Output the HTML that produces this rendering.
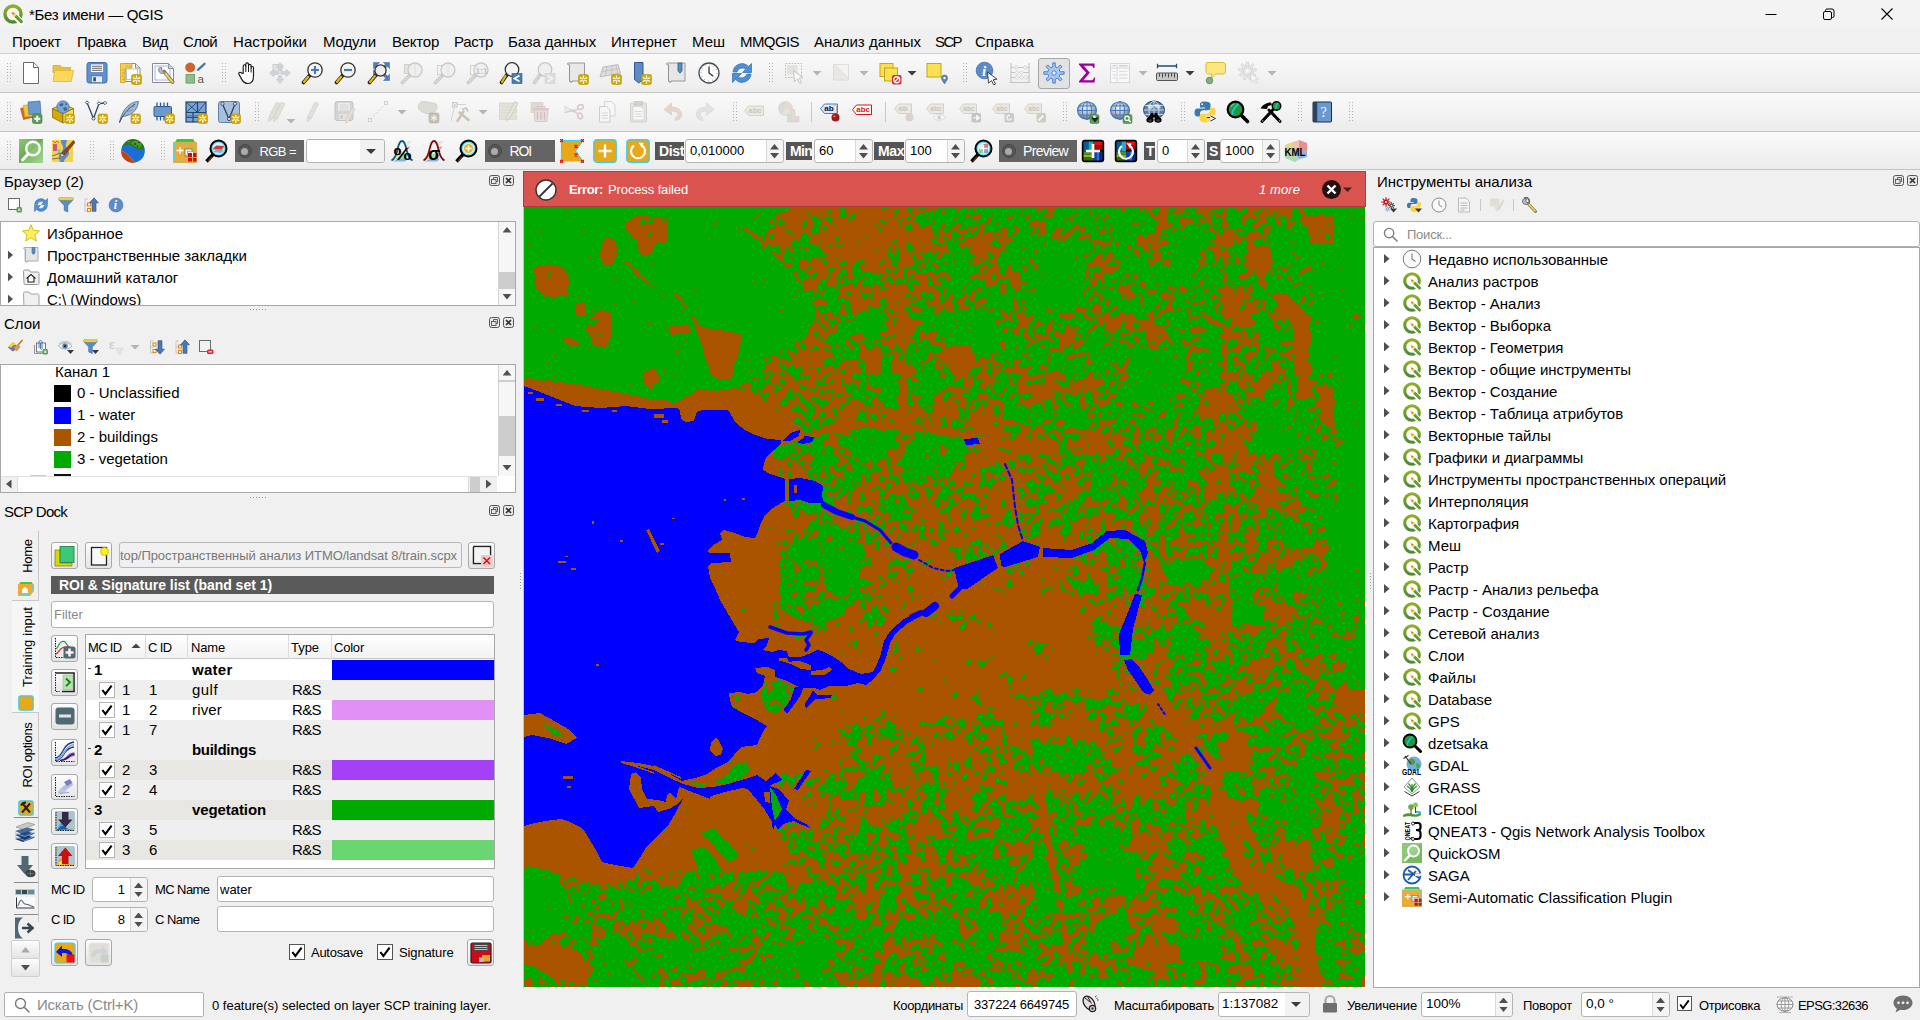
<!DOCTYPE html><html lang="ru"><head><meta charset="utf-8"><title>QGIS</title><style>
*{box-sizing:border-box}
html,body{margin:0;padding:0;overflow:hidden}
body{width:1920px;height:1020px;overflow:hidden;background:#f0f0f0;font-family:"Liberation Sans",sans-serif;font-size:15px;color:#000;position:relative}
.a{position:absolute}
.t{position:absolute;white-space:nowrap;line-height:1}
.s13{font-size:13px}
.tb{position:absolute;left:0;width:1920px;height:39px;background:linear-gradient(#fafafa,#ececec);border-bottom:1px solid #c4c4c4}
.grip{position:absolute;width:5px;height:22px;background-image:radial-gradient(circle,#b0b0b0 0.7px,transparent 1px);background-size:3px 3px}
.vsep{position:absolute;width:1px;background:#c8c8c8}
.ic{position:absolute;width:24px;height:24px}
.ic svg,.ic16 svg{display:block}
.ic16{position:absolute;width:16px;height:16px}
.dd{position:absolute;width:9px;height:4.5px;background:#3c3c3c;clip-path:polygon(0 0,100% 0,50% 100%)}
.dd.dis{background:#b4b4b4}
.box{position:absolute;background:#fff;border:1px solid #a8a8a8}
.fld{position:absolute;background:#fff;border:1px solid #b4b4b4;border-radius:2px}
.gray{position:absolute;background:#585858;color:#fff}
.btn{position:absolute;background:linear-gradient(#fdfdfd,#e4e4e4);border:1px solid #a9a9a9;border-radius:3px}
.sb{position:absolute;background:#f0f0f0}
.spin{position:absolute;background:#fff;border:1px solid #b4b4b4;border-radius:3px}
.spin .ar{position:absolute;right:0;top:0;bottom:0;width:17px;background:#f4f4f4;border-left:1px solid #d8d8d8;border-radius:0 3px 3px 0}
.up{position:absolute;width:9px;height:5.5px;background:#4f4f4f;clip-path:polygon(50% 0,100% 100%,0 100%)}
.dn{position:absolute;width:9px;height:5.5px;background:#4f4f4f;clip-path:polygon(0 0,100% 0,50% 100%)}
.cb{position:absolute;width:15px;height:15px;background:#fff;border:1px solid #555}
.rt{position:absolute;width:5.5px;height:9.4px;background:#505050;clip-path:polygon(0 0,100% 50%,0 100%)}
</style></head><body>
<div class="a" style="left:0;top:0;width:1920px;height:29px;background:#f3f3f3"></div>
<div class="a" style="left:2.0px;top:3.0px;width:22px;height:22px"><svg width="22" height="22" viewBox="0 0 20 20"><defs><linearGradient id="qg0" x1="0" y1="0" x2="0" y2="1"><stop offset="0" stop-color="#93b023"/><stop offset="1" stop-color="#4e8a38"/></linearGradient></defs><circle cx="10" cy="10" r="7.300" fill="none" stroke="url(#qg0)" stroke-width="3.100"/><path d="M12 12L19.500 19.500" stroke="#fff" stroke-width="5.600"/><path d="M8.600 8L12 9.400 10 11.400z" fill="#ee7913"/><path d="M12 9.400L13.300 10.700 11.300 12.700 10 11.400z" fill="#f0e64a"/><path d="M13.300 10.700L18.600 16a1.400 1.400 0 0 1-2 2L11.300 12.700z" fill="#589632"/><path d="M12.600 11.400L17.800 16.600" stroke="#7fb048" stroke-width="0.700"/></svg></div>
<div class="t " style="left:29px;top:6.5px;font-size:15px;letter-spacing:-0.310px;">*Без имени — QGIS</div>
<svg class="a" style="left:1740px;top:0" width="180" height="29" viewBox="0 0 180 29"><path d="M25.5 14.5h11" stroke="#000" stroke-width="1"/><rect x="83.5" y="11.5" width="8" height="8" rx="1.5" fill="none" stroke="#000"/><path d="M85.5 11.5v-1a1.5 1.5 0 0 1 1.5 -1.5h5a2 2 0 0 1 2 2v5a1.5 1.5 0 0 1 -1.5 1.5h-1" fill="none" stroke="#000"/><path d="M141.5 8.5l11 11M152.5 8.5l-11 11" stroke="#000" stroke-width="1.1"/></svg>
<div class="a" style="left:0;top:29px;width:1920px;height:25px;background:#f0f0f0;border-bottom:1px solid #d0d0d0"></div>
<div class="t " style="left:12px;top:33.5px;font-size:15px;letter-spacing:-0.07px">Проект</div>
<div class="t " style="left:77px;top:33.5px;font-size:15px;letter-spacing:-0.28px">Правка</div>
<div class="t " style="left:142px;top:33.5px;font-size:15px;letter-spacing:-0.38px">Вид</div>
<div class="t " style="left:183px;top:33.5px;font-size:15px;letter-spacing:-0.62px">Слой</div>
<div class="t " style="left:233px;top:33.5px;font-size:15px;letter-spacing:0.05px">Настройки</div>
<div class="t " style="left:323px;top:33.5px;font-size:15px;letter-spacing:-0.12px">Модули</div>
<div class="t " style="left:392px;top:33.5px;font-size:15px;letter-spacing:-0.24px">Вектор</div>
<div class="t " style="left:454px;top:33.5px;font-size:15px;letter-spacing:-0.31px">Растр</div>
<div class="t " style="left:508px;top:33.5px;font-size:15px;letter-spacing:-0.12px">База данных</div>
<div class="t " style="left:611px;top:33.5px;font-size:15px;letter-spacing:0.07px">Интернет</div>
<div class="t " style="left:692px;top:33.5px;font-size:15px;letter-spacing:-0.02px">Меш</div>
<div class="t " style="left:740px;top:33.5px;font-size:15px;letter-spacing:-0.59px">MMQGIS</div>
<div class="t " style="left:814px;top:33.5px;font-size:15px;letter-spacing:0.02px">Анализ данных</div>
<div class="t " style="left:935px;top:33.5px;font-size:15px;letter-spacing:-1.61px">SCP</div>
<div class="t " style="left:975px;top:33.5px;font-size:15px;letter-spacing:0.02px">Справка</div>
<div class="tb" style="top:54px;height:39px"></div>
<div class="tb" style="top:93px;height:39px"></div>
<div class="tb" style="top:132px;height:38px"></div>
<div class="grip" style="left:6px;top:62px"></div>
<div class="a" style="left:19.0px;top:61.0px;width:24px;height:24px"><svg width="24" height="24" viewBox="0 0 24 24"><path d="M4.5 1.5h10.2l4.8 4.8v16.2h-15z" fill="#fff" stroke="#6a6a6a"/><path d="M14.5 1.8v4.7h4.8" fill="#f2f2f2" stroke="#6a6a6a"/></svg></div>
<div class="a" style="left:51.0px;top:61.0px;width:24px;height:24px"><svg width="24" height="24" viewBox="0 0 24 24"><path d="M2 4.5h7.2l1.8 2h8.5v5H2z" fill="#e9c13c" stroke="#d2aa2e" stroke-width="0.8"/><path d="M3.6 9.5h19l-2.4 11H2.2z" fill="#fbd75b" stroke="#dcb63a" stroke-width="0.8"/></svg></div>
<div class="a" style="left:85.0px;top:61.0px;width:24px;height:24px"><svg width="24" height="24" viewBox="0 0 24 24"><rect x="2" y="1.5" width="20" height="20.5" rx="2.2" fill="#5f92cc" stroke="#3f6ea8"/><rect x="5.5" y="3" width="13" height="8.5" fill="#fdfdfd" stroke="#3f6ea8" stroke-width="0.6"/><path d="M7 5.3h10M7 7.3h10M7 9.3h10" stroke="#555" stroke-width="0.9"/><rect x="6.5" y="15" width="11" height="6.5" fill="#e8eef6" stroke="#3f6ea8" stroke-width="0.6"/><rect x="8.3" y="16.3" width="2.6" height="4" fill="#2d4a70"/></svg></div>
<div class="a" style="left:118.0px;top:61.0px;width:24px;height:24px"><svg width="24" height="24" viewBox="0 0 24 24"><path d="M7 2.5h10.5l4.5 4.5v13.5H7z" fill="#fff" stroke="#8a8a8a"/><path d="M17.5 2.8v4.2h4.2" fill="#eee" stroke="#8a8a8a"/><rect x="8.5" y="8" width="11" height="10.5" fill="none" stroke="#9fb4e8" stroke-width="0.8"/><path d="M2.5 2.5h11.5v4.5h-7v14.5h-4.5z" fill="#f5cf4c" stroke="#c9a21c" stroke-width="0.8"/><path d="M4 9h2M4 12h3M4 15h2M4 18h3M9 4v1.5M12 4v2" stroke="#c9a21c" stroke-width="0.8"/><rect x="13.5" y="13.5" width="10" height="10" rx="1.8" fill="#d4aa00" stroke="#b8920a" stroke-width="0.6"/><g stroke="#fff" stroke-width="1.3" stroke-linecap="round"><path d="M18.5 14.9V22.1M15.37 16.70L21.63 20.30M15.37 20.30L21.63 16.70"/></g><circle cx="18.5" cy="18.5" r="1.10" fill="#d4aa00"/></svg></div>
<div class="a" style="left:151.0px;top:61.0px;width:24px;height:24px"><svg width="24" height="24" viewBox="0 0 24 24"><path d="M1.5 2.5h16l5 5v14h-21z" fill="#fff" stroke="#8a8a8a"/><path d="M17.5 2.8v4.7h4.7" fill="#eee" stroke="#8a8a8a"/><rect x="4" y="5" width="15" height="14" fill="none" stroke="#9fb4e8" stroke-width="1"/><path d="M13 10.5l8.5 10.5" stroke="#8a7a4a" stroke-width="3.6" stroke-linecap="round"/><path d="M14.5 12.5l6.8 8.3" stroke="#f0d060" stroke-width="2" stroke-linecap="round"/><path d="M8.5 6.5a3.6 3.6 0 1 0 6 3.8l-2.2.4-1.8-1.6.5-2.4z" fill="#b8bcc2" stroke="#70757c" stroke-width="0.8"/></svg></div>
<div class="a" style="left:183.0px;top:61.0px;width:24px;height:24px"><svg width="24" height="24" viewBox="0 0 24 24"><circle cx="7.2" cy="6.5" r="4.6" fill="#d2622a" stroke="#b24a18" stroke-width="0.6"/><path d="M15 8.8l6.5-6" stroke="#4a76ae" stroke-width="2.4" stroke-linecap="round"/><rect x="3" y="13.5" width="8.6" height="8.6" fill="#8fbc8f" stroke="#5d9a5d" stroke-width="0.8"/><text x="14.5" y="21.8" style="font-family:'Liberation Sans',sans-serif" font-size="11.5" fill="#555">a</text></svg></div>
<div class="grip" style="left:221px;top:62px"></div>
<div class="a" style="left:235.0px;top:61.0px;width:24px;height:24px"><svg width="24" height="24" viewBox="0 0 24 24"><path d="M8.2 12.5V5.2c0-2 2.6-2 2.6 0V3.4c0-2 2.7-2 2.7 0v1.4c0-1.9 2.6-1.9 2.6 0v2c0-1.7 2.4-1.7 2.4 0v8.2c0 4-1.6 7.5-5.5 7.5-3.6 0-4.8-1.6-6.4-4.4L4 13.400c-1-1.800 1-2.800 2.200-1.500z" fill="#fff" stroke="#1a1a1a" stroke-width="1.15" stroke-linejoin="round"/><path d="M10.800 5v6M13.500 4.500v6.500M16.100 6.500v5" stroke="#1a1a1a" stroke-width="1"/></svg></div>
<div class="a" style="left:268.0px;top:61.0px;width:24px;height:24px"><svg width="24" height="24" viewBox="0 0 24 24"><rect x="5" y="3.500" width="9" height="9" fill="#e4e2dc" stroke="#cfcdc8"/><g fill="#cfd3d8" stroke="#bfc3c8" stroke-width="0.5"><path d="M12 1.500l3.800 4.500h-2.300v3.500h-3v-3.500H8.200z"/><path d="M12 22.500l3.800-4.500h-2.300v-3.500h-3v3.500H8.200z"/><path d="M1.500 12l4.500-3.800v2.300h3.500v3H6v2.300z"/><path d="M22.500 12l-4.500-3.800v2.300h-3.500v3H18v2.300z"/></g></svg></div>
<div class="a" style="left:301.0px;top:61.0px;width:24px;height:24px"><svg width="24" height="24" viewBox="0 0 24 24"><path d="M8.8 14.2L2.5 21.5" stroke="#222" stroke-width="3.6" stroke-linecap="round"/><path d="M7.2 15.8L3 21" stroke="#e6b800" stroke-width="2.2" stroke-linecap="round"/><circle cx="14" cy="9" r="7.2" fill="#f4f4f4" stroke="#333" stroke-width="1.3"/><path d="M10 9h8M14 5v8" stroke="#4a7ab5" stroke-width="2.2"/></svg></div>
<div class="a" style="left:334.0px;top:61.0px;width:24px;height:24px"><svg width="24" height="24" viewBox="0 0 24 24"><path d="M8.8 14.2L2.5 21.5" stroke="#222" stroke-width="3.6" stroke-linecap="round"/><path d="M7.2 15.8L3 21" stroke="#e6b800" stroke-width="2.2" stroke-linecap="round"/><circle cx="14" cy="9" r="7.2" fill="#f4f4f4" stroke="#333" stroke-width="1.3"/><path d="M10 9h8" stroke="#4a7ab5" stroke-width="2.2"/></svg></div>
<div class="a" style="left:367.0px;top:61.0px;width:24px;height:24px"><svg width="24" height="24" viewBox="0 0 24 24"><g fill="#4e80b8" stroke="#3a659a" stroke-width="0.5"><path d="M6.500 1.500h6l-2.200 2.200 2.500 2.500-2 2-2.500-2.500-1.800 2z"/><path d="M22.500 1.500v6l-2.200-2.200-2.500 2.500-2-2 2.500-2.500-2-1.800z"/><path d="M22.500 19.500h-6l2.200-2.200-2.500-2.500 2-2 2.500 2.500 1.800-2z"/><path d="M6.500 14v-5l2 2z"/></g><path d="M9.5 13.5L2.5 21.5" stroke="#222" stroke-width="3.6" stroke-linecap="round"/><path d="M7.9 15.1L3 21" stroke="#e6b800" stroke-width="2.2" stroke-linecap="round"/><circle cx="13.5" cy="9.5" r="5.6" fill="#ececec" stroke="#333" stroke-width="1.3"/></svg></div>
<div class="a" style="left:400.0px;top:61.0px;width:24px;height:24px"><svg width="24" height="24" viewBox="0 0 24 24"><rect x="4.500" y="3.500" width="8" height="9" fill="#e6e4de" stroke="#d2d0ca"/><path d="M10.0 14.0L2.5 21.5" stroke="#c8c8c8" stroke-width="3.6" stroke-linecap="round"/><path d="M8.4 15.6L3 21" stroke="#d8d6d0" stroke-width="2.2" stroke-linecap="round"/><circle cx="15" cy="9" r="7" fill="#efefef" stroke="#c8c8c8" stroke-width="1.3"/><path d="M15 2.500v13" stroke="#dcdcdc" stroke-width="0.8"/></svg></div>
<div class="a" style="left:433.0px;top:61.0px;width:24px;height:24px"><svg width="24" height="24" viewBox="0 0 24 24"><rect x="4.500" y="4.500" width="8" height="9" fill="#f4f4f4" stroke="#d2d0ca"/><path d="M10.0 14.0L2.5 21.5" stroke="#c8c8c8" stroke-width="3.6" stroke-linecap="round"/><path d="M8.4 15.6L3 21" stroke="#d8d6d0" stroke-width="2.2" stroke-linecap="round"/><circle cx="15" cy="9" r="7" fill="#efefef" stroke="#c8c8c8" stroke-width="1.3"/><path d="M15 2.500v13" stroke="#dcdcdc" stroke-width="0.8"/></svg></div>
<div class="a" style="left:466.0px;top:61.0px;width:24px;height:24px"><svg width="24" height="24" viewBox="0 0 24 24"><rect x="4.500" y="4.500" width="8" height="9" fill="#f4f4f4" stroke="#d2d0ca"/><path d="M10.0 14.0L2.5 21.5" stroke="#c8c8c8" stroke-width="3.6" stroke-linecap="round"/><path d="M8.4 15.6L3 21" stroke="#d8d6d0" stroke-width="2.2" stroke-linecap="round"/><circle cx="15" cy="9" r="7" fill="#efefef" stroke="#c8c8c8" stroke-width="1.3"/><text x="9.500" y="12.500" style="font-family:'Liberation Sans',sans-serif" font-weight="bold" font-size="8.500" fill="#c4c4c4">1:1</text></svg></div>
<div class="a" style="left:499.0px;top:61.0px;width:24px;height:24px"><svg width="24" height="24" viewBox="0 0 24 24"><path d="M8.1 13.4L2.5 21.5" stroke="#222" stroke-width="3.6" stroke-linecap="round"/><path d="M6.5 15.0L3 21" stroke="#e6b800" stroke-width="2.2" stroke-linecap="round"/><circle cx="13" cy="8.5" r="6.8" fill="#f4f4f4" stroke="#333" stroke-width="1.3"/><rect x="13" y="12.500" width="10" height="10" fill="#4a7ab5" stroke="#2f5a90" stroke-width="0.6"/><path d="M20.500 14.500l-5 3 5 3" fill="none" stroke="#fff" stroke-width="1.8"/></svg></div>
<div class="a" style="left:532.0px;top:61.0px;width:24px;height:24px"><svg width="24" height="24" viewBox="0 0 24 24"><path d="M8.1 13.4L2.5 21.5" stroke="#c8c8c8" stroke-width="3.6" stroke-linecap="round"/><path d="M6.5 15.0L3 21" stroke="#d8d6d0" stroke-width="2.2" stroke-linecap="round"/><circle cx="13" cy="8.5" r="6.8" fill="#efefef" stroke="#c8c8c8" stroke-width="1.3"/><rect x="13" y="12.500" width="10" height="10" fill="#dcdcdc" stroke="#cfcfcf" stroke-width="0.6"/><path d="M15.500 14.500l5 3-5 3" fill="none" stroke="#f4f4f4" stroke-width="1.8"/></svg></div>
<div class="a" style="left:565.0px;top:61.0px;width:24px;height:24px"><svg width="24" height="24" viewBox="0 0 24 24"><path d="M3.500 2c-1.500 0-1.500 1.800 0 1.800h1v15.700c0 2.500 3 2.500 3 .5h12V2z" fill="#e8e8e8" stroke="#8f8f8f" stroke-width="0.9"/><path d="M4.500 3.800v15.500c0 1.200 2 1.500 3 .7" fill="none" stroke="#8f8f8f" stroke-width="0.8"/><rect x="13.5" y="13.5" width="10" height="10" rx="1.8" fill="#d4aa00" stroke="#b8920a" stroke-width="0.6"/><g stroke="#fff" stroke-width="1.3" stroke-linecap="round"><path d="M18.5 14.9V22.1M15.37 16.70L21.63 20.30M15.37 20.30L21.63 16.70"/></g><circle cx="18.5" cy="18.5" r="1.10" fill="#d4aa00"/></svg></div>
<div class="a" style="left:598.0px;top:61.0px;width:24px;height:24px"><svg width="24" height="24" viewBox="0 0 24 24"><path d="M5 6l15-2.500 2.500 8.500L2 16z" fill="#dcdcdc" stroke="#b4b4b4" stroke-width="0.8"/><path d="M9 5.300l-2 10M14 4.500l-.5 9.800M18 3.900l1.500 8.800M4 10.500l17-3" stroke="#bcbcbc" stroke-width="0.7" fill="none"/><rect x="13.5" y="13.5" width="10" height="10" rx="1.8" fill="#d4aa00" stroke="#b8920a" stroke-width="0.6"/><g stroke="#fff" stroke-width="1.3" stroke-linecap="round"><path d="M18.5 14.9V22.1M15.37 16.70L21.63 20.30M15.37 20.30L21.63 16.70"/></g><circle cx="18.5" cy="18.5" r="1.10" fill="#d4aa00"/></svg></div>
<div class="a" style="left:631.0px;top:61.0px;width:24px;height:24px"><svg width="24" height="24" viewBox="0 0 24 24"><path d="M3.500 1.500h8.500v17l-4.200 3.500-4.300-3.500z" fill="#5b8cc6" stroke="#2f5a90"/><rect x="10.5" y="13.5" width="10" height="10" rx="1.8" fill="#d4aa00" stroke="#b8920a" stroke-width="0.6"/><g stroke="#fff" stroke-width="1.3" stroke-linecap="round"><path d="M15.5 14.9V22.1M12.37 16.70L18.63 20.30M12.37 20.30L18.63 16.70"/></g><circle cx="15.5" cy="18.5" r="1.10" fill="#d4aa00"/></svg></div>
<div class="a" style="left:664.0px;top:61.0px;width:24px;height:24px"><svg width="24" height="24" viewBox="0 0 24 24"><path d="M3.500 2c-1.500 0-1.500 1.800 0 1.800h1v15.700c0 2.500 3 2.500 3 .5h13.500V2z" fill="#e6e6e6" stroke="#8f8f8f" stroke-width="0.9"/><path d="M4.500 3.800v15.500c0 1.200 2 1.500 3 .7" fill="none" stroke="#8f8f8f" stroke-width="0.8"/><path d="M14 2h4v8l-2 2.200-2-2.200z" fill="#5b8cc6" stroke="#2f5a90" stroke-width="0.8"/></svg></div>
<div class="a" style="left:697.0px;top:61.0px;width:24px;height:24px"><svg width="24" height="24" viewBox="0 0 24 24"><circle cx="12" cy="12" r="10" fill="#fdfdfd" stroke="#4a4a4a" stroke-width="1.3"/><circle cx="12" cy="12" r="8" fill="none" stroke="#6a9ad4" stroke-width="1" stroke-dasharray="0.9 3.290"/><path d="M12 5.500V12l4.200 3.200" fill="none" stroke="#333" stroke-width="1.3"/></svg></div>
<div class="a" style="left:730.0px;top:61.0px;width:24px;height:24px"><svg width="24" height="24" viewBox="0 0 24 24"><path d="M3 11a9 9 0 0 1 15.500-5.500L21.500 2.500v9h-9l3.200-3.200A5.500 5.500 0 0 0 7 11z" fill="#4d8fd6" stroke="#2f6bb0" stroke-width="0.7"/><path d="M21 13a9 9 0 0 1-15.500 5.500L2.500 21.500v-9h9l-3.200 3.200A5.500 5.500 0 0 0 17 13z" fill="#4d8fd6" stroke="#2f6bb0" stroke-width="0.7"/></svg></div>
<div class="grip" style="left:768px;top:62px"></div>
<div class="a" style="left:783.0px;top:61.0px;width:24px;height:24px"><svg width="24" height="24" viewBox="0 0 24 24"><rect x="2.500" y="2.500" width="16" height="14" fill="none" stroke="#b4b4b4" stroke-width="0.9" stroke-dasharray="1.600 1.400"/><rect x="4" y="4" width="10.500" height="9.500" fill="#e4e2dc"/><path d="M10.500 9.500l9.500 7.200-3.800.5 2.300 4.300-1.800.9-2.200-4.300-3 2.500z" fill="#f8f8f8" stroke="#bdbdbd" stroke-width="0.9" stroke-linejoin="round"/></svg></div>
<div class="dd dis" style="left:812.5px;top:71px"></div>
<div class="a" style="left:830.0px;top:61.0px;width:24px;height:24px"><svg width="24" height="24" viewBox="0 0 24 24"><path d="M3.500 3.500h15v15.500h-15z" fill="#e9e7e1" stroke="#dcdad4"/><path d="M5 3.500h13.500v14z" fill="#f4f3f0" stroke="#dcdad4" stroke-width="0.8"/></svg></div>
<div class="dd dis" style="left:859.5px;top:71px"></div>
<div class="a" style="left:878.0px;top:61.0px;width:24px;height:24px"><svg width="24" height="24" viewBox="0 0 24 24"><rect x="2" y="2.500" width="13" height="13" fill="#fbe14f" stroke="#c9a21c"/><rect x="6.500" y="7" width="13" height="13" fill="#fbe14f" stroke="#c9a21c"/><rect x="14" y="14" width="9.500" height="9.500" rx="2" fill="#e0242c"/><circle cx="18.750" cy="18.750" r="3" fill="none" stroke="#fff" stroke-width="1.300"/><path d="M16.700 20.800l4.100-4.100" stroke="#fff" stroke-width="1.300"/></svg></div>
<div class="dd" style="left:907.5px;top:71px"></div>
<div class="a" style="left:925.0px;top:61.0px;width:24px;height:24px"><svg width="24" height="24" viewBox="0 0 24 24"><rect x="2" y="2.500" width="14" height="13.500" fill="#fbe14f" stroke="#c9a21c"/><path d="M19.500 23c-2-3-3-4.500-3-6a3 3 0 0 1 6 0c0 1.500-1 3-3 6z" fill="#5b86ae" stroke="#40688e" stroke-width="0.6"/><circle cx="19.500" cy="17" r="1.200" fill="#fff"/></svg></div>
<div class="grip" style="left:962px;top:62px"></div>
<div class="a" style="left:975.0px;top:61.0px;width:24px;height:24px"><svg width="24" height="24" viewBox="0 0 24 24"><circle cx="9.500" cy="9.500" r="8.300" fill="#5b8cc6" stroke="#3f6ea8" stroke-width="0.8"/><text x="7" y="15" font-family="Liberation Serif,serif" font-style="italic" font-weight="bold" font-size="15" fill="#fff">i</text><path d="M12.500 11l9.500 7.200-3.800.5 2.300 4.300-1.800.9-2.200-4.300-3 2.500z" fill="#fff" stroke="#333" stroke-width="0.9" stroke-linejoin="round"/></svg></div>
<div class="a" style="left:1008.0px;top:61.0px;width:24px;height:24px"><svg width="24" height="24" viewBox="0 0 24 24"><path d="M3 2v19M21 2v19M1.500 21.500h21M3 6.500h18M3 11.500h18M3 16.500h18" stroke="#c4c4c4" stroke-width="1.100" fill="none"/><g fill="#f6f0f0" stroke="#d8c4c4" stroke-width="0.8"><path d="M6 6.500l2-2 2 2-2 2zM15 6.500l2-2 2 2-2 2z"/></g><g fill="#f4f4f4" stroke="#cfcfcf" stroke-width="0.8"><path d="M7 11.500l2-2 2 2-2 2zM11.500 11.500l2-2 2 2-2 2zM7 16.500l2-2 2 2-2 2zM11.500 16.500l2-2 2 2-2 2zM16 16.500l2-2 2 2-2 2z"/></g></svg></div>
<div class="a" style="left:1038px;top:58px;width:32px;height:31px;background:#e2e2e2;border:1px solid #a6a6a6;border-radius:3px"></div>
<div class="a" style="left:1042.0px;top:61.0px;width:24px;height:24px"><svg width="24" height="24" viewBox="0 0 24 24"><path d="M10.79 5.92L10.72 1.88L13.28 1.88L13.21 5.92L15.44 6.84L18.25 3.94L20.06 5.75L17.16 8.56L18.08 10.79L22.12 10.72L22.12 13.28L18.08 13.21L17.16 15.44L20.06 18.25L18.25 20.06L15.44 17.16L13.21 18.08L13.28 22.12L10.72 22.12L10.79 18.08L8.56 17.16L5.75 20.06L3.94 18.25L6.84 15.44L5.92 13.21L1.88 13.28L1.88 10.72L5.92 10.79L6.84 8.56L3.94 5.75L5.75 3.94L8.56 6.84z" fill="#a9c7ee" stroke="#4a80c8" stroke-width="1" stroke-linejoin="round"/><circle cx="12" cy="12" r="2.200" fill="#f4f4f4" stroke="#4a80c8" stroke-width="1"/></svg></div>
<div class="a" style="left:1075.0px;top:61.0px;width:24px;height:24px"><svg width="24" height="24" viewBox="0 0 24 24"><path d="M4 2.500h15.500v4.500h-1.200c-.3-1.800-1-2.300-3-2.300H8.800l6 7-6.500 7.600h7.500c2 0 2.800-.8 3.200-2.800h1.200l-.7 5H4v-1.200l7.200-8.500L4 3.800z" fill="#9b009b"/></svg></div>
<div class="a" style="left:1108.0px;top:61.0px;width:24px;height:24px"><svg width="24" height="24" viewBox="0 0 24 24"><rect x="2.500" y="2.500" width="19" height="19" fill="#f8f8f8" stroke="#d4d8dc"/><path d="M2.500 7h19M9 2.500v19" stroke="#d4d8dc"/><path d="M4.500 4.800h3M11 4.800h8.500" stroke="#d0d0d0" stroke-width="1.600"/><path d="M4.500 10.500h3M11 10.500h8.500M4.500 13.800h3M11 13.800h8.500M4.500 17.100h3M11 17.100h8.500" stroke="#dcdcdc" stroke-width="1.200"/></svg></div>
<div class="dd dis" style="left:1138.5px;top:71px"></div>
<div class="a" style="left:1155.0px;top:61.0px;width:24px;height:24px"><svg width="24" height="24" viewBox="0 0 24 24"><path d="M2.500 5h19M2.500 2.800v4.400M21.500 2.800v4.400" stroke="#1f4e79" stroke-width="1.300" fill="none"/><rect x="1.500" y="12" width="21" height="7.500" rx="1" fill="#c8c8c8" stroke="#555"/><path d="M4.500 12.500v3M7.500 12.500v4M10.500 12.500v3M13.500 12.500v4M16.500 12.500v3M19.500 12.500v4" stroke="#333" stroke-width="0.9"/></svg></div>
<div class="dd" style="left:1185.5px;top:71px"></div>
<div class="a" style="left:1204.0px;top:61.0px;width:24px;height:24px"><svg width="24" height="24" viewBox="0 0 24 24"><path d="M3 1.500h16c1.500 0 2.500 1 2.500 2.500v6.500c0 1.500-1 2.500-2.500 2.500h-7.500L6.500 18.500l1.500-5.500H4.500C3 13 2 12 2 10.500V4c0-1.500.5-2.500 1-2.500z" fill="#fbe680" stroke="#d4b420" stroke-width="0.9"/><circle cx="5.500" cy="19.500" r="3.200" fill="#7fb27f" stroke="#4e8a4e" stroke-width="0.9"/></svg></div>
<div class="a" style="left:1237.0px;top:61.0px;width:24px;height:24px"><svg width="24" height="24" viewBox="0 0 24 24"><path d="M9.46 4.09L9.50 1.06L11.50 1.06L11.54 4.09L13.50 4.80L15.48 2.50L17.02 3.79L15.10 6.14L16.14 7.95L19.13 7.46L19.48 9.43L16.50 10.00L16.14 12.05L18.75 13.60L17.74 15.34L15.10 13.86L13.50 15.20L14.50 18.06L12.62 18.75L11.54 15.91L9.46 15.91L8.38 18.75L6.50 18.06L7.50 15.20L5.90 13.86L3.26 15.34L2.25 13.60L4.86 12.05L4.50 10.00L1.52 9.43L1.87 7.46L4.86 7.95L5.90 6.14L3.98 3.79L5.52 2.50L7.50 4.80z" fill="#ececec" stroke="#d4d4d4" stroke-width="0.9"/><circle cx="10.500" cy="10" r="4.500" fill="#e4e6ea" stroke="#d0d0d0"/><path d="M9 7.500l4 2.500-4 2.500z" fill="#f8f8f8"/><path d="M13.500 12l8 6-3.200.4 2 3.600-1.500.8-1.900-3.600-2.500 2.100z" fill="#f6f6f6" stroke="#d0d0d0" stroke-width="0.8" stroke-linejoin="round"/></svg></div>
<div class="dd dis" style="left:1267.5px;top:71px"></div>
<div class="grip" style="left:6px;top:101px"></div>
<div class="a" style="left:19.0px;top:100.0px;width:24px;height:24px"><svg width="24" height="24" viewBox="0 0 24 24"><path d="M1.500 8.500l10-2.500 3 11-10 2.500z" fill="#d2622a" stroke="#a84a18" stroke-width="0.6"/><path d="M4 5.500l10.500-1.500 1.800 11.500-10.500 1.500z" fill="#f4c430" stroke="#c9a21c" stroke-width="0.6"/><path d="M9 2l12-1 1 12.500-12 1z" fill="#6b98cf" stroke="#3f6ea8" stroke-width="0.7"/><rect x="13.500" y="14" width="9.500" height="9.500" rx="1.800" fill="#5a9a5a" stroke="#3c7a3c" stroke-width="0.6"/><path d="M18.250 15.800v6M15.250 18.800h6" stroke="#fff" stroke-width="1.900"/></svg></div>
<div class="a" style="left:51.0px;top:100.0px;width:24px;height:24px"><svg width="24" height="24" viewBox="0 0 24 24"><path d="M1.500 8.500l10.500 5v9.500l-10.500-5.500z" fill="#d4aa00" stroke="#7a6200" stroke-width="0.7"/><path d="M12 13.500l10.500-5v9l-10.500 5.500z" fill="#fbe14f" stroke="#7a6200" stroke-width="0.7"/><path d="M1.500 8.500l10.500-4.500 10.500 4.500-10.500 5z" fill="#e8c840" stroke="#7a6200" stroke-width="0.7"/><circle cx="12" cy="7" r="6.200" fill="#7aa3d6" stroke="#4a70a8" stroke-width="0.7"/><path d="M8 5c1-1.500 3-2 4-1.500s0 2-1 2.500-2 .5-3-1zM12.500 7.500c1.500-.5 3 0 3.500 1s-1 2.500-2 2.500-2-2.500-1.500-3.500zM14 3c1 0 2 .8 2.500 1.800l-2 .2z" fill="#3f6596"/><rect x="14" y="14" width="9.5" height="9.5" rx="1.8" fill="#d4aa00" stroke="#b8920a" stroke-width="0.6"/><g stroke="#fff" stroke-width="1.3" stroke-linecap="round"><path d="M18.75 15.33V22.17M15.77 17.04L21.73 20.46M15.77 20.46L21.73 17.04"/></g><circle cx="18.75" cy="18.75" r="1.04" fill="#d4aa00"/></svg></div>
<div class="a" style="left:84.0px;top:100.0px;width:24px;height:24px"><svg width="24" height="24" viewBox="0 0 24 24"><path d="M3 2.500l6.500 16L15 3.500l6 -.5" fill="none" stroke="#2b4660" stroke-width="1.300"/><g fill="#fff" stroke="#2b4660" stroke-width="0.9"><path d="M3 .8l1.700 1.700-1.700 1.700-1.700-1.700zM15 1.800l1.700 1.700-1.700 1.700-1.700-1.700zM21 1.300l1.700 1.700-1.700 1.700-1.700-1.700z"/><circle cx="9.500" cy="18.500" r="1.500"/></g><rect x="14" y="14" width="9.5" height="9.5" rx="1.8" fill="#d4aa00" stroke="#b8920a" stroke-width="0.6"/><g stroke="#fff" stroke-width="1.3" stroke-linecap="round"><path d="M18.75 15.33V22.17M15.77 17.04L21.73 20.46M15.77 20.46L21.73 17.04"/></g><circle cx="18.75" cy="18.75" r="1.04" fill="#d4aa00"/></svg></div>
<div class="a" style="left:117.0px;top:100.0px;width:24px;height:24px"><svg width="24" height="24" viewBox="0 0 24 24"><path d="M2.500 22.500c1.500-7 4-13 9.500-17.500 3-2.500 6.500-3.500 9.500-3.500-.5 4-2 8-5.500 11-3 2.500-7 3.500-10.500 4z" fill="#9fb9d6" stroke="#4a6a8e" stroke-width="0.8"/><path d="M2.500 22.500c3-7.500 8-13.500 15.500-18.500" fill="none" stroke="#35506e" stroke-width="1"/><path d="M8 12l8-2M11 8l7-2M6 16l7-1.500" stroke="#6f8db0" stroke-width="0.7"/><rect x="14" y="14" width="9.5" height="9.5" rx="1.8" fill="#d4aa00" stroke="#b8920a" stroke-width="0.6"/><g stroke="#fff" stroke-width="1.3" stroke-linecap="round"><path d="M18.75 15.33V22.17M15.77 17.04L21.73 20.46M15.77 20.46L21.73 17.04"/></g><circle cx="18.75" cy="18.75" r="1.04" fill="#d4aa00"/></svg></div>
<div class="a" style="left:151.0px;top:100.0px;width:24px;height:24px"><svg width="24" height="24" viewBox="0 0 24 24"><rect x="3" y="6.500" width="17.500" height="10" rx="1.200" fill="#6b98cf" stroke="#2f5a90" stroke-width="1"/><path d="M6 6.500V2.500M9.500 6.500V2.500M13 6.500V2.500M16.500 6.500V2.500M6 16.500v4M9.500 16.500v4M13 16.500v4" stroke="#2f5a90" stroke-width="1.300"/><rect x="14" y="14" width="9.5" height="9.5" rx="1.8" fill="#d4aa00" stroke="#b8920a" stroke-width="0.6"/><g stroke="#fff" stroke-width="1.3" stroke-linecap="round"><path d="M18.75 15.33V22.17M15.77 17.04L21.73 20.46M15.77 20.46L21.73 17.04"/></g><circle cx="18.75" cy="18.75" r="1.04" fill="#d4aa00"/></svg></div>
<div class="a" style="left:184.0px;top:100.0px;width:24px;height:24px"><svg width="24" height="24" viewBox="0 0 24 24"><rect x="2" y="2" width="20" height="20" fill="#7ba4d4" stroke="#1f4470" stroke-width="1.200"/><path d="M2 12.500h20M13.500 2v10.500M9 12.500V22M2 17.500h20" stroke="#1f4470" stroke-width="1.200"/><path d="M2 2l11.500 10.500M13.500 2L2 12.500M13.500 12.500L22 2" stroke="#1f4470" stroke-width="0.9"/><rect x="2.600" y="15" width="18.800" height="2.500" fill="#456e9e" opacity="0.500"/><rect x="14" y="14" width="9.5" height="9.5" rx="1.8" fill="#d4aa00" stroke="#b8920a" stroke-width="0.6"/><g stroke="#fff" stroke-width="1.3" stroke-linecap="round"><path d="M18.75 15.33V22.17M15.77 17.04L21.73 20.46M15.77 20.46L21.73 17.04"/></g><circle cx="18.75" cy="18.75" r="1.04" fill="#d4aa00"/></svg></div>
<div class="a" style="left:217.0px;top:100.0px;width:24px;height:24px"><svg width="24" height="24" viewBox="0 0 24 24"><rect x="1.500" y="1.500" width="21" height="21" rx="2.200" fill="#a8c0de" stroke="#5f82b0" stroke-width="1"/><path d="M5.500 4l6.500 15 6-15" fill="none" stroke="#2b4660" stroke-width="1.300"/><g fill="#dfe9f5" stroke="#2b4660" stroke-width="0.9"><circle cx="5.500" cy="3.800" r="1.600"/><circle cx="18" cy="3.800" r="1.600"/><circle cx="12" cy="19" r="1.600"/></g><rect x="14" y="14" width="9.5" height="9.5" rx="1.8" fill="#d4aa00" stroke="#b8920a" stroke-width="0.6"/><g stroke="#fff" stroke-width="1.3" stroke-linecap="round"><path d="M18.75 15.33V22.17M15.77 17.04L21.73 20.46M15.77 20.46L21.73 17.04"/></g><circle cx="18.75" cy="18.75" r="1.04" fill="#d4aa00"/></svg></div>
<div class="grip" style="left:254px;top:101px"></div>
<div class="a" style="left:266.0px;top:100.0px;width:24px;height:24px"><svg width="24" height="24" viewBox="0 0 24 24"><path d="M10.5 2l3.500 1.800-7.500 15-4 3 .5-5z" fill="#e2e0da" stroke="#d0cec8" stroke-width="0.7"/><path d="M3.0 16.800l3.500 1.800" stroke="#d0cec8" stroke-width="0.7"/><path d="M15.5 2l3.500 1.800-7.500 15-4 3 .5-5z" fill="#e2e0da" stroke="#d0cec8" stroke-width="0.7"/><path d="M8.0 16.800l3.500 1.800" stroke="#d0cec8" stroke-width="0.7"/></svg></div>
<div class="dd dis" style="left:286.5px;top:119px"></div>
<div class="a" style="left:301.0px;top:100.0px;width:24px;height:24px"><svg width="24" height="24" viewBox="0 0 24 24"><path d="M14 2l3.500 1.800-7.500 15-4 3 .5-5z" fill="#e2e0da" stroke="#d0cec8" stroke-width="0.7"/><path d="M6.5 16.800l3.500 1.800" stroke="#d0cec8" stroke-width="0.7"/></svg></div>
<div class="a" style="left:333.0px;top:100.0px;width:24px;height:24px"><svg width="24" height="24" viewBox="0 0 24 24"><rect x="2" y="1.500" width="18" height="19" rx="2" fill="#d4d4d4" stroke="#c4c4c4"/><rect x="5" y="3" width="12" height="7.500" fill="#ebebeb"/><path d="M6.500 5h9M6.500 7h9M6.500 9h9" stroke="#d0d0d0" stroke-width="0.800"/><rect x="6" y="14" width="9" height="6" fill="#e4e4e4"/><rect x="7.500" y="15.200" width="2.200" height="3.600" fill="#c8c8c8"/><path d="M19 8l3 1.500-6 11-3.500 2.500.5-4.500z" fill="#e6dcd4" stroke="#d4cac2" stroke-width="0.7"/></svg></div>
<div class="a" style="left:366.0px;top:100.0px;width:24px;height:24px"><svg width="24" height="24" viewBox="0 0 24 24"><path d="M4.500 19.500L19.500 3.500" stroke="#cfcfcf" stroke-width="1" stroke-dasharray="2.200 1.800"/><rect x="2.500" y="18.500" width="3" height="3" fill="#f4f4f4" stroke="#c8c8c8" stroke-width="0.8"/><rect x="18.500" y="1.500" width="3" height="3" fill="#f4f4f4" stroke="#c8c8c8" stroke-width="0.8"/></svg></div>
<div class="dd dis" style="left:397.5px;top:110px"></div>
<div class="a" style="left:416.0px;top:100.0px;width:24px;height:24px"><svg width="24" height="24" viewBox="0 0 24 24"><path d="M2.500 8c-1-4 2-6.500 6-6.500 3.500 0 5 1.500 8 1.500 3 0 4.500 1 4.500 3.500 0 3-2 5.500-5 6.500-3 .8-5.500 1-8.500-.5-2.500-1.200-4.500-2.500-5-4.500z" fill="#dadcd6" stroke="#cacbc4" stroke-width="0.8"/><rect x="13" y="13" width="10" height="10" rx="1.800" fill="#c4c0b0" stroke="#b4b0a0" stroke-width="0.6"/><g stroke="#f0f0f0" stroke-width="1.200"><path d="M18 14.800v6.400M15.200 16.400l5.600 3.200M15.200 19.600l5.600-3.200"/></g></svg></div>
<div class="a" style="left:448.0px;top:100.0px;width:24px;height:24px"><svg width="24" height="24" viewBox="0 0 24 24"><rect x="4.500" y="2.500" width="4.500" height="4.500" fill="#f4f4f4" stroke="#c4c0c0" stroke-width="0.8"/><path d="M5.300 3.300l3 3M8.300 3.300l-3 3" stroke="#c8b8b8" stroke-width="0.7"/><path d="M9 4.500h9M6.500 7L3 21" stroke="#d0d0d0" stroke-width="0.9"/><path d="M9.500 21l6-9.500M11.500 12.500l9 7.500" stroke="#c9c4b4" stroke-width="2.600" stroke-linecap="round"/><path d="M14 9.500l4-1.500 2 3.500" fill="none" stroke="#c4c4c4" stroke-width="1.800"/></svg></div>
<div class="dd dis" style="left:478.5px;top:110px"></div>
<div class="a" style="left:497.0px;top:100.0px;width:24px;height:24px"><svg width="24" height="24" viewBox="0 0 24 24"><g fill="#e4e2d4" stroke="#d2d0c2" stroke-width="0.7"><rect x="2.500" y="3" width="17" height="4.200"/><rect x="2.500" y="9" width="17" height="4.200"/><rect x="2.500" y="15" width="17" height="4.200"/></g><path d="M18 1.500l3 1.600-8 15-3.500 2.500.3-4.300z" fill="#e6e2dc" stroke="#c8c4be" stroke-width="0.7"/></svg></div>
<div class="a" style="left:528.0px;top:100.0px;width:24px;height:24px"><svg width="24" height="24" viewBox="0 0 24 24"><rect x="3" y="2.500" width="12" height="10" fill="#dcdad4" stroke="#d0cec8" stroke-width="0.6"/><path d="M5 8h16v1.800H5z" fill="#dcc8c8"/><path d="M9 8V6.500h8V8" fill="none" stroke="#dcc8c8" stroke-width="1.200"/><path d="M6 10h14l-1.200 11.500H7.200z" fill="#e8dcdc" stroke="#d8c4c4" stroke-width="0.9"/><path d="M9.500 12v7.500M13 12v7.500M16.500 12v7.500" stroke="#d4bcbc" stroke-width="1.200"/></svg></div>
<div class="a" style="left:562.0px;top:100.0px;width:24px;height:24px"><svg width="24" height="24" viewBox="0 0 24 24"><path d="M2 6.500l13 6.500M2.500 12.500l13-3" stroke="#d0d0d0" stroke-width="1.600"/><path d="M2 6.500l8 2.500-8 3.500" fill="#e8e8e8"/><ellipse cx="18.500" cy="7" rx="3" ry="2.200" fill="none" stroke="#dcc4c4" stroke-width="1.500" transform="rotate(-25 18.500 7)"/><ellipse cx="18" cy="16" rx="2.200" ry="3" fill="none" stroke="#dcc4c4" stroke-width="1.500" transform="rotate(-30 18 16)"/></svg></div>
<div class="a" style="left:595.0px;top:100.0px;width:24px;height:24px"><svg width="24" height="24" viewBox="0 0 24 24"><path d="M9.500 1.500h7l3.500 3.500v11h-10.500z" fill="#f6f6f6" stroke="#d0d0d0" stroke-width="0.9"/><path d="M4.500 6.500h7l3.500 3.500v12h-10.500z" fill="#f6f6f6" stroke="#c8c8c8" stroke-width="0.9"/><path d="M6.500 13h6.500M6.500 15.500h6.500M6.500 18h6.500" stroke="#d4d4d4" stroke-width="0.9"/></svg></div>
<div class="a" style="left:627.0px;top:100.0px;width:24px;height:24px"><svg width="24" height="24" viewBox="0 0 24 24"><rect x="3.500" y="3" width="16" height="19" rx="1" fill="#e6e4de" stroke="#cfcdc7" stroke-width="0.9"/><rect x="7.500" y="1.500" width="8" height="3.500" fill="#d4d2cc" stroke="#c4c2bc" stroke-width="0.7"/><path d="M6 6.500h8l3 3v10.500H6z" fill="#f8f8f8" stroke="#d0d0d0" stroke-width="0.8"/><path d="M8 11.500h7M8 14h7M8 16.500h7" stroke="#d4d4d4" stroke-width="0.9"/></svg></div>
<div class="a" style="left:661.0px;top:100.0px;width:24px;height:24px"><svg width="24" height="24" viewBox="0 0 24 24"><path d="M3 9.500l7.500-6.500v4c6 0 10 3 10 7.500 0 3.500-2.500 5.500-6 6v-3c1.500-.5 2.500-1.500 2.500-3 0-2-2.500-3.500-6.500-3.500v4z" fill="#e6d4d0" stroke="#dcc8c4" stroke-width="0.7"/></svg></div>
<div class="a" style="left:693.0px;top:100.0px;width:24px;height:24px"><svg width="24" height="24" viewBox="0 0 24 24"><path d="M21 9.500l-7.500-6.500v4c-6 0-10 3-10 7.500 0 3.500 2.500 5.500 6 6v-3c-1.500-.5-2.500-1.500-2.500-3 0-2 2.500-3.500 6.500-3.500v4z" fill="#dfe4df" stroke="#d0d6d0" stroke-width="0.7"/></svg></div>
<div class="grip" style="left:732px;top:101px"></div>
<div class="a" style="left:743.0px;top:100.0px;width:24px;height:24px"><svg width="24" height="24" viewBox="0 0 24 24"><path d="M5.5 6h15v9.5h-15l-4-4.75z" fill="#ebe9e1" stroke="#d4d2ca" stroke-width="1"/><text x="5.3" y="13.0" textLength="13.5" lengthAdjust="spacingAndGlyphs" style="font-family:'Liberation Sans',sans-serif;font-weight:bold;font-size:8px" fill="#c8c6be">abc</text></svg></div>
<div class="a" style="left:777.0px;top:100.0px;width:24px;height:24px"><svg width="24" height="24" viewBox="0 0 24 24"><circle cx="8.500" cy="8.500" r="7" fill="#d8dcd4" stroke="#cfd2ca" stroke-width="0.6"/><path d="M8.500 8.500V1.500a7 7 0 0 1 6.100 10.500z" fill="#e8d8d4"/><path d="M8.500 8.500l6.100 3.500a7 7 0 0 1-10 2z" fill="#e4e4dc"/><rect x="10.500" y="14" width="3.500" height="8" fill="#d4dcd4" stroke="#c8d0c8" stroke-width="0.500"/><rect x="14.500" y="9.500" width="3.500" height="12.500" fill="#e0dcd0" stroke="#d4d0c4" stroke-width="0.500"/><rect x="18.500" y="16.500" width="3.500" height="5.500" fill="#e4d4d4" stroke="#d8c8c8" stroke-width="0.500"/></svg></div>
<div class="vsep" style="left:811px;top:102px;height:20px"></div>
<div class="a" style="left:819.0px;top:100.0px;width:24px;height:24px"><svg width="24" height="24" viewBox="0 0 24 24"><path d="M5.5 4h13v9.5h-13l-4-4.75z" fill="#dbe6f6" stroke="#4a80c8" stroke-width="1"/><text x="5.3" y="11.0" textLength="9.5" lengthAdjust="spacingAndGlyphs" style="font-family:'Liberation Sans',sans-serif;font-weight:bold;font-size:8px" fill="#111">ab</text><path d="M15.500 6.500c0-1.500 2-1.500 2 0v7" fill="#fff" stroke="#888" stroke-width="0.600"/><circle cx="16.500" cy="17.500" r="4" fill="#a01818"/><circle cx="15.300" cy="16.300" r="1.200" fill="#d46060"/></svg></div>
<div class="a" style="left:851.0px;top:100.0px;width:24px;height:24px"><svg width="24" height="24" viewBox="0 0 24 24"><path d="M5.5 5h15v9.5h-15l-4-4.75z" fill="#fff" stroke="#e01010" stroke-width="1"/><text x="5.3" y="12.0" textLength="13.5" lengthAdjust="spacingAndGlyphs" style="font-family:'Liberation Sans',sans-serif;font-weight:bold;font-size:8px" fill="#e01010">abc</text></svg></div>
<div class="vsep" style="left:885px;top:102px;height:20px"></div>
<div class="a" style="left:893.0px;top:100.0px;width:24px;height:24px"><svg width="24" height="24" viewBox="0 0 24 24"><path d="M5.5 4h13v9.5h-13l-4-4.75z" fill="#ebe9e1" stroke="#d4d2ca" stroke-width="1"/><text x="5.3" y="11.0" textLength="9.5" lengthAdjust="spacingAndGlyphs" style="font-family:'Liberation Sans',sans-serif;font-weight:bold;font-size:8px" fill="#c8c6be">ab</text><path d="M15.500 6.500c0-1.500 2-1.500 2 0v7" fill="#f4f4f4" stroke="#d4d4d4" stroke-width="0.600"/><circle cx="16.500" cy="17.500" r="4" fill="#dcd0d0"/></svg></div>
<div class="a" style="left:925.0px;top:100.0px;width:24px;height:24px"><svg width="24" height="24" viewBox="0 0 24 24"><path d="M5.5 4h13v9.5h-13l-4-4.75z" fill="#ebe9e1" stroke="#d4d2ca" stroke-width="1"/><text x="5.3" y="11.0" textLength="11.5" lengthAdjust="spacingAndGlyphs" style="font-family:'Liberation Sans',sans-serif;font-weight:bold;font-size:8px" fill="#c8c6be">abc</text><path d="M8 17.500c3-4 9-4 12.500 0-3.500 3.500-9.500 3.500-12.500 0z" fill="#f8f8f8" stroke="#d0d0d0" stroke-width="0.800"/><circle cx="14.200" cy="17.500" r="2" fill="#cfcfcf"/></svg></div>
<div class="a" style="left:958.0px;top:100.0px;width:24px;height:24px"><svg width="24" height="24" viewBox="0 0 24 24"><path d="M5.5 4h13v9.5h-13l-4-4.75z" fill="#ebe9e1" stroke="#d4d2ca" stroke-width="1"/><text x="5.3" y="11.0" textLength="11.5" lengthAdjust="spacingAndGlyphs" style="font-family:'Liberation Sans',sans-serif;font-weight:bold;font-size:8px" fill="#c8c6be">abc</text><rect x="13.500" y="13" width="9.500" height="9.500" rx="1.800" fill="#c4c4c4"/><path d="M15 17.750h3.500v-2.500l3.500 2.500-3.500 2.500v-2.500" fill="#f4f4f4" stroke="#f4f4f4" stroke-width="1"/></svg></div>
<div class="a" style="left:991.0px;top:100.0px;width:24px;height:24px"><svg width="24" height="24" viewBox="0 0 24 24"><path d="M5.5 4h13v9.5h-13l-4-4.75z" fill="#ebe9e1" stroke="#d4d2ca" stroke-width="1"/><text x="5.3" y="11.0" textLength="11.5" lengthAdjust="spacingAndGlyphs" style="font-family:'Liberation Sans',sans-serif;font-weight:bold;font-size:8px" fill="#c8c6be">abc</text><rect x="13.500" y="13" width="9.500" height="9.500" rx="1.800" fill="#c8c8c8"/><path d="M20.500 17.750a2.300 2.300 0 1 1-2.300-2.300" fill="none" stroke="#f0f0f0" stroke-width="1.400"/><path d="M17.500 13.800l2 1.600-2 1.600z" fill="#f0f0f0"/></svg></div>
<div class="a" style="left:1023.0px;top:100.0px;width:24px;height:24px"><svg width="24" height="24" viewBox="0 0 24 24"><path d="M5.5 4h13v9.5h-13l-4-4.75z" fill="#ebe9e1" stroke="#d4d2ca" stroke-width="1"/><text x="5.3" y="11.0" textLength="11.5" lengthAdjust="spacingAndGlyphs" style="font-family:'Liberation Sans',sans-serif;font-weight:bold;font-size:8px" fill="#c8c6be">abc</text><rect x="13.500" y="13" width="9.500" height="9.500" rx="1.800" fill="#d0ccc0"/><path d="M15.500 20.500l5-5" stroke="#f4f4f4" stroke-width="2"/></svg></div>
<div class="grip" style="left:1062px;top:101px"></div>
<div class="a" style="left:1076.0px;top:100.0px;width:24px;height:24px"><svg width="24" height="24" viewBox="0 0 24 24"><defs><radialGradient id="gg1" cx="0.450" cy="0.350" r="0.750"><stop offset="0" stop-color="#fafafa"/><stop offset="0.600" stop-color="#a8a8a8"/><stop offset="1" stop-color="#484848"/></radialGradient></defs><ellipse cx="11" cy="10.5" rx="9.5" ry="8.8" fill="url(#gg1)" stroke="#3f78c8" stroke-width="1.100"/><g fill="none" stroke="#3f78c8" stroke-width="1"><ellipse cx="11" cy="10.5" rx="4.6" ry="8.8"/><path d="M11 1.6999999999999993v17.6M1.5 10.5h19.0M2.9 5.9h16.1M2.9 15.1h16.1"/></g><rect x="14" y="14.500" width="9" height="9" rx="1.500" fill="#5a9a5a" stroke="#3c7a3c" stroke-width="0.500"/><path d="M15 17.500h8l-4 5z" fill="#222"/><path d="M17.300 15.500h2.400v2.500h-2.400z" fill="#e8e8e8"/></svg></div>
<div class="a" style="left:1109.0px;top:100.0px;width:24px;height:24px"><svg width="24" height="24" viewBox="0 0 24 24"><defs><radialGradient id="gg2" cx="0.450" cy="0.350" r="0.750"><stop offset="0" stop-color="#fafafa"/><stop offset="0.600" stop-color="#a8a8a8"/><stop offset="1" stop-color="#484848"/></radialGradient></defs><ellipse cx="11" cy="10.5" rx="9.5" ry="8.8" fill="url(#gg2)" stroke="#3f78c8" stroke-width="1.100"/><g fill="none" stroke="#3f78c8" stroke-width="1"><ellipse cx="11" cy="10.5" rx="4.6" ry="8.8"/><path d="M11 1.6999999999999993v17.6M1.5 10.5h19.0M2.9 5.9h16.1M2.9 15.1h16.1"/></g><rect x="14" y="14.500" width="9" height="9" rx="1.500" fill="#5a9a5a" stroke="#3c7a3c" stroke-width="0.500"/><circle cx="18" cy="18.300" r="2.200" fill="none" stroke="#fff" stroke-width="1.200"/><path d="M19.600 20l2 2" stroke="#fff" stroke-width="1.400"/></svg></div>
<div class="a" style="left:1142.0px;top:100.0px;width:24px;height:24px"><svg width="24" height="24" viewBox="0 0 24 24"><ellipse cx="12" cy="10" rx="10.500" ry="9" fill="#5d80a8" stroke="#1f3c60" stroke-width="1"/><g fill="none" stroke="#e4ecf4" stroke-width="0.800"><ellipse cx="12" cy="10" rx="5" ry="9"/><path d="M12 1v18M1.500 10h21M3.200 5.500h17.600M3.200 14.500h17.600"/></g><path d="M6 5c2-1 4 0 5 1s-1 3-3 3-3-2-2-4zM13 4l4 .5 2 3-3 1.500-3-2z" fill="#e4ecf4" opacity="0.800"/><path d="M9 13h2.200l.8 2.500.8-2.500H15l3.500 6.500h-5l-.5-2h-2l-.5 2h-5z" fill="#000"/><ellipse cx="8" cy="20" rx="3.600" ry="2.800" fill="#000"/><ellipse cx="16" cy="20" rx="3.600" ry="2.800" fill="#000"/><ellipse cx="8" cy="20.500" rx="1.800" ry="1.200" fill="#3a3a3a"/><ellipse cx="16" cy="20.500" rx="1.800" ry="1.200" fill="#3a3a3a"/></svg></div>
<div class="grip" style="left:1180px;top:101px"></div>
<div class="a" style="left:1193.0px;top:100.0px;width:24px;height:24px"><svg width="24" height="24" viewBox="0 0 24 24"><path d="M11.500 1.500c-4 0-4.500 1.800-4.500 3.200V7.500h5v1H4.500C2.500 8.500 1.500 10 1.500 12.500s1 4 3 4H7v-3c0-2 1.500-3.200 3.500-3.200h4.500c1.500 0 2.500-1 2.500-2.500V4.700c0-2-2-3.200-6-3.200z" fill="#3d78ae"/><circle cx="9.200" cy="4.200" r="0.900" fill="#fff"/><path d="M12.500 22.500c4 0 4.500-1.800 4.500-3.200V16.500h-5v-1h7.500c2 0 3-1.500 3-4s-1-4-3-4H17v3c0 2-1.500 3.200-3.500 3.200H9c-1.500 0-2.500 1-2.500 2.500v3.100c0 2 2 3.200 6 3.200z" fill="#fbd343"/><circle cx="14.800" cy="19.800" r="0.900" fill="#fff"/><path d="M14 17.500h3M17.500 16l5 2.500-5 2.500" fill="none" stroke="#333" stroke-width="1"/></svg></div>
<div class="a" style="left:1226.0px;top:100.0px;width:24px;height:24px"><svg width="24" height="24" viewBox="0 0 24 24"><path d="M14.500 14.500l7 7" stroke="#000" stroke-width="3.600" stroke-linecap="round"/><circle cx="9.500" cy="9.500" r="7.800" fill="#1f9a3a" stroke="#000" stroke-width="2.200"/><path d="M12.500 4c-2 1.500-3 3-4.500 5s-2 4-1.500 6" fill="none" stroke="#18c8e8" stroke-width="1.800"/><path d="M5 7c.5-1.500 1.500-2.500 3-3" fill="none" stroke="#8fe8a0" stroke-width="1"/></svg></div>
<div class="a" style="left:1259.0px;top:100.0px;width:24px;height:24px"><svg width="24" height="24" viewBox="0 0 24 24"><path d="M3 21.500L15.500 8" stroke="#000" stroke-width="3" stroke-linecap="round"/><path d="M1.500 8.500c2-3.500 6-6 10.500-6l1 2.500-4 1-1 3z" fill="#000"/><path d="M21 21.500L10 10" stroke="#000" stroke-width="3" stroke-linecap="round"/><circle cx="17.500" cy="6" r="4.200" fill="#1f9a3a" stroke="#000" stroke-width="1.500"/><path d="M19 3c-1.500 1.500-2.500 3.500-2.500 6" fill="none" stroke="#18c8e8" stroke-width="1.400"/><circle cx="3.800" cy="20.800" r="0.600" fill="#fff"/><circle cx="20.300" cy="20.800" r="0.600" fill="#fff"/></svg></div>
<div class="grip" style="left:1297px;top:101px"></div>
<div class="a" style="left:1310.0px;top:100.0px;width:24px;height:24px"><svg width="24" height="24" viewBox="0 0 24 24"><rect x="3" y="2" width="18.500" height="20" rx="0.800" fill="#6b98cf" stroke="#1f2f40" stroke-width="1"/><rect x="3" y="2" width="4.200" height="20" fill="#2c4460"/><text x="10.500" y="17" style="font-family:'Liberation Serif',serif;font-size:14px" fill="#fff">?</text></svg></div>
<div class="grip" style="left:1348px;top:101px"></div>
<div class="grip" style="left:6px;top:140px"></div>
<div class="a" style="left:19.0px;top:139.0px;width:24px;height:24px"><svg width="24" height="24" viewBox="0 0 24 24"><defs><linearGradient id="qo" x1="0" y1="0" x2="1" y2="1"><stop offset="0" stop-color="#8cc878"/><stop offset="0.500" stop-color="#68a850"/><stop offset="0.510" stop-color="#7ab864"/><stop offset="1" stop-color="#a4d890"/></linearGradient></defs><rect x="0" y="0" width="24" height="24" fill="url(#qo)"/><path d="M9.500 14.500L3.500 21" stroke="#fff" stroke-width="3" stroke-linecap="round"/><circle cx="14" cy="9.500" r="6.800" fill="#9ad088" fill-opacity="0.500" stroke="#fff" stroke-width="2.400"/></svg></div>
<div class="a" style="left:51.0px;top:139.0px;width:24px;height:24px"><svg width="24" height="24" viewBox="0 0 24 24"><rect x="1" y="1" width="21" height="22" fill="#f6d24a"/><path d="M10 1c-1 4 3 5 2 9s-5 5-4 9l1 4h4c0-4 5-5 5-9s-4-5-3-9l1-4z" fill="#5a8ad0"/><rect x="2" y="5" width="4" height="7" fill="#c85a8a"/><rect x="6.500" y="10" width="3" height="5" fill="#8ac8a0"/><path d="M1 17l9-3M1 20l8-1" stroke="#555" stroke-width="0.800"/><path d="M2 2l2 2 2-2 2 2" fill="none" stroke="#d06a3a" stroke-width="1"/><path d="M22.500 1.500l1.500 2L13 16.500l-3.500 1.500 1-3.500z" fill="#8a4a1a" stroke="#5a2a0a" stroke-width="0.600"/><path d="M9.500 18l3.500-1.500-2.500-2z" fill="#e8d0a0"/></svg></div>
<div class="grip" style="left:89px;top:140px"></div>
<div class="grip" style="left:109px;top:140px"></div>
<div class="a" style="left:121.0px;top:139.0px;width:24px;height:24px"><svg width="24" height="24" viewBox="0 0 24 24"><defs><clipPath id="g3c"><circle cx="12" cy="12" r="11.800"/></clipPath></defs><g clip-path="url(#g3c)"><rect width="24" height="24" fill="#1a6ed8"/><path d="M0 9l7-9h17v9c-3 2-6 1.500-8 1s-4-3-7-4-6 1-9 3z" fill="#2a7a1a"/><path d="M5 2h15v6c-3 1-5 0-7-1.500S9 3.500 5 2z" fill="#4a9a2a"/><g fill="#183c10"><circle cx="10" cy="3" r="0.800"/><circle cx="14" cy="5" r="0.900"/><circle cx="18" cy="3.500" r="0.800"/><circle cx="12" cy="1.500" r="0.700"/><circle cx="16.500" cy="7" r="0.800"/></g><path d="M0 12c3 0 8 4 14 12H0z" fill="#c8400a"/><path d="M0 12c3 0 8 4 14 12" fill="none" stroke="#f07020" stroke-width="0.800"/></g></svg></div>
<div class="grip" style="left:160px;top:140px"></div>
<div class="a" style="left:173.0px;top:139.0px;width:24px;height:24px"><svg width="24" height="24" viewBox="0 0 24 24"><path d="M2 3l2-3h16l2 3z" fill="#3cc83c"/><rect x="0" y="3" width="24" height="21" fill="#f0a838"/><rect x="1.500" y="4.500" width="21" height="18" fill="none" stroke="#3ce0e8" stroke-width="1.400" stroke-dasharray="3 1.800"/><path d="M3.500 11.500h7M7 8v7" stroke="#fff" stroke-width="1.400"/><rect x="12" y="10" width="7" height="7" fill="#f4f4f4" stroke="#4a8a5a" stroke-width="0.800"/><rect x="14.500" y="12.500" width="6" height="6" fill="#f4f4f4" stroke="#888" stroke-width="0.600"/><g fill="#d01010"><rect x="15" y="14" width="4" height="4"/><rect x="20" y="14" width="3.500" height="4"/><rect x="15" y="19" width="4" height="3.500"/><rect x="20" y="19" width="3.500" height="3.500"/></g></svg></div>
<div class="a" style="left:205.0px;top:139.0px;width:24px;height:24px"><svg width="24" height="24" viewBox="0 0 24 24"><path d="M8 15.500L1.500 22.500" stroke="#000" stroke-width="3.400" stroke-linecap="butt"/><path d="M7 18l-4 4.500" stroke="#7a3a10" stroke-width="1.200"/><circle cx="13.5" cy="9.5" r="8" fill="#6adcf0" stroke="#000" stroke-width="2"/><circle cx="13.5" cy="9.5" r="5.8" fill="#d4f4fa"/><path d="M7.500 11l4-3 8 .5-3.500 3.500z" fill="#60c878"/><path d="M7.500 9.500l4-3 8 .5-3.500 3.500z" fill="#e03030"/><path d="M8 13l4-2.500 7 .5-3 3z" fill="#88a8e0"/></svg></div>
<div class="gray" style="left:235px;top:140px;width:69px;height:22px;background:#646464"></div>
<div class="a" style="left:237.5px;top:144px;width:14px;height:14px;border-radius:7px;background:#555;border:1px solid #484848"></div><div class="a" style="left:241px;top:147.5px;width:7px;height:7px;border-radius:3.5px;background:#ababab"></div>
<div class="t " style="left:259.5px;top:144.5px;font-size:13px;color:#fff;letter-spacing:-0.575px;">RGB =</div>
<div class="fld" style="left:306px;top:139px;width:79px;height:24px;border-radius:3px"></div>
<div class="a" style="left:360px;top:140px;width:24px;height:22px;background:#f2f2f2;border-radius:0 3px 3px 0"></div>
<div class="dd" style="left:366px;top:149px;width:10px;height:5px"></div>
<div class="a" style="left:390.0px;top:139.0px;width:24px;height:24px"><svg width="24" height="24" viewBox="0 0 24 24"><path d="M17 2l5 0-6 6zM3 22l8-8h8l-4 8z" fill="#e4e4e4"/><path d="M5 20l6-5h7l-4 5z" fill="#90e890"/><path d="M3 22.500l6-3h9l-3 3z" fill="#88b0f0"/><path d="M16 9l4-2-1 3z" fill="#f08080"/><path d="M1.500 21.500c4-2 5-6 6-11s2-8.500 4.500-8.500 3.500 3.500 4.500 8.500 2 9 6 11" fill="none" stroke="#0a5a78" stroke-width="1.800"/><text x="3.500" y="20.500" style="font-family:'Liberation Sans',sans-serif;font-weight:bold;font-size:17px" fill="#000" textLength="18" lengthAdjust="spacingAndGlyphs">%</text></svg></div>
<div class="a" style="left:422.0px;top:139.0px;width:24px;height:24px"><svg width="24" height="24" viewBox="0 0 24 24"><path d="M17 2l5 0-6 6zM3 22l8-8h8l-4 8z" fill="#e4e4e4"/><path d="M5 20l6-5h7l-4 5z" fill="#90e890"/><path d="M3 22.500l6-3h9l-3 3z" fill="#88b0f0"/><path d="M16 9l4-2-1 3z" fill="#f08080"/><path d="M1.500 21.500c4-2 5-6 6-11s2-8.500 4.500-8.500 3.500 3.500 4.500 8.500 2 9 6 11" fill="none" stroke="#8a0a0a" stroke-width="1.800"/><text x="6" y="20.500" style="font-family:'Liberation Sans',sans-serif;font-weight:bold;font-size:18px" fill="#000">σ</text></svg></div>
<div class="a" style="left:455.0px;top:139.0px;width:24px;height:24px"><svg width="24" height="24" viewBox="0 0 24 24"><path d="M8 15.500L1.500 22.500" stroke="#000" stroke-width="3.400" stroke-linecap="butt"/><path d="M7 18l-4 4.500" stroke="#7a3a10" stroke-width="1.200"/><circle cx="13.5" cy="9.5" r="8" fill="#6adcf0" stroke="#000" stroke-width="2"/><circle cx="13.5" cy="9.5" r="5.8" fill="#d4f4fa"/><circle cx="13.500" cy="9.500" r="4.500" fill="#f0b030"/><path d="M10.500 9.500h6M13.500 6.500v6" stroke="#fff" stroke-width="1.300"/></svg></div>
<div class="gray" style="left:485px;top:140px;width:70px;height:22px;background:#646464"></div>
<div class="a" style="left:487.5px;top:144px;width:14px;height:14px;border-radius:7px;background:#555;border:1px solid #484848"></div><div class="a" style="left:491px;top:147.5px;width:7px;height:7px;border-radius:3.5px;background:#ababab"></div>
<div class="t " style="left:509.5px;top:144.0px;font-size:14px;color:#fff;letter-spacing:-1.130px;">ROI</div>
<div class="a" style="left:560.0px;top:139.0px;width:24px;height:24px"><svg width="24" height="24" viewBox="0 0 24 24"><path d="M1 1.500h22.500l-7.500 10.500 7.500 10.500H1z" fill="#e8a818"/><path d="M1.500 1.500h21.500l-7.500 10.500 7.500 10.500" fill="none" stroke="#38d0f0" stroke-width="1"/><path d="M1.500 1.500v21" stroke="#38d0f0" stroke-width="1.200"/><g stroke="#e81010" stroke-width="1.300"><path d="M0 0l3 3M3 0l-3 3M21 0l3 3M24 0l-3 3M0 21l3 3M3 21l-3 3M21 21l3 3M24 21l-3 3M14.500 6l3 3M17.500 6l-3 3M14.500 14.500l3 3M17.500 14.500l-3 3"/></g></svg></div>
<div class="a" style="left:593.0px;top:139.0px;width:24px;height:24px"><svg width="24" height="24" viewBox="0 0 24 24"><rect x="0.800" y="0.800" width="22.400" height="22.400" rx="3" fill="#e8a818" stroke="#38d0f0" stroke-width="1.400"/><path d="M5.500 12h13M12 5.500v13" stroke="#fff" stroke-width="2.400"/></svg></div>
<div class="a" style="left:626.0px;top:139.0px;width:24px;height:24px"><svg width="24" height="24" viewBox="0 0 24 24"><rect x="0.800" y="0.800" width="22.400" height="22.400" rx="3" fill="#e8a818" stroke="#38d0f0" stroke-width="1.400"/><path d="M8 6.500a7 7 0 1 0 8 0" fill="none" stroke="#fff" stroke-width="2.200"/><path d="M12.500 3.500l5 .5-1.500 5z" fill="#fff"/></svg></div>
<div class="gray" style="left:655px;top:142px;width:29px;height:18px;background:#555;overflow:hidden"></div>
<div class="t " style="left:659px;top:144.0px;font-size:14px;color:#fff;font-weight:bold;letter-spacing:-0.362px;">Dist</div>
<div class="spin" style="left:685px;top:139px;width:99px;height:24px"><div class="ar" style="width:17px"></div><div class="up" style="right:4.0px;top:4.0px"></div><div class="dn" style="right:4.0px;top:13.0px"></div></div>
<div class="t " style="left:690px;top:144.0px;font-size:13px;">0,010000</div>
<div class="gray" style="left:786px;top:142px;width:26px;height:18px;background:#555;overflow:hidden"></div>
<div class="t " style="left:790px;top:144.0px;font-size:14px;color:#fff;font-weight:bold;letter-spacing:-0.701px;">Min</div>
<div class="spin" style="left:814px;top:139px;width:59px;height:24px"><div class="ar" style="width:17px"></div><div class="up" style="right:4.0px;top:4.0px"></div><div class="dn" style="right:4.0px;top:13.0px"></div></div>
<div class="t " style="left:819px;top:144.0px;font-size:13px;">60</div>
<div class="gray" style="left:874px;top:142px;width:30px;height:18px;background:#555;overflow:hidden"></div>
<div class="t " style="left:878px;top:144.0px;font-size:14px;color:#fff;font-weight:bold;letter-spacing:-0.411px;">Max</div>
<div class="spin" style="left:905px;top:139px;width:60px;height:24px"><div class="ar" style="width:17px"></div><div class="up" style="right:4.0px;top:4.0px"></div><div class="dn" style="right:4.0px;top:13.0px"></div></div>
<div class="t " style="left:910px;top:144.0px;font-size:13px;">100</div>
<div class="a" style="left:970.0px;top:139.0px;width:24px;height:24px"><svg width="24" height="24" viewBox="0 0 24 24"><path d="M8 15.500L1.500 22.500" stroke="#000" stroke-width="3.400" stroke-linecap="butt"/><path d="M7 18l-4 4.500" stroke="#7a3a10" stroke-width="1.200"/><circle cx="13.5" cy="9.5" r="8" fill="#6adcf0" stroke="#000" stroke-width="2"/><circle cx="13.5" cy="9.5" r="5.8" fill="#d4f4fa"/><rect x="13.500" y="5" width="4.500" height="4.500" fill="#e87070"/><rect x="9" y="9.500" width="4.500" height="4.500" fill="#90d090"/><rect x="13.500" y="9.500" width="4.500" height="4.500" fill="#80a0e0"/><path d="M10 9.500h7.500M13.500 6v7.500" stroke="#fff" stroke-width="1.300"/></svg></div>
<div class="gray" style="left:999px;top:140px;width:78px;height:22px;background:#646464"></div>
<div class="a" style="left:1001.5px;top:144px;width:14px;height:14px;border-radius:7px;background:#555;border:1px solid #484848"></div><div class="a" style="left:1005px;top:147.5px;width:7px;height:7px;border-radius:3.5px;background:#ababab"></div>
<div class="t " style="left:1023px;top:144.0px;font-size:14px;color:#fff;letter-spacing:-0.685px;">Preview</div>
<div class="a" style="left:1081.0px;top:139.0px;width:24px;height:24px"><svg width="24" height="24" viewBox="0 0 24 24"><rect x="0.800" y="0.800" width="22.400" height="22.400" rx="3" fill="#000"/><rect x="2.500" y="2.500" width="5" height="10" fill="#0a5a9a"/><rect x="7.500" y="2.500" width="4.500" height="10" fill="#18b0d0"/><rect x="12" y="2.500" width="9.500" height="4" fill="#e01010"/><rect x="12" y="6.500" width="9.500" height="4" fill="#b00808"/><rect x="2.500" y="12.500" width="9.500" height="3" fill="#5a8a10"/><rect x="2.500" y="15.500" width="9.500" height="3" fill="#88b820"/><rect x="2.500" y="18.500" width="9.500" height="3" fill="#3a6a08"/><rect x="12" y="12.500" width="3.500" height="9" fill="#1040b0"/><rect x="15.500" y="12.500" width="3" height="9" fill="#3070e0"/><rect x="18.500" y="12.500" width="3" height="9" fill="#0a2a80"/><path d="M5 12h14M12 5v14" stroke="#fff" stroke-width="2.600"/></svg></div>
<div class="a" style="left:1114.0px;top:139.0px;width:24px;height:24px"><svg width="24" height="24" viewBox="0 0 24 24"><rect x="0.800" y="0.800" width="22.400" height="22.400" rx="3" fill="#000"/><rect x="2.500" y="2.500" width="5" height="10" fill="#0a5a9a"/><rect x="7.500" y="2.500" width="4.500" height="10" fill="#18b0d0"/><rect x="12" y="2.500" width="9.500" height="4" fill="#e01010"/><rect x="12" y="6.500" width="9.500" height="4" fill="#b00808"/><rect x="2.500" y="12.500" width="9.500" height="3" fill="#5a8a10"/><rect x="2.500" y="15.500" width="9.500" height="3" fill="#88b820"/><rect x="2.500" y="18.500" width="9.500" height="3" fill="#3a6a08"/><rect x="12" y="12.500" width="3.500" height="9" fill="#1040b0"/><rect x="15.500" y="12.500" width="3" height="9" fill="#3070e0"/><rect x="18.500" y="12.500" width="3" height="9" fill="#0a2a80"/><path d="M8 7a7 7 0 1 0 8 0" fill="none" stroke="#fff" stroke-width="2.200"/><path d="M12.500 4l5 .5-1.500 5z" fill="#fff"/></svg></div>
<div class="gray" style="left:1144px;top:142px;width:11px;height:18px;background:#555;overflow:hidden"></div>
<div class="t " style="left:1146px;top:144.0px;font-size:14px;color:#fff;font-weight:bold;">T</div>
<div class="spin" style="left:1157px;top:139px;width:48px;height:24px"><div class="ar" style="width:17px"></div><div class="up" style="right:4.0px;top:4.0px"></div><div class="dn" style="right:4.0px;top:13.0px"></div></div>
<div class="t " style="left:1162px;top:144.0px;font-size:13px;">0</div>
<div class="gray" style="left:1207px;top:142px;width:13px;height:18px;background:#555;overflow:hidden"></div>
<div class="t " style="left:1209px;top:144.0px;font-size:14px;color:#fff;font-weight:bold;">S</div>
<div class="spin" style="left:1220px;top:139px;width:60px;height:24px"><div class="ar" style="width:17px"></div><div class="up" style="right:4.0px;top:4.0px"></div><div class="dn" style="right:4.0px;top:13.0px"></div></div>
<div class="t " style="left:1225px;top:144.0px;font-size:13px;">1000</div>
<div class="a" style="left:1284.0px;top:139.0px;width:24px;height:24px"><svg width="24" height="24" viewBox="0 0 24 24"><path d="M1 6l14-5 8 3v14l-12 5-10-4z" fill="#d8e4ec"/><path d="M1 6l8-3v8l-8 3z" fill="#e0d890"/><path d="M9 3l6-2v9l-6 1z" fill="#f0c0b0"/><path d="M15 1l8 3v9l-8-3z" fill="#e89090"/><path d="M1 14l8-3 6 9-4 3-10-4z" fill="#b0d8b0"/><path d="M9 11l6-1 8 3v5l-8 2z" fill="#90b0e0"/><text x="0.500" y="16.500" style="font-family:'Liberation Sans',sans-serif;font-weight:bold;font-size:10.500px" fill="#000" textLength="21" lengthAdjust="spacingAndGlyphs">KML</text></svg></div>
<div class="t " style="left:4px;top:173.5px;font-size:15px;">Браузер (2)</div>
<svg class="a" style="left:489px;top:175px" width="26" height="12" viewBox="0 0 26 12"><rect x="0.5" y="0.5" width="10" height="10" rx="2" fill="#e8e8e8" stroke="#555"/><rect x="2.5" y="4.5" width="4.5" height="4" fill="none" stroke="#555" stroke-width="0.9"/><path d="M4.5 4.5v-2h4v4h-1.5" fill="none" stroke="#555" stroke-width="0.9"/><rect x="14.5" y="0.5" width="10" height="10" rx="2" fill="#e8e8e8" stroke="#555"/><path d="M17 3l5 5M22 3l-5 5" stroke="#333" stroke-width="1.7"/></svg>
<div class="a" style="left:7.0px;top:197.0px;width:16px;height:16px"><svg width="16" height="16" viewBox="0 0 16 16"><rect x="1.500" y="1.500" width="11" height="11" fill="#fdfdfd" stroke="#6a6a6a" stroke-width="1"/><rect x="9.500" y="10" width="5.500" height="5.500" rx="1.500" fill="#5a9a5a"/><rect x="11" y="11.500" width="2.500" height="2.500" rx="0.600" fill="#b8e0b8"/></svg></div>
<div class="a" style="left:33.0px;top:197.0px;width:16px;height:16px"><svg width="16" height="16" viewBox="0 0 16 16"><path d="M1.500 7.500a6.500 6.500 0 0 1 11-4L14.500 1.500v6h-6l2.200-2.200A3.800 3.800 0 0 0 4.500 7.500z" fill="#4d8fd6" stroke="#2f6bb0" stroke-width="0.500"/><path d="M14.500 8.500a6.500 6.500 0 0 1-11 4L1.500 14.500v-6h6l-2.200 2.200a3.800 3.800 0 0 0 6.200-2.200z" fill="#4d8fd6" stroke="#2f6bb0" stroke-width="0.500"/></svg></div>
<div class="a" style="left:58.0px;top:197.0px;width:16px;height:16px"><svg width="16" height="16" viewBox="0 0 16 16"><path d="M1 1h14v2l-5.200 5.500v6.500l-3.600-1.500V8.500L1 3z" fill="#5b8cc6" stroke="#3f6ea8" stroke-width="0.600"/><rect x="1" y="1" width="14" height="2" fill="#f6e04a" stroke="#c9a21c" stroke-width="0.500"/></svg></div>
<div class="a" style="left:83.0px;top:197.0px;width:16px;height:16px"><svg width="16" height="16" viewBox="0 0 16 16"><path d="M2 2v12M2 2h3M2 8h3M2 14h3" stroke="#bcbcbc" stroke-width="0.800" fill="none"/><rect x="4.500" y="6" width="3" height="3" fill="#fff" stroke="#f08000" stroke-width="1"/><rect x="4.500" y="11.500" width="3" height="3" fill="#fff" stroke="#f08000" stroke-width="1"/><path d="M11 .800l4.500 5h-2.500v8.500h-4V5.800H6.500z" fill="#4a7ab5" stroke="#2f4f78" stroke-width="0.600"/></svg></div>
<div class="a" style="left:108.0px;top:197.0px;width:16px;height:16px"><svg width="16" height="16" viewBox="0 0 16 16"><circle cx="8" cy="8" r="7" fill="#5b8cc6" stroke="#4a78b0" stroke-width="0.600"/><text x="5.800" y="12.300" style="font-family:'Liberation Serif',serif;font-style:italic;font-weight:bold;font-size:12px" fill="#fff">i</text></svg></div>
<div class="box" style="left:0;top:221px;width:516px;height:85px;overflow:hidden">
<div class="a" style="left:21px;top:2px;width:18px;height:18px"><svg width="18" height="18" viewBox="0 0 20 20"><path d="M10 .800l2.700 6.300 6.800.600-5.200 4.500 1.600 6.700-5.900-3.600-5.900 3.600 1.600-6.700L.500 7.700l6.800-.600z" fill="#fdf05a" stroke="#d4b400" stroke-width="1"/></svg></div>
<div class="t" style="left:46px;top:4px">Избранное</div>
<div class="rt" style="left:6.5px;top:28.3px"></div>
<div class="a" style="left:21px;top:24px;width:18px;height:18px"><svg width="18" height="18" viewBox="0 0 18 18"><path d="M2.500 1.500c-1.300 0-1.300 1.500 0 1.500h.800v11.500c0 2 2.500 2 2.500.500H16V1.500z" fill="#e6e6e6" stroke="#9a9a9a" stroke-width="0.800"/><path d="M3.300 3v11.500c0 1 1.500 1.200 2.500.500" fill="none" stroke="#9a9a9a" stroke-width="0.700"/><path d="M10 1.500h3v5.500l-1.500 1.500L10 7z" fill="#5b8cc6" stroke="#3f6ea8" stroke-width="0.600"/></svg></div>
<div class="t" style="left:46px;top:26px">Пространственные закладки</div>
<div class="rt" style="left:6.5px;top:50.3px"></div>
<div class="a" style="left:21px;top:46px;width:18px;height:18px"><svg width="18" height="18" viewBox="0 0 18 18"><path d="M1.500 3.500c0-1 .500-1.500 1.500-1.500h4l1.500 2h7c1 0 1.500.500 1.500 1.500v9.500c0 1-.500 1.500-1.500 1.500h-12c-1 0-1.500-.500-1.500-1.500z" fill="#f0f0f0" stroke="#8a8a8a" stroke-width="0.900"/><path d="M4.500 10.500l4.500-4 4.500 4M6 9.500v4.500h6V9.500" fill="#fff" stroke="#222" stroke-width="1.100"/></svg></div>
<div class="t" style="left:46px;top:48px">Домашний каталог</div>
<div class="rt" style="left:6.5px;top:72.3px"></div>
<div class="a" style="left:21px;top:68px;width:18px;height:18px"><svg width="18" height="18" viewBox="0 0 18 18"><path d="M1.500 3.500c0-1 .500-1.500 1.500-1.500h4l1.500 2h7c1 0 1.500.500 1.500 1.500v12.500h-15z" fill="#f0f0f0" stroke="#9a9a9a" stroke-width="0.900"/></svg></div>
<div class="t" style="left:46px;top:70px">C:\ (Windows)</div>
</div>
<div class="sb" style="left:498px;top:222px;width:17px;height:83px;background:#f6f6f6;border-left:1px solid #d4d4d4"></div>
<div class="up" style="left:502.5px;top:227px;background:#505050"></div>
<div class="dn" style="left:502.5px;top:294px;background:#505050"></div>
<div class="a" style="left:499px;top:272px;width:16px;height:17px;background:#cdcdcd"></div>
<div class="a" style="left:250px;top:309px;width:18px;height:1px;background-image:linear-gradient(90deg,#999 1px,transparent 1px);background-size:3px 1px"></div>
<div class="t " style="left:4px;top:315.5px;font-size:15px;">Слои</div>
<svg class="a" style="left:489px;top:317px" width="26" height="12" viewBox="0 0 26 12"><rect x="0.5" y="0.5" width="10" height="10" rx="2" fill="#e8e8e8" stroke="#555"/><rect x="2.5" y="4.5" width="4.5" height="4" fill="none" stroke="#555" stroke-width="0.9"/><path d="M4.5 4.5v-2h4v4h-1.5" fill="none" stroke="#555" stroke-width="0.9"/><rect x="14.5" y="0.5" width="10" height="10" rx="2" fill="#e8e8e8" stroke="#555"/><path d="M17 3l5 5M22 3l-5 5" stroke="#333" stroke-width="1.7"/></svg>
<div class="a" style="left:7.0px;top:339.0px;width:16px;height:16px"><svg width="16" height="16" viewBox="0 0 16 16"><path d="M1 8.500l5-5 5 5-5 4z" fill="#e83030"/><path d="M1.500 7l4.500-4 3 2-5 4.500z" fill="#f4d030"/><path d="M3 9.500l4-3.500 3 2.500-4 3.500z" fill="#4a80d0"/><path d="M6.500 8.500l4.500-3 2 2.500-3.500 4z" fill="#d8a060" stroke="#a87030" stroke-width="0.500"/><path d="M11.500 5.500l3.500-4" stroke="#c88020" stroke-width="1.800" stroke-linecap="round"/></svg></div>
<div class="a" style="left:33.0px;top:339.0px;width:16px;height:16px"><svg width="16" height="16" viewBox="0 0 16 16"><path d="M1.500 6v8.500h8" fill="none" stroke="#8a8a8a" stroke-width="0.900"/><rect x="3.500" y="4" width="9" height="9" fill="#f4f4f4" stroke="#6a6a6a" stroke-width="0.900"/><path d="M6 9V3c0-2 3-2 3 0v6.500c0 1-1.500 1-1.500 0V4" fill="none" stroke="#3f6ea8" stroke-width="0.900"/><rect x="9.500" y="10" width="5.500" height="5.500" rx="1.500" fill="#5a9a5a"/><rect x="11" y="11.500" width="2.500" height="2.500" rx="0.600" fill="#c8e8c8"/></svg></div>
<div class="a" style="left:58.0px;top:339.0px;width:16px;height:16px"><svg width="16" height="16" viewBox="0 0 16 16"><path d="M.500 7c3-4.500 10-4.500 13.500 0-3.500 4-10.500 4-13.500 0z" fill="#f4f4f4" stroke="#9a9a9a" stroke-width="0.800"/><path d="M1 5c3-3.500 9-3.500 12.500-.5" fill="none" stroke="#b0b0b0" stroke-width="0.700"/><circle cx="7" cy="7" r="2.800" fill="#5b8cc6"/><circle cx="7" cy="7" r="1.200" fill="#1a2a40"/><path d="M9 11h7l-3.500 4z" fill="#3a3a3a"/></svg></div>
<div class="a" style="left:83.0px;top:339.0px;width:16px;height:16px"><svg width="16" height="16" viewBox="0 0 16 16"><path d="M1 1h13v2l-4.700 5v6.500l-3.600-1.500V8L1 3z" fill="#5b8cc6" stroke="#3f6ea8" stroke-width="0.600"/><rect x="1" y="1" width="13" height="2" fill="#f6e04a" stroke="#c9a21c" stroke-width="0.500"/><path d="M9 11h7l-3.500 4z" fill="#3a3a3a"/></svg></div>
<div class="a" style="left:108.0px;top:339.0px;width:16px;height:16px"><svg width="16" height="16" viewBox="0 0 16 16"><text x="1" y="10" style="font-family:'Liberation Sans',sans-serif;font-size:13px" fill="#c4c4c4">ε</text><path d="M8 9h7v1.500l-2 2v3h-2.500v-3L8 10.500z" fill="#e4e4e4" stroke="#d4d4d4" stroke-width="0.500"/></svg></div>
<div class="a" style="left:149.0px;top:339.0px;width:16px;height:16px"><svg width="16" height="16" viewBox="0 0 16 16"><path d="M1.500 2v12M1.500 2h3M1.500 8h3M1.500 14h3" stroke="#bcbcbc" stroke-width="0.800" fill="none"/><rect x="4" y="4" width="3" height="3" fill="#fff" stroke="#f08000" stroke-width="1"/><rect x="4" y="10.500" width="3" height="3" fill="#fff" stroke="#f08000" stroke-width="1"/><path d="M11 15.200l4.500-5h-2.500V1.700h-4v8.500H6.500z" fill="#4a7ab5" stroke="#2f4f78" stroke-width="0.600"/></svg></div>
<div class="a" style="left:174.0px;top:339.0px;width:16px;height:16px"><svg width="16" height="16" viewBox="0 0 16 16"><path d="M2 2v12M2 2h3M2 8h3M2 14h3" stroke="#bcbcbc" stroke-width="0.800" fill="none"/><rect x="4.500" y="6" width="3" height="3" fill="#fff" stroke="#f08000" stroke-width="1"/><rect x="4.500" y="11.500" width="3" height="3" fill="#fff" stroke="#f08000" stroke-width="1"/><path d="M11 .800l4.500 5h-2.500v8.500h-4V5.800H6.500z" fill="#4a7ab5" stroke="#2f4f78" stroke-width="0.600"/></svg></div>
<div class="a" style="left:198.0px;top:339.0px;width:16px;height:16px"><svg width="16" height="16" viewBox="0 0 16 16"><rect x="1.500" y="1.500" width="11" height="11" fill="#f2f2f2" stroke="#6a6a6a" stroke-width="1"/><rect x="9" y="10.500" width="6.500" height="4.500" rx="1.500" fill="#e0242c"/><path d="M10.500 12.750h3.500" stroke="#fff" stroke-width="1.200"/></svg></div>
<div class="dd dis" style="left:130.5px;top:345px"></div>
<div class="box" style="left:0;top:364px;width:516px;height:129px;overflow:hidden">
<div class="t " style="left:54px;top:-1.0px;font-size:15px;">Канал 1</div>
<div class="a" style="left:53px;top:20px;width:17px;height:17px;background:#000"></div>
<div class="t" style="left:76px;top:20px">0 - Unclassified</div>
<div class="a" style="left:53px;top:42px;width:17px;height:17px;background:#0000ff"></div>
<div class="t" style="left:76px;top:42px">1 - water</div>
<div class="a" style="left:53px;top:64px;width:17px;height:17px;background:#aa5500"></div>
<div class="t" style="left:76px;top:64px">2 - buildings</div>
<div class="a" style="left:53px;top:86px;width:17px;height:17px;background:#00aa00"></div>
<div class="t" style="left:76px;top:86px">3 - vegetation</div>
<div class="a" style="left:53px;top:109px;width:17px;height:3px;background:#111"></div>
<div class="a" style="left:29px;top:110px;width:16px;height:3px;border:1px solid #ccc;border-bottom:0"></div>
</div>
<div class="sb" style="left:498px;top:365px;width:17px;height:111px;background:#f6f6f6;border-left:1px solid #d4d4d4"></div>
<div class="up" style="left:502.5px;top:370px;background:#505050"></div>
<div class="dn" style="left:502.5px;top:465px;background:#505050"></div>
<div class="a" style="left:499px;top:416px;width:16px;height:40px;background:#cdcdcd"></div>
<div class="a" style="left:499px;top:380px;width:16px;height:2px;background:#cdcdcd"></div>
<div class="sb" style="left:1px;top:476px;width:496px;height:16px;border-top:1px solid #e0e0e0"></div>
<div class="a" style="left:17px;top:477px;width:452px;height:15px;background:#fff;border-left:1px solid #ddd;border-right:1px solid #ddd"></div>
<div class="a" style="left:470px;top:477px;width:10px;height:15px;background:#cdcdcd"></div>
<div class="a" style="left:6px;top:479.5px;width:5.5px;height:9px;background:#505050;clip-path:polygon(100% 0,100% 100%,0 50%)"></div>
<div class="a" style="left:486px;top:479.5px;width:5.5px;height:9px;background:#505050;clip-path:polygon(0 0,100% 50%,0 100%)"></div>
<div class="a" style="left:250px;top:497px;width:18px;height:1px;background-image:linear-gradient(90deg,#999 1px,transparent 1px);background-size:3px 1px"></div>
<div class="t " style="left:4px;top:503.5px;font-size:15px;letter-spacing:-0.739px;">SCP Dock</div>
<svg class="a" style="left:489px;top:505px" width="26" height="12" viewBox="0 0 26 12"><rect x="0.5" y="0.5" width="10" height="10" rx="2" fill="#e8e8e8" stroke="#555"/><rect x="2.5" y="4.5" width="4.5" height="4" fill="none" stroke="#555" stroke-width="0.9"/><path d="M4.5 4.5v-2h4v4h-1.5" fill="none" stroke="#555" stroke-width="0.9"/><rect x="14.5" y="0.5" width="10" height="10" rx="2" fill="#e8e8e8" stroke="#555"/><path d="M17 3l5 5M22 3l-5 5" stroke="#333" stroke-width="1.7"/></svg>
<div class="a" style="left:12px;top:531px;width:27px;height:447px"></div>
<div class="a" style="left:38px;top:531px;width:1px;height:73px;background:#c8c8c8"></div>
<div class="a" style="left:38px;top:712px;width:1px;height:210px;background:#c8c8c8"></div>
<div class="a" style="left:12px;top:600px;width:27px;height:113px;background:#f6f6f6;border-top:1px solid #c8c8c8;border-bottom:1px solid #c8c8c8"></div>
<div class="t" style="left:26.5px;top:556px;transform:translate(-50%,-50%) rotate(-90deg);font-size:13px;letter-spacing:-0.294px">Home</div>
<div class="t" style="left:26.5px;top:646.5px;transform:translate(-50%,-50%) rotate(-90deg);font-size:13px;letter-spacing:0.123px">Training input</div>
<div class="t" style="left:26.5px;top:754.5px;transform:translate(-50%,-50%) rotate(-90deg);font-size:13px;letter-spacing:-0.331px">ROI options</div>
<div class="a" style="left:18.0px;top:581.0px;width:16px;height:16px"><svg width="16" height="16" viewBox="0 0 16 16"><path d="M1 3l1.500-2h11L15 3z" fill="#3cc83c"/><path d="M0 3h16v7l-4 5H0z" fill="#f0a838"/><path d="M1.500 4.500h13v5l-3 4h-10z" fill="none" stroke="#3ce0e8" stroke-width="1" stroke-dasharray="2 1.200"/><path d="M4 12V8.500l3-2.500 3 2.500V12z" fill="#fff"/></svg></div>
<div class="a" style="left:18.0px;top:695.0px;width:16px;height:16px"><svg width="16" height="16" viewBox="0 0 16 16"><rect x=".800" y=".800" width="14.400" height="14.400" rx="2" fill="#e8a818" stroke="#38d0f0" stroke-width="1.200"/></svg></div>
<div class="a" style="left:18.0px;top:800.0px;width:16px;height:16px"><svg width="16" height="16" viewBox="0 0 16 16"><rect x=".800" y=".800" width="14.400" height="14.400" rx="2" fill="#e8a818" stroke="#38d0f0" stroke-width="1.200"/><path d="M4 12.500l8-9M4.500 3.500l7.500 9" stroke="#222" stroke-width="2"/><path d="M3 5.500c1-2 3-3 5-3" fill="none" stroke="#222" stroke-width="1.800"/></svg></div>
<div class="a" style="left:13.0px;top:820.0px;width:24px;height:24px"><svg width="24" height="24" viewBox="0 0 24 24"><path d="M3 7l12-4.500 7 2-12 5z" fill="#c8c8c8" stroke="#888" stroke-width="0.600"/><path d="M2 11l12-3.500 8 2-12 5z" fill="#4a6a9a"/><path d="M2 15l12-3.500 8 2-12 5z" fill="#2a4a80"/><path d="M2 19l12-3.500 8 2-12 4.500z" fill="#1a3a70"/><path d="M2 13l10 3.500 10-4.500M2 17l10 3.500 10-4.500" fill="none" stroke="#8ab0e0" stroke-width="0.800"/></svg></div>
<div class="a" style="left:13.0px;top:854.0px;width:24px;height:24px"><svg width="24" height="24" viewBox="0 0 24 24"><path d="M8.500 2h7v9h4.500l-8 9.500-8-9.500h4.500z" fill="#506870"/><ellipse cx="17.500" cy="19.500" rx="4.500" ry="3.200" fill="#384850" stroke="#222" stroke-width="0.800"/><path d="M14 19.500h7M17.500 16.500v6" stroke="#6a8088" stroke-width="0.700"/></svg></div>
<div class="a" style="left:13.0px;top:887.0px;width:24px;height:24px"><svg width="24" height="24" viewBox="0 0 24 24"><rect x="2" y="2" width="20" height="6" fill="#b8c8d0"/><rect x="3" y="3" width="5" height="4" fill="#506870"/><rect x="9" y="3" width="5" height="4" fill="#384850"/><rect x="15" y="3" width="6" height="4" fill="#708890"/><rect x="2" y="10" width="20" height="12" fill="#fafafa"/><path d="M3.500 10.500v10.500h18" fill="none" stroke="#333" stroke-width="1"/><path d="M4.500 19c1.500-1 2-6 3.500-6s2 3.500 4 4 3 .500 5 1.500l4 1.500" fill="none" stroke="#506870" stroke-width="1.100"/></svg></div>
<div class="a" style="left:13.0px;top:916.0px;width:24px;height:24px"><svg width="24" height="24" viewBox="0 0 24 24"><path d="M2 1.500h8c-3.500 2.500-5 6-5 10.500s1.500 8 5 10.500H2z" fill="#506870"/><path d="M9 12h9M14.500 7.500l5 4.500-5 4.500" fill="none" stroke="#384850" stroke-width="2.600"/></svg></div>
<div class="a" style="left:14px;top:817px;width:24px;height:1px;background:#8a8a8a"></div>
<div class="a" style="left:14px;top:849px;width:24px;height:1px;background:#8a8a8a"></div>
<div class="a" style="left:14px;top:882px;width:24px;height:1px;background:#8a8a8a"></div>
<div class="a" style="left:14px;top:914px;width:24px;height:1px;background:#8a8a8a"></div>
<div class="btn" style="left:11px;top:940px;width:29px;height:19px;border-color:#d0d0d0;border-radius:2px"></div><div class="up" style="left:21px;top:947px;background:#aaa"></div>
<div class="btn" style="left:11px;top:958px;width:29px;height:19px;border-color:#d0d0d0;border-radius:2px"></div><div class="dn" style="left:21px;top:965px"></div>
<div class="btn" style="left:51px;top:542px;width:27px;height:27px"></div>
<div class="a" style="left:53.5px;top:544.5px;width:22px;height:22px"><svg width="22" height="22" viewBox="0 0 22 22"><path d="M1 5h5v13h12v3H1z" fill="#d8d800" stroke="#6a6a00" stroke-width="0.600"/><path d="M14 18v2.500H4" stroke="#7a7a00" stroke-width="0" fill="none"/><rect x="6" y="1.500" width="14" height="16" fill="#3cc878" stroke="#1a7a3a" stroke-width="0.800"/></svg></div>
<div class="btn" style="left:85px;top:542px;width:27px;height:27px"></div>
<div class="a" style="left:87.5px;top:544.5px;width:22px;height:22px"><svg width="22" height="22" viewBox="0 0 22 22"><rect x="3.500" y="2.500" width="15" height="17.500" fill="#f8f8f8" stroke="#222" stroke-width="1.300"/><circle cx="16.500" cy="6.500" r="4" fill="#f8f020" stroke="#c8b800" stroke-width="0.800"/></svg></div>
<div class="fld" style="left:119px;top:542px;width:343px;height:26px;background:#f0f0f0;border-color:#b8b8b8;border-radius:3px"></div>
<div class="t " style="left:120px;top:548.5px;font-size:13px;color:#787878;letter-spacing:-0.066px;">top/Пространственный анализ ИТМО/landsat 8/train.scpx</div>
<div class="btn" style="left:468px;top:542px;width:27px;height:27px"></div>
<div class="a" style="left:470.5px;top:544.5px;width:22px;height:22px"><svg width="22" height="22" viewBox="0 0 22 22"><path d="M2.500 1.500h17v11" fill="none" stroke="#222" stroke-width="1.500"/><path d="M2.500 1.500v17h10" fill="none" stroke="#222" stroke-width="1.500"/><rect x="3.500" y="2.500" width="15" height="15" fill="#f4f4f4"/><rect x="10" y="10" width="11.500" height="11.500" fill="#f0c8c8"/><path d="M12.500 12.500l6.500 6.500M19 12.500l-6.500 6.500" stroke="#e01010" stroke-width="1.600"/></svg></div>
<div class="gray" style="left:51px;top:576px;width:443px;height:18px;background:#5a5a5a"></div>
<div class="t " style="left:59px;top:577.5px;font-size:14px;color:#fff;font-weight:bold;letter-spacing:-0.027px;">ROI &amp; Signature list (band set 1)</div>
<div class="fld" style="left:51px;top:601px;width:443px;height:27px;border-radius:3px"></div>
<div class="t " style="left:54px;top:607.5px;font-size:13px;color:#8a8a8a">Filter</div>
<div class="btn" style="left:51px;top:635px;width:27px;height:26.5px"></div>
<div class="a" style="left:53.5px;top:637.2px;width:22px;height:22px"><svg width="22" height="22" viewBox="0 0 22 22"><path d="M1.500 1v19.500h14" fill="none" stroke="#222" stroke-width="1" stroke-dasharray="1.500 1"/><path d="M2 12c2-1 3-6 5-7s4-1 5 1 2 4 4 4" fill="none" stroke="#30a050" stroke-width="1.300"/><path d="M2 17c2-1 4-5 6-6s3-1 5-1h3" fill="none" stroke="#e03030" stroke-width="1.300"/><rect x="9.500" y="9.500" width="12" height="12" rx="2.500" fill="#506870"/><path d="M15.500 11.500v8M11.500 15.500h8" stroke="#f4f4f4" stroke-width="2.600"/></svg></div>
<div class="btn" style="left:51px;top:669px;width:27px;height:26.5px"></div>
<div class="a" style="left:53.5px;top:671.2px;width:22px;height:22px"><svg width="22" height="22" viewBox="0 0 22 22"><path d="M1.500 1v19.500h4" fill="none" stroke="#222" stroke-width="1" stroke-dasharray="1.500 1"/><path d="M2 2h18v18.500H8" fill="none" stroke="#222" stroke-width="1.600"/><rect x="9" y="4" width="10" height="14.500" fill="#b8e0b0" stroke="#88c080" stroke-width="0.600"/><path d="M12 7.500l4 3.800-4 3.800" fill="none" stroke="#108010" stroke-width="1.800"/></svg></div>
<div class="btn" style="left:51px;top:703px;width:27px;height:26.5px"></div>
<div class="a" style="left:53.5px;top:705.2px;width:22px;height:22px"><svg width="22" height="22" viewBox="0 0 22 22"><rect x="1.500" y="2.500" width="19" height="17" rx="3" fill="#506870"/><path d="M5 11h12" stroke="#e8e0f0" stroke-width="3"/></svg></div>
<div class="btn" style="left:51px;top:739px;width:27px;height:26.5px"></div>
<div class="a" style="left:53.5px;top:741.2px;width:22px;height:22px"><svg width="22" height="22" viewBox="0 0 22 22"><path d="M1.500 1v19.500h19" fill="none" stroke="#222" stroke-width="1" stroke-dasharray="1.500 1"/><path d="M2 17c4-1 6-5 8-9s5-6 10-7" fill="none" stroke="#203880" stroke-width="1.300"/><path d="M2 19.500c5-1 7-5 9-8s5-5 9-5.500" fill="none" stroke="#203880" stroke-width="1.300"/><path d="M2 18.500c5-1 7-5 9-8.500s5-5.500 9-6.500" fill="none" stroke="#88a8e0" stroke-width="1.800"/><path d="M6 19c4-1 6-3 8-5s4-2.500 6.500-2.500v3.500c-3 0-4 1-6 2.500s-4 2-7 2z" fill="#7850a0"/><path d="M6 19.500c4-.500 7-2 9-4s3-2.500 5.500-2.500" fill="none" stroke="#301860" stroke-width="1.200"/></svg></div>
<div class="btn" style="left:51px;top:773.5px;width:27px;height:26.5px"></div>
<div class="a" style="left:53.5px;top:775.8px;width:22px;height:22px"><svg width="22" height="22" viewBox="0 0 22 22"><path d="M1.500 1v19.500h19" fill="none" stroke="#222" stroke-width="1" stroke-dasharray="1.500 1"/><path d="M4 16c2-3 4-5 7-7s5-4 7-4l1 4c-2 2-5 3-7 5s-4 4-7 4z" fill="#a8b0e0" opacity="0.800"/><path d="M10 6l6-3 2 4-5 3z" fill="#7080c0"/><path d="M5 14l5-1 3 2-6 2z" fill="#c0c8e8"/><path d="M6 17.500c3-.500 5-1 9-1" stroke="#8090c8" stroke-width="0.800" fill="none"/></svg></div>
<div class="btn" style="left:51px;top:808px;width:27px;height:26.5px"></div>
<div class="a" style="left:53.5px;top:810.2px;width:22px;height:22px"><svg width="22" height="22" viewBox="0 0 22 22"><rect x="1" y="1" width="20" height="20" rx="2" fill="#b0c4cc"/><path d="M2 2v18.500h18" fill="none" stroke="#222" stroke-width="1" stroke-dasharray="1.500 1"/><path d="M2.500 20c2-2 3-7 5-7s3 4 5 5 4 1 7 2z" fill="#38a8e0"/><path d="M2.500 20c2-1 4-4 6-4s4 2 5 3z" fill="#1858b0"/><path d="M8 2h6.500v7.500h4l-7.200 8-7.300-8h4z" fill="#382848"/></svg></div>
<div class="btn" style="left:51px;top:842.5px;width:27px;height:26.5px"></div>
<div class="a" style="left:53.5px;top:844.8px;width:22px;height:22px"><svg width="22" height="22" viewBox="0 0 22 22"><rect x="1" y="1" width="20" height="20" rx="2" fill="#b0c4cc"/><path d="M2 2v18.500h18" fill="none" stroke="#222" stroke-width="1" stroke-dasharray="1.500 1"/><path d="M2.500 20c2-2 3-7 5-7s3 4 5 5 4 1 7 2z" fill="#f0a020"/><path d="M2.500 20c2-1 3-4 5-4s4 2 5 3z" fill="#f8e040"/><path d="M8 19h6.500v-8h4l-7.200-8.500-7.300 8.500h4z" fill="#c81010"/></svg></div>
<div class="box" style="left:85px;top:634px;width:410px;height:235px;border-color:#a8a8a8"></div>
<div class="a" style="left:86px;top:635px;width:408px;height:24px;background:linear-gradient(#fff,#f2f2f2);border-bottom:1px solid #c8c8c8"></div>
<div class="a" style="left:145px;top:635px;width:1px;height:24px;background:#dcdcdc"></div>
<div class="a" style="left:187px;top:635px;width:1px;height:24px;background:#dcdcdc"></div>
<div class="a" style="left:288px;top:635px;width:1px;height:24px;background:#dcdcdc"></div>
<div class="a" style="left:331px;top:635px;width:1px;height:24px;background:#dcdcdc"></div>
<div class="t " style="left:88px;top:640.5px;font-size:13px;letter-spacing:-0.686px;">MC ID</div>
<div class="t " style="left:148px;top:640.5px;font-size:13px;letter-spacing:-0.625px;">C ID</div>
<div class="t " style="left:191px;top:640.5px;font-size:13px;letter-spacing:-0.169px;">Name</div>
<div class="t " style="left:291px;top:640.5px;font-size:13px;letter-spacing:-0.045px;">Type</div>
<div class="t " style="left:334px;top:640.5px;font-size:13px;letter-spacing:-0.213px;">Color</div>
<div class="up" style="left:131.5px;top:643.5px;width:9px;height:4.5px;background:#444"></div>
<div class="a" style="left:86px;top:660px;width:408px;height:20px;background:#fff"></div>
<div class="a" style="left:332px;top:660px;width:162px;height:20px;background:#0000ff"></div>
<div class="a" style="left:88px;top:668px;width:3px;height:1px;background:#555"></div>
<div class="t " style="left:94px;top:661.7px;font-size:15px;font-weight:bold;">1</div>
<div class="t " style="left:192px;top:661.7px;font-size:15px;font-weight:bold;letter-spacing:0.263px;">water</div>
<div class="a" style="left:86px;top:680px;width:408px;height:20px;background:#efefef"></div>
<div class="a" style="left:332px;top:680px;width:162px;height:20px;background:#efefef"></div>
<div class="cb" style="left:99px;top:682px;width:16px;height:16px;border-color:#b4b4b4"><svg width="14" height="14" viewBox="0 0 13 13"><path d="M2.2 6.5 L5 10.2 L10.8 2.4" fill="none" stroke="#000" stroke-width="1.9"/></svg></div>
<div class="t " style="left:122px;top:681.7px;font-size:15px;">1</div>
<div class="t " style="left:149px;top:681.7px;font-size:15px;">1</div>
<div class="t " style="left:192px;top:681.7px;font-size:15px;letter-spacing:0.454px;">gulf</div>
<div class="t " style="left:292px;top:681.7px;font-size:15px;letter-spacing:-0.615px;">R&amp;S</div>
<div class="a" style="left:86px;top:700px;width:408px;height:20px;background:#fff"></div>
<div class="a" style="left:332px;top:700px;width:162px;height:20px;background:#e191f5"></div>
<div class="cb" style="left:99px;top:702px;width:16px;height:16px;border-color:#b4b4b4"><svg width="14" height="14" viewBox="0 0 13 13"><path d="M2.2 6.5 L5 10.2 L10.8 2.4" fill="none" stroke="#000" stroke-width="1.9"/></svg></div>
<div class="t " style="left:122px;top:701.7px;font-size:15px;">1</div>
<div class="t " style="left:149px;top:701.7px;font-size:15px;">2</div>
<div class="t " style="left:192px;top:701.7px;font-size:15px;letter-spacing:0.167px;">river</div>
<div class="t " style="left:292px;top:701.7px;font-size:15px;letter-spacing:-0.615px;">R&amp;S</div>
<div class="a" style="left:86px;top:720px;width:408px;height:20px;background:#efefef"></div>
<div class="a" style="left:332px;top:720px;width:162px;height:20px;background:#efefef"></div>
<div class="cb" style="left:99px;top:722px;width:16px;height:16px;border-color:#b4b4b4"><svg width="14" height="14" viewBox="0 0 13 13"><path d="M2.2 6.5 L5 10.2 L10.8 2.4" fill="none" stroke="#000" stroke-width="1.9"/></svg></div>
<div class="t " style="left:122px;top:721.7px;font-size:15px;">1</div>
<div class="t " style="left:149px;top:721.7px;font-size:15px;">7</div>
<div class="t " style="left:192px;top:721.7px;font-size:15px;letter-spacing:0.000px;"></div>
<div class="t " style="left:292px;top:721.7px;font-size:15px;letter-spacing:-0.615px;">R&amp;S</div>
<div class="a" style="left:86px;top:740px;width:408px;height:20px;background:#efefef"></div>
<div class="a" style="left:332px;top:740px;width:162px;height:20px;background:#efefef"></div>
<div class="a" style="left:88px;top:748px;width:3px;height:1px;background:#555"></div>
<div class="t " style="left:94px;top:741.7px;font-size:15px;font-weight:bold;">2</div>
<div class="t " style="left:192px;top:741.7px;font-size:15px;font-weight:bold;letter-spacing:-0.295px;">buildings</div>
<div class="a" style="left:86px;top:760px;width:408px;height:20px;background:#e9e7e3"></div>
<div class="a" style="left:332px;top:760px;width:162px;height:20px;background:#a441f7"></div>
<div class="cb" style="left:99px;top:762px;width:16px;height:16px;border-color:#b4b4b4"><svg width="14" height="14" viewBox="0 0 13 13"><path d="M2.2 6.5 L5 10.2 L10.8 2.4" fill="none" stroke="#000" stroke-width="1.9"/></svg></div>
<div class="t " style="left:122px;top:761.7px;font-size:15px;">2</div>
<div class="t " style="left:149px;top:761.7px;font-size:15px;">3</div>
<div class="t " style="left:192px;top:761.7px;font-size:15px;letter-spacing:0.000px;"></div>
<div class="t " style="left:292px;top:761.7px;font-size:15px;letter-spacing:-0.615px;">R&amp;S</div>
<div class="a" style="left:86px;top:780px;width:408px;height:20px;background:#efefef"></div>
<div class="a" style="left:332px;top:780px;width:162px;height:20px;background:#efefef"></div>
<div class="cb" style="left:99px;top:782px;width:16px;height:16px;border-color:#b4b4b4"><svg width="14" height="14" viewBox="0 0 13 13"><path d="M2.2 6.5 L5 10.2 L10.8 2.4" fill="none" stroke="#000" stroke-width="1.9"/></svg></div>
<div class="t " style="left:122px;top:781.7px;font-size:15px;">2</div>
<div class="t " style="left:149px;top:781.7px;font-size:15px;">4</div>
<div class="t " style="left:192px;top:781.7px;font-size:15px;letter-spacing:0.000px;"></div>
<div class="t " style="left:292px;top:781.7px;font-size:15px;letter-spacing:-0.615px;">R&amp;S</div>
<div class="a" style="left:86px;top:800px;width:408px;height:20px;background:#e9e7e3"></div>
<div class="a" style="left:332px;top:800px;width:162px;height:20px;background:#00aa00"></div>
<div class="a" style="left:88px;top:808px;width:3px;height:1px;background:#555"></div>
<div class="t " style="left:94px;top:801.7px;font-size:15px;font-weight:bold;">3</div>
<div class="t " style="left:192px;top:801.7px;font-size:15px;font-weight:bold;letter-spacing:-0.101px;">vegetation</div>
<div class="a" style="left:86px;top:820px;width:408px;height:20px;background:#efefef"></div>
<div class="a" style="left:332px;top:820px;width:162px;height:20px;background:#efefef"></div>
<div class="cb" style="left:99px;top:822px;width:16px;height:16px;border-color:#b4b4b4"><svg width="14" height="14" viewBox="0 0 13 13"><path d="M2.2 6.5 L5 10.2 L10.8 2.4" fill="none" stroke="#000" stroke-width="1.9"/></svg></div>
<div class="t " style="left:122px;top:821.7px;font-size:15px;">3</div>
<div class="t " style="left:149px;top:821.7px;font-size:15px;">5</div>
<div class="t " style="left:192px;top:821.7px;font-size:15px;letter-spacing:0.000px;"></div>
<div class="t " style="left:292px;top:821.7px;font-size:15px;letter-spacing:-0.615px;">R&amp;S</div>
<div class="a" style="left:86px;top:840px;width:408px;height:20px;background:#e9e7e3"></div>
<div class="a" style="left:332px;top:840px;width:162px;height:20px;background:#69d66f"></div>
<div class="cb" style="left:99px;top:842px;width:16px;height:16px;border-color:#b4b4b4"><svg width="14" height="14" viewBox="0 0 13 13"><path d="M2.2 6.5 L5 10.2 L10.8 2.4" fill="none" stroke="#000" stroke-width="1.9"/></svg></div>
<div class="t " style="left:122px;top:841.7px;font-size:15px;">3</div>
<div class="t " style="left:149px;top:841.7px;font-size:15px;">6</div>
<div class="t " style="left:192px;top:841.7px;font-size:15px;letter-spacing:0.000px;"></div>
<div class="t " style="left:292px;top:841.7px;font-size:15px;letter-spacing:-0.615px;">R&amp;S</div>
<div class="t " style="left:51px;top:882.5px;font-size:13px;letter-spacing:-0.686px;">MC ID</div>
<div class="spin" style="left:92px;top:877px;width:56px;height:25px"><div class="ar" style="width:17px"></div><div class="up" style="right:4.0px;top:4.5px"></div><div class="dn" style="right:4.0px;top:13.5px"></div></div>
<div class="t" style="left:92px;width:33px;text-align:right;top:882.5px;font-size:13px">1</div>
<div class="t " style="left:155px;top:882.5px;font-size:13px;letter-spacing:-0.572px;">MC Name</div>
<div class="fld" style="left:217px;top:876px;width:277px;height:26px;border-radius:3px"></div>
<div class="t " style="left:220px;top:882.5px;font-size:13px;">water</div>
<div class="t " style="left:51px;top:912.5px;font-size:13px;letter-spacing:-0.625px;">C ID</div>
<div class="spin" style="left:92px;top:907px;width:56px;height:25px"><div class="ar" style="width:17px"></div><div class="up" style="right:4.0px;top:4.5px"></div><div class="dn" style="right:4.0px;top:13.5px"></div></div>
<div class="t" style="left:92px;width:33px;text-align:right;top:912.5px;font-size:13px">8</div>
<div class="t " style="left:155px;top:912.5px;font-size:13px;letter-spacing:-0.529px;">C Name</div>
<div class="fld" style="left:217px;top:906px;width:277px;height:26px;border-radius:3px"></div>
<div class="btn" style="left:51px;top:939px;width:27px;height:27px"></div>
<div class="a" style="left:53.5px;top:941.5px;width:22px;height:22px"><svg width="22" height="22" viewBox="0 0 22 22"><rect x="1" y="1" width="20" height="20" rx="2.500" fill="#e8a818" stroke="#38d0f0" stroke-width="1.200"/><path d="M2 10l6-6.500v3.500c6-.500 11 2 11 8h-4c0-3-3-4.500-7-4v4z" fill="#0818e0"/><rect x="12.500" y="12.500" width="8" height="8" rx="1" fill="#f01010"/></svg></div>
<div class="btn" style="left:85px;top:939px;width:27px;height:27px"></div>
<div class="a" style="left:87.5px;top:941.5px;width:22px;height:22px"><svg width="22" height="22" viewBox="0 0 22 22"><rect x="1" y="1" width="20" height="20" rx="2.500" fill="#e0ded6" stroke="#e4e8ea" stroke-width="1.200"/><path d="M20 10l-6-6.500v3.500c-6-.500-11 2-11 8h4c0-3 3-4.500 7-4v4z" fill="#d0d2d8"/><rect x="12.500" y="12.500" width="8" height="8" rx="1" fill="#c8d0c8"/></svg></div>
<div class="cb" style="left:289px;top:944px;width:16px;height:16px;border-color:#555"><svg width="14" height="14" viewBox="0 0 13 13"><path d="M2.2 6.5 L5 10.2 L10.8 2.4" fill="none" stroke="#000" stroke-width="1.9"/></svg></div>
<div class="t " style="left:311px;top:945.5px;font-size:13px;letter-spacing:-0.275px;">Autosave</div>
<div class="cb" style="left:377px;top:944px;width:16px;height:16px;border-color:#555"><svg width="14" height="14" viewBox="0 0 13 13"><path d="M2.2 6.5 L5 10.2 L10.8 2.4" fill="none" stroke="#000" stroke-width="1.9"/></svg></div>
<div class="t " style="left:399px;top:945.5px;font-size:13px;letter-spacing:-0.127px;">Signature</div>
<div class="btn" style="left:467px;top:939px;width:27px;height:27px"></div>
<div class="a" style="left:469.5px;top:941.5px;width:22px;height:22px"><svg width="22" height="22" viewBox="0 0 22 22"><rect x="1" y="1" width="20" height="20" rx="1.500" fill="#d00818" stroke="#222" stroke-width="1.200"/><rect x="3.500" y="1.500" width="15" height="8" fill="#484848"/><path d="M4.500 3.500h13M4.500 5.500h13M4.500 7.500h13" stroke="#c8c8c8" stroke-width="0.900"/><rect x="12" y="13" width="8" height="6.500" fill="#e8a818"/><rect x="9" y="15.500" width="5" height="4.500" fill="#b0b8b8"/></svg></div>
<div class="fld" style="left:4px;top:992px;width:200px;height:25px;border-radius:2px;border-color:#b0b0b0"></div>
<div class="a" style="left:14.0px;top:996.5px;width:16px;height:16px"><svg width="16" height="16" viewBox="0 0 16 16"><circle cx="6.500" cy="6.500" r="5" fill="none" stroke="#7a7a7a" stroke-width="1.400"/><path d="M10.200 10.200l4.800 4.800" stroke="#7a7a7a" stroke-width="1.600" stroke-linecap="round"/></svg></div>
<div class="t " style="left:37px;top:996.5px;font-size:15px;color:#8a8a8a;letter-spacing:-0.208px;">Искать (Ctrl+K)</div>
<div class="t " style="left:212px;top:998.5px;font-size:13px;letter-spacing:-0.008px;">0 feature(s) selected on layer SCP training layer.</div>
<div class="t " style="left:893px;top:998.5px;font-size:13px;letter-spacing:-0.323px;">Координаты</div>
<div class="fld" style="left:967px;top:991px;width:110px;height:26px;border-radius:3px"></div>
<div class="t " style="left:974px;top:997.5px;font-size:13px;letter-spacing:-0.185px;">337224 6649745</div>
<div class="a" style="left:1080.0px;top:994.0px;width:20px;height:20px"><svg width="20" height="20" viewBox="0 0 20 20"><ellipse cx="9" cy="9" rx="5" ry="7.500" fill="#e8e0e0" stroke="#222" stroke-width="1.300" transform="rotate(-35 9 9)"/><path d="M5 4l5 4M7.500 2.500l4 7" stroke="#222" stroke-width="1"/><circle cx="12.500" cy="14.500" r="3.200" fill="#c8b8b8" stroke="#222" stroke-width="1.200"/><circle cx="12.500" cy="14.500" r="1" fill="#222"/><path d="M15 3l1.500-1M17 6h1.500M16.500 4.500l1-.500" stroke="#222" stroke-width="0.900"/></svg></div>
<div class="t " style="left:1114px;top:998.5px;font-size:13px;letter-spacing:-0.269px;">Масштабировать</div>
<div class="fld" style="left:1218px;top:992px;width:92px;height:25px;border-radius:3px"></div>
<div class="a" style="left:1285px;top:993px;width:24px;height:23px;background:#f2f2f2;border-radius:0 3px 3px 0"></div>
<div class="dd" style="left:1291px;top:1002px;width:10px;height:5px"></div>
<div class="t " style="left:1222px;top:997.2px;font-size:13.5px;">1:137082</div>
<div class="a" style="left:1320.0px;top:994.0px;width:20px;height:20px"><svg width="20" height="20" viewBox="0 0 20 20"><path d="M5.500 9V6.500a4.500 4.500 0 0 1 9 0V9" fill="none" stroke="#a8a8a8" stroke-width="2.200"/><rect x="3" y="9" width="14" height="9.500" rx="1.200" fill="#6e6e6e"/></svg></div>
<div class="t " style="left:1347px;top:998.5px;font-size:13px;letter-spacing:-0.161px;">Увеличение</div>
<div class="spin" style="left:1421px;top:992px;width:92px;height:25px"><div class="ar" style="width:17px"></div><div class="up" style="right:4.0px;top:4.5px"></div><div class="dn" style="right:4.0px;top:13.5px"></div></div>
<div class="t " style="left:1426px;top:997.2px;font-size:13.5px;">100%</div>
<div class="t " style="left:1523px;top:998.5px;font-size:13px;letter-spacing:-0.241px;">Поворот</div>
<div class="spin" style="left:1581px;top:992px;width:89px;height:25px"><div class="ar" style="width:17px"></div><div class="up" style="right:4.0px;top:4.5px"></div><div class="dn" style="right:4.0px;top:13.5px"></div></div>
<div class="t " style="left:1586px;top:997.2px;font-size:13.5px;">0,0 °</div>
<div class="cb" style="left:1677px;top:996px;width:15px;height:15px;border-color:#555"><svg width="13" height="13" viewBox="0 0 13 13"><path d="M2.2 6.5 L5 10.2 L10.8 2.4" fill="none" stroke="#000" stroke-width="1.9"/></svg></div>
<div class="t " style="left:1699px;top:998.5px;font-size:13px;letter-spacing:-0.393px;">Отрисовка</div>
<div class="a" style="left:1776.0px;top:995.0px;width:18px;height:18px"><svg width="18" height="18" viewBox="0 0 18 18"><ellipse cx="9" cy="9.500" rx="8" ry="6.800" fill="#f8f8f8" stroke="#7a7a7a" stroke-width="0.900"/><g fill="none" stroke="#7a7a7a" stroke-width="0.700"><ellipse cx="9" cy="9.500" rx="3.800" ry="6.800"/><path d="M9 2.700v13.600M1 9.500h16M2.200 6h13.600M2.200 13h13.600"/></g><path d="M1 2l16 0" stroke="#9a9a9a" stroke-width="0.700"/><path d="M3 17.500h12" stroke="#9a9a9a" stroke-width="0.700"/></svg></div>
<div class="t " style="left:1798px;top:998.5px;font-size:13px;letter-spacing:-0.588px;">EPSG:32636</div>
<div class="a" style="left:1892.0px;top:993.0px;width:22px;height:22px"><svg width="22" height="22" viewBox="0 0 22 22"><path d="M11 2.500c5.500 0 9.500 3.200 9.500 7.300s-4 7.300-9.500 7.300c-1 0-2-.100-2.800-.300L3.500 19.500l1.300-3.800C2.800 14.300 1.500 12.200 1.500 9.800 1.500 5.700 5.500 2.500 11 2.500z" fill="#6e6e6e"/><circle cx="6.500" cy="9.800" r="1.400" fill="#f0f0f0"/><circle cx="11" cy="9.800" r="1.400" fill="#f0f0f0"/><circle cx="15.500" cy="9.800" r="1.400" fill="#f0f0f0"/></svg></div>
<div class="a" style="left:523px;top:171px;width:843px;height:817px;background:#fafafa;border-left:1px solid #c4c4c4"></div>
<div class="a" style="left:524px;top:207px;width:841px;height:780px;overflow:hidden"><svg width="842" height="780" viewBox="524 207 842 780" style="display:block"><defs><filter id="mb" x="-5%" y="-5%" width="110%" height="110%"><feGaussianBlur stdDeviation="13"/></filter><filter id="mb2" x="-5%" y="-5%" width="110%" height="110%"><feGaussianBlur stdDeviation="0.9"/></filter><filter id="cls" x="0" y="0" width="100%" height="100%" color-interpolation-filters="sRGB"><feTurbulence type="fractalNoise" baseFrequency="0.035" numOctaves="3" seed="11" result="n"/><feColorMatrix in="n" type="matrix" values="1 0 0 0 0 1 0 0 0 0 1 0 0 0 0 0 0 0 0 1" result="ng"/><feTurbulence type="fractalNoise" baseFrequency="0.15" numOctaves="3" seed="5" result="m"/><feColorMatrix in="m" type="matrix" values="1 0 0 0 0 1 0 0 0 0 1 0 0 0 0 0 0 0 0 1" result="mg"/><feComposite in="SourceGraphic" in2="ng" operator="arithmetic" k1="0" k2="1" k3="0.800" k4="-0.650" result="s1"/><feComposite in="s1" in2="mg" operator="arithmetic" k1="0" k2="2" k3="1.7" k4="-0.850" result="s"/><feComponentTransfer in="s"><feFuncR type="discrete" tableValues="0 0.6667"/><feFuncG type="discrete" tableValues="0.6667 0.3333"/><feFuncB type="discrete" tableValues="0 0"/></feComponentTransfer></filter></defs><g filter="url(#cls)"><rect x="464" y="147" width="962" height="900" fill="#808080"/><g filter="url(#mb)"><rect x="484" y="167" width="41" height="41" fill="#131313"/><rect x="524" y="167" width="41" height="41" fill="#131313"/><rect x="564" y="167" width="41" height="41" fill="#131313"/><rect x="604" y="167" width="41" height="41" fill="#656565"/><rect x="644" y="167" width="41" height="41" fill="#656565"/><rect x="684" y="167" width="41" height="41" fill="#131313"/><rect x="724" y="167" width="41" height="41" fill="#131313"/><rect x="764" y="167" width="41" height="41" fill="#8b8b8b"/><rect x="804" y="167" width="41" height="41" fill="#b4b4b4"/><rect x="844" y="167" width="41" height="41" fill="#b4b4b4"/><rect x="884" y="167" width="41" height="41" fill="#a3a3a3"/><rect x="924" y="167" width="41" height="41" fill="#727272"/><rect x="964" y="167" width="41" height="41" fill="#7e7e7e"/><rect x="1004" y="167" width="41" height="41" fill="#656565"/><rect x="1044" y="167" width="41" height="41" fill="#656565"/><rect x="1084" y="167" width="41" height="41" fill="#656565"/><rect x="1124" y="167" width="41" height="41" fill="#656565"/><rect x="1164" y="167" width="41" height="41" fill="#656565"/><rect x="1204" y="167" width="41" height="41" fill="#727272"/><rect x="1244" y="167" width="41" height="41" fill="#727272"/><rect x="1284" y="167" width="41" height="41" fill="#727272"/><rect x="1324" y="167" width="41" height="41" fill="#131313"/><rect x="1364" y="167" width="41" height="41" fill="#131313"/><rect x="484" y="207" width="41" height="41" fill="#131313"/><rect x="524" y="207" width="41" height="41" fill="#131313"/><rect x="564" y="207" width="41" height="41" fill="#131313"/><rect x="604" y="207" width="41" height="41" fill="#656565"/><rect x="644" y="207" width="41" height="41" fill="#656565"/><rect x="684" y="207" width="41" height="41" fill="#131313"/><rect x="724" y="207" width="41" height="41" fill="#131313"/><rect x="764" y="207" width="41" height="41" fill="#8b8b8b"/><rect x="804" y="207" width="41" height="41" fill="#b4b4b4"/><rect x="844" y="207" width="41" height="41" fill="#b4b4b4"/><rect x="884" y="207" width="41" height="41" fill="#a3a3a3"/><rect x="924" y="207" width="41" height="41" fill="#727272"/><rect x="964" y="207" width="41" height="41" fill="#7e7e7e"/><rect x="1004" y="207" width="41" height="41" fill="#656565"/><rect x="1044" y="207" width="41" height="41" fill="#656565"/><rect x="1084" y="207" width="41" height="41" fill="#656565"/><rect x="1124" y="207" width="41" height="41" fill="#656565"/><rect x="1164" y="207" width="41" height="41" fill="#656565"/><rect x="1204" y="207" width="41" height="41" fill="#727272"/><rect x="1244" y="207" width="41" height="41" fill="#727272"/><rect x="1284" y="207" width="41" height="41" fill="#727272"/><rect x="1324" y="207" width="41" height="41" fill="#131313"/><rect x="1364" y="207" width="41" height="41" fill="#131313"/><rect x="484" y="247" width="41" height="41" fill="#656565"/><rect x="524" y="247" width="41" height="41" fill="#656565"/><rect x="564" y="247" width="41" height="41" fill="#595959"/><rect x="604" y="247" width="41" height="41" fill="#595959"/><rect x="644" y="247" width="41" height="41" fill="#131313"/><rect x="684" y="247" width="41" height="41" fill="#131313"/><rect x="724" y="247" width="41" height="41" fill="#131313"/><rect x="764" y="247" width="41" height="41" fill="#131313"/><rect x="804" y="247" width="41" height="41" fill="#7e7e7e"/><rect x="844" y="247" width="41" height="41" fill="#a3a3a3"/><rect x="884" y="247" width="41" height="41" fill="#8b8b8b"/><rect x="924" y="247" width="41" height="41" fill="#727272"/><rect x="964" y="247" width="41" height="41" fill="#7e7e7e"/><rect x="1004" y="247" width="41" height="41" fill="#656565"/><rect x="1044" y="247" width="41" height="41" fill="#444444"/><rect x="1084" y="247" width="41" height="41" fill="#727272"/><rect x="1124" y="247" width="41" height="41" fill="#656565"/><rect x="1164" y="247" width="41" height="41" fill="#656565"/><rect x="1204" y="247" width="41" height="41" fill="#727272"/><rect x="1244" y="247" width="41" height="41" fill="#656565"/><rect x="1284" y="247" width="41" height="41" fill="#131313"/><rect x="1324" y="247" width="41" height="41" fill="#131313"/><rect x="1364" y="247" width="41" height="41" fill="#131313"/><rect x="484" y="287" width="41" height="41" fill="#444444"/><rect x="524" y="287" width="41" height="41" fill="#444444"/><rect x="564" y="287" width="41" height="41" fill="#656565"/><rect x="604" y="287" width="41" height="41" fill="#444444"/><rect x="644" y="287" width="41" height="41" fill="#131313"/><rect x="684" y="287" width="41" height="41" fill="#444444"/><rect x="724" y="287" width="41" height="41" fill="#444444"/><rect x="764" y="287" width="41" height="41" fill="#656565"/><rect x="804" y="287" width="41" height="41" fill="#7e7e7e"/><rect x="844" y="287" width="41" height="41" fill="#7e7e7e"/><rect x="884" y="287" width="41" height="41" fill="#7e7e7e"/><rect x="924" y="287" width="41" height="41" fill="#727272"/><rect x="964" y="287" width="41" height="41" fill="#656565"/><rect x="1004" y="287" width="41" height="41" fill="#727272"/><rect x="1044" y="287" width="41" height="41" fill="#727272"/><rect x="1084" y="287" width="41" height="41" fill="#727272"/><rect x="1124" y="287" width="41" height="41" fill="#656565"/><rect x="1164" y="287" width="41" height="41" fill="#656565"/><rect x="1204" y="287" width="41" height="41" fill="#727272"/><rect x="1244" y="287" width="41" height="41" fill="#7e7e7e"/><rect x="1284" y="287" width="41" height="41" fill="#595959"/><rect x="1324" y="287" width="41" height="41" fill="#131313"/><rect x="1364" y="287" width="41" height="41" fill="#131313"/><rect x="484" y="327" width="41" height="41" fill="#444444"/><rect x="524" y="327" width="41" height="41" fill="#444444"/><rect x="564" y="327" width="41" height="41" fill="#656565"/><rect x="604" y="327" width="41" height="41" fill="#131313"/><rect x="644" y="327" width="41" height="41" fill="#444444"/><rect x="684" y="327" width="41" height="41" fill="#a3a3a3"/><rect x="724" y="327" width="41" height="41" fill="#727272"/><rect x="764" y="327" width="41" height="41" fill="#7e7e7e"/><rect x="804" y="327" width="41" height="41" fill="#7e7e7e"/><rect x="844" y="327" width="41" height="41" fill="#7e7e7e"/><rect x="884" y="327" width="41" height="41" fill="#727272"/><rect x="924" y="327" width="41" height="41" fill="#727272"/><rect x="964" y="327" width="41" height="41" fill="#595959"/><rect x="1004" y="327" width="41" height="41" fill="#7e7e7e"/><rect x="1044" y="327" width="41" height="41" fill="#7e7e7e"/><rect x="1084" y="327" width="41" height="41" fill="#727272"/><rect x="1124" y="327" width="41" height="41" fill="#727272"/><rect x="1164" y="327" width="41" height="41" fill="#656565"/><rect x="1204" y="327" width="41" height="41" fill="#727272"/><rect x="1244" y="327" width="41" height="41" fill="#7e7e7e"/><rect x="1284" y="327" width="41" height="41" fill="#595959"/><rect x="1324" y="327" width="41" height="41" fill="#131313"/><rect x="1364" y="327" width="41" height="41" fill="#131313"/><rect x="484" y="367" width="41" height="41" fill="#8b8b8b"/><rect x="524" y="367" width="41" height="41" fill="#8b8b8b"/><rect x="564" y="367" width="41" height="41" fill="#8b8b8b"/><rect x="604" y="367" width="41" height="41" fill="#7e7e7e"/><rect x="644" y="367" width="41" height="41" fill="#7e7e7e"/><rect x="684" y="367" width="41" height="41" fill="#7e7e7e"/><rect x="724" y="367" width="41" height="41" fill="#7e7e7e"/><rect x="764" y="367" width="41" height="41" fill="#7e7e7e"/><rect x="804" y="367" width="41" height="41" fill="#8b8b8b"/><rect x="844" y="367" width="41" height="41" fill="#8b8b8b"/><rect x="884" y="367" width="41" height="41" fill="#8b8b8b"/><rect x="924" y="367" width="41" height="41" fill="#7e7e7e"/><rect x="964" y="367" width="41" height="41" fill="#727272"/><rect x="1004" y="367" width="41" height="41" fill="#7e7e7e"/><rect x="1044" y="367" width="41" height="41" fill="#7e7e7e"/><rect x="1084" y="367" width="41" height="41" fill="#727272"/><rect x="1124" y="367" width="41" height="41" fill="#656565"/><rect x="1164" y="367" width="41" height="41" fill="#656565"/><rect x="1204" y="367" width="41" height="41" fill="#7e7e7e"/><rect x="1244" y="367" width="41" height="41" fill="#656565"/><rect x="1284" y="367" width="41" height="41" fill="#727272"/><rect x="1324" y="367" width="41" height="41" fill="#444444"/><rect x="1364" y="367" width="41" height="41" fill="#444444"/><rect x="484" y="407" width="41" height="41" fill="#ececec"/><rect x="524" y="407" width="41" height="41" fill="#ececec"/><rect x="564" y="407" width="41" height="41" fill="#ececec"/><rect x="604" y="407" width="41" height="41" fill="#ececec"/><rect x="644" y="407" width="41" height="41" fill="#ececec"/><rect x="684" y="407" width="41" height="41" fill="#ececec"/><rect x="724" y="407" width="41" height="41" fill="#b4b4b4"/><rect x="764" y="407" width="41" height="41" fill="#a3a3a3"/><rect x="804" y="407" width="41" height="41" fill="#7e7e7e"/><rect x="844" y="407" width="41" height="41" fill="#727272"/><rect x="884" y="407" width="41" height="41" fill="#727272"/><rect x="924" y="407" width="41" height="41" fill="#7e7e7e"/><rect x="964" y="407" width="41" height="41" fill="#a3a3a3"/><rect x="1004" y="407" width="41" height="41" fill="#8b8b8b"/><rect x="1044" y="407" width="41" height="41" fill="#7e7e7e"/><rect x="1084" y="407" width="41" height="41" fill="#727272"/><rect x="1124" y="407" width="41" height="41" fill="#727272"/><rect x="1164" y="407" width="41" height="41" fill="#727272"/><rect x="1204" y="407" width="41" height="41" fill="#8b8b8b"/><rect x="1244" y="407" width="41" height="41" fill="#727272"/><rect x="1284" y="407" width="41" height="41" fill="#727272"/><rect x="1324" y="407" width="41" height="41" fill="#444444"/><rect x="1364" y="407" width="41" height="41" fill="#444444"/><rect x="484" y="447" width="41" height="41" fill="#ececec"/><rect x="524" y="447" width="41" height="41" fill="#ececec"/><rect x="564" y="447" width="41" height="41" fill="#ececec"/><rect x="604" y="447" width="41" height="41" fill="#ececec"/><rect x="644" y="447" width="41" height="41" fill="#ececec"/><rect x="684" y="447" width="41" height="41" fill="#ececec"/><rect x="724" y="447" width="41" height="41" fill="#ececec"/><rect x="764" y="447" width="41" height="41" fill="#8b8b8b"/><rect x="804" y="447" width="41" height="41" fill="#656565"/><rect x="844" y="447" width="41" height="41" fill="#727272"/><rect x="884" y="447" width="41" height="41" fill="#7e7e7e"/><rect x="924" y="447" width="41" height="41" fill="#7e7e7e"/><rect x="964" y="447" width="41" height="41" fill="#a3a3a3"/><rect x="1004" y="447" width="41" height="41" fill="#8b8b8b"/><rect x="1044" y="447" width="41" height="41" fill="#8b8b8b"/><rect x="1084" y="447" width="41" height="41" fill="#7e7e7e"/><rect x="1124" y="447" width="41" height="41" fill="#727272"/><rect x="1164" y="447" width="41" height="41" fill="#727272"/><rect x="1204" y="447" width="41" height="41" fill="#8b8b8b"/><rect x="1244" y="447" width="41" height="41" fill="#7e7e7e"/><rect x="1284" y="447" width="41" height="41" fill="#727272"/><rect x="1324" y="447" width="41" height="41" fill="#444444"/><rect x="1364" y="447" width="41" height="41" fill="#444444"/><rect x="484" y="487" width="41" height="41" fill="#ececec"/><rect x="524" y="487" width="41" height="41" fill="#ececec"/><rect x="564" y="487" width="41" height="41" fill="#ececec"/><rect x="604" y="487" width="41" height="41" fill="#ececec"/><rect x="644" y="487" width="41" height="41" fill="#ececec"/><rect x="684" y="487" width="41" height="41" fill="#ececec"/><rect x="724" y="487" width="41" height="41" fill="#ececec"/><rect x="764" y="487" width="41" height="41" fill="#a3a3a3"/><rect x="804" y="487" width="41" height="41" fill="#727272"/><rect x="844" y="487" width="41" height="41" fill="#8b8b8b"/><rect x="884" y="487" width="41" height="41" fill="#8b8b8b"/><rect x="924" y="487" width="41" height="41" fill="#8b8b8b"/><rect x="964" y="487" width="41" height="41" fill="#8b8b8b"/><rect x="1004" y="487" width="41" height="41" fill="#8b8b8b"/><rect x="1044" y="487" width="41" height="41" fill="#8b8b8b"/><rect x="1084" y="487" width="41" height="41" fill="#7e7e7e"/><rect x="1124" y="487" width="41" height="41" fill="#727272"/><rect x="1164" y="487" width="41" height="41" fill="#7e7e7e"/><rect x="1204" y="487" width="41" height="41" fill="#8b8b8b"/><rect x="1244" y="487" width="41" height="41" fill="#7e7e7e"/><rect x="1284" y="487" width="41" height="41" fill="#656565"/><rect x="1324" y="487" width="41" height="41" fill="#131313"/><rect x="1364" y="487" width="41" height="41" fill="#131313"/><rect x="484" y="527" width="41" height="41" fill="#ececec"/><rect x="524" y="527" width="41" height="41" fill="#ececec"/><rect x="564" y="527" width="41" height="41" fill="#ececec"/><rect x="604" y="527" width="41" height="41" fill="#ececec"/><rect x="644" y="527" width="41" height="41" fill="#ececec"/><rect x="684" y="527" width="41" height="41" fill="#ececec"/><rect x="724" y="527" width="41" height="41" fill="#ececec"/><rect x="764" y="527" width="41" height="41" fill="#8b8b8b"/><rect x="804" y="527" width="41" height="41" fill="#7e7e7e"/><rect x="844" y="527" width="41" height="41" fill="#8b8b8b"/><rect x="884" y="527" width="41" height="41" fill="#a3a3a3"/><rect x="924" y="527" width="41" height="41" fill="#a3a3a3"/><rect x="964" y="527" width="41" height="41" fill="#8b8b8b"/><rect x="1004" y="527" width="41" height="41" fill="#b4b4b4"/><rect x="1044" y="527" width="41" height="41" fill="#a3a3a3"/><rect x="1084" y="527" width="41" height="41" fill="#7e7e7e"/><rect x="1124" y="527" width="41" height="41" fill="#7e7e7e"/><rect x="1164" y="527" width="41" height="41" fill="#727272"/><rect x="1204" y="527" width="41" height="41" fill="#7e7e7e"/><rect x="1244" y="527" width="41" height="41" fill="#7e7e7e"/><rect x="1284" y="527" width="41" height="41" fill="#727272"/><rect x="1324" y="527" width="41" height="41" fill="#444444"/><rect x="1364" y="527" width="41" height="41" fill="#444444"/><rect x="484" y="567" width="41" height="41" fill="#ececec"/><rect x="524" y="567" width="41" height="41" fill="#ececec"/><rect x="564" y="567" width="41" height="41" fill="#ececec"/><rect x="604" y="567" width="41" height="41" fill="#ececec"/><rect x="644" y="567" width="41" height="41" fill="#ececec"/><rect x="684" y="567" width="41" height="41" fill="#ececec"/><rect x="724" y="567" width="41" height="41" fill="#ececec"/><rect x="764" y="567" width="41" height="41" fill="#8b8b8b"/><rect x="804" y="567" width="41" height="41" fill="#7e7e7e"/><rect x="844" y="567" width="41" height="41" fill="#a3a3a3"/><rect x="884" y="567" width="41" height="41" fill="#a3a3a3"/><rect x="924" y="567" width="41" height="41" fill="#b4b4b4"/><rect x="964" y="567" width="41" height="41" fill="#b4b4b4"/><rect x="1004" y="567" width="41" height="41" fill="#b4b4b4"/><rect x="1044" y="567" width="41" height="41" fill="#a3a3a3"/><rect x="1084" y="567" width="41" height="41" fill="#7e7e7e"/><rect x="1124" y="567" width="41" height="41" fill="#8b8b8b"/><rect x="1164" y="567" width="41" height="41" fill="#7e7e7e"/><rect x="1204" y="567" width="41" height="41" fill="#7e7e7e"/><rect x="1244" y="567" width="41" height="41" fill="#7e7e7e"/><rect x="1284" y="567" width="41" height="41" fill="#656565"/><rect x="1324" y="567" width="41" height="41" fill="#444444"/><rect x="1364" y="567" width="41" height="41" fill="#444444"/><rect x="484" y="607" width="41" height="41" fill="#ececec"/><rect x="524" y="607" width="41" height="41" fill="#ececec"/><rect x="564" y="607" width="41" height="41" fill="#ececec"/><rect x="604" y="607" width="41" height="41" fill="#ececec"/><rect x="644" y="607" width="41" height="41" fill="#ececec"/><rect x="684" y="607" width="41" height="41" fill="#ececec"/><rect x="724" y="607" width="41" height="41" fill="#ececec"/><rect x="764" y="607" width="41" height="41" fill="#a3a3a3"/><rect x="804" y="607" width="41" height="41" fill="#a3a3a3"/><rect x="844" y="607" width="41" height="41" fill="#a3a3a3"/><rect x="884" y="607" width="41" height="41" fill="#b4b4b4"/><rect x="924" y="607" width="41" height="41" fill="#ececec"/><rect x="964" y="607" width="41" height="41" fill="#ececec"/><rect x="1004" y="607" width="41" height="41" fill="#ececec"/><rect x="1044" y="607" width="41" height="41" fill="#b4b4b4"/><rect x="1084" y="607" width="41" height="41" fill="#8b8b8b"/><rect x="1124" y="607" width="41" height="41" fill="#8b8b8b"/><rect x="1164" y="607" width="41" height="41" fill="#7e7e7e"/><rect x="1204" y="607" width="41" height="41" fill="#8b8b8b"/><rect x="1244" y="607" width="41" height="41" fill="#8b8b8b"/><rect x="1284" y="607" width="41" height="41" fill="#7e7e7e"/><rect x="1324" y="607" width="41" height="41" fill="#595959"/><rect x="1364" y="607" width="41" height="41" fill="#595959"/><rect x="484" y="647" width="41" height="41" fill="#ececec"/><rect x="524" y="647" width="41" height="41" fill="#ececec"/><rect x="564" y="647" width="41" height="41" fill="#ececec"/><rect x="604" y="647" width="41" height="41" fill="#ececec"/><rect x="644" y="647" width="41" height="41" fill="#ececec"/><rect x="684" y="647" width="41" height="41" fill="#ececec"/><rect x="724" y="647" width="41" height="41" fill="#b4b4b4"/><rect x="764" y="647" width="41" height="41" fill="#b4b4b4"/><rect x="804" y="647" width="41" height="41" fill="#b4b4b4"/><rect x="844" y="647" width="41" height="41" fill="#b4b4b4"/><rect x="884" y="647" width="41" height="41" fill="#b4b4b4"/><rect x="924" y="647" width="41" height="41" fill="#b4b4b4"/><rect x="964" y="647" width="41" height="41" fill="#b4b4b4"/><rect x="1004" y="647" width="41" height="41" fill="#b4b4b4"/><rect x="1044" y="647" width="41" height="41" fill="#b4b4b4"/><rect x="1084" y="647" width="41" height="41" fill="#8b8b8b"/><rect x="1124" y="647" width="41" height="41" fill="#7e7e7e"/><rect x="1164" y="647" width="41" height="41" fill="#7e7e7e"/><rect x="1204" y="647" width="41" height="41" fill="#7e7e7e"/><rect x="1244" y="647" width="41" height="41" fill="#7e7e7e"/><rect x="1284" y="647" width="41" height="41" fill="#7e7e7e"/><rect x="1324" y="647" width="41" height="41" fill="#656565"/><rect x="1364" y="647" width="41" height="41" fill="#656565"/><rect x="484" y="687" width="41" height="41" fill="#8b8b8b"/><rect x="524" y="687" width="41" height="41" fill="#8b8b8b"/><rect x="564" y="687" width="41" height="41" fill="#ececec"/><rect x="604" y="687" width="41" height="41" fill="#ececec"/><rect x="644" y="687" width="41" height="41" fill="#ececec"/><rect x="684" y="687" width="41" height="41" fill="#ececec"/><rect x="724" y="687" width="41" height="41" fill="#b4b4b4"/><rect x="764" y="687" width="41" height="41" fill="#a3a3a3"/><rect x="804" y="687" width="41" height="41" fill="#8b8b8b"/><rect x="844" y="687" width="41" height="41" fill="#a3a3a3"/><rect x="884" y="687" width="41" height="41" fill="#b4b4b4"/><rect x="924" y="687" width="41" height="41" fill="#b4b4b4"/><rect x="964" y="687" width="41" height="41" fill="#a3a3a3"/><rect x="1004" y="687" width="41" height="41" fill="#a3a3a3"/><rect x="1044" y="687" width="41" height="41" fill="#8b8b8b"/><rect x="1084" y="687" width="41" height="41" fill="#8b8b8b"/><rect x="1124" y="687" width="41" height="41" fill="#8b8b8b"/><rect x="1164" y="687" width="41" height="41" fill="#8b8b8b"/><rect x="1204" y="687" width="41" height="41" fill="#7e7e7e"/><rect x="1244" y="687" width="41" height="41" fill="#727272"/><rect x="1284" y="687" width="41" height="41" fill="#656565"/><rect x="1324" y="687" width="41" height="41" fill="#8b8b8b"/><rect x="1364" y="687" width="41" height="41" fill="#8b8b8b"/><rect x="484" y="727" width="41" height="41" fill="#ececec"/><rect x="524" y="727" width="41" height="41" fill="#ececec"/><rect x="564" y="727" width="41" height="41" fill="#ececec"/><rect x="604" y="727" width="41" height="41" fill="#ececec"/><rect x="644" y="727" width="41" height="41" fill="#ececec"/><rect x="684" y="727" width="41" height="41" fill="#ececec"/><rect x="724" y="727" width="41" height="41" fill="#a3a3a3"/><rect x="764" y="727" width="41" height="41" fill="#b4b4b4"/><rect x="804" y="727" width="41" height="41" fill="#a3a3a3"/><rect x="844" y="727" width="41" height="41" fill="#7e7e7e"/><rect x="884" y="727" width="41" height="41" fill="#8b8b8b"/><rect x="924" y="727" width="41" height="41" fill="#a3a3a3"/><rect x="964" y="727" width="41" height="41" fill="#8b8b8b"/><rect x="1004" y="727" width="41" height="41" fill="#8b8b8b"/><rect x="1044" y="727" width="41" height="41" fill="#7e7e7e"/><rect x="1084" y="727" width="41" height="41" fill="#8b8b8b"/><rect x="1124" y="727" width="41" height="41" fill="#8b8b8b"/><rect x="1164" y="727" width="41" height="41" fill="#8b8b8b"/><rect x="1204" y="727" width="41" height="41" fill="#7e7e7e"/><rect x="1244" y="727" width="41" height="41" fill="#727272"/><rect x="1284" y="727" width="41" height="41" fill="#656565"/><rect x="1324" y="727" width="41" height="41" fill="#7e7e7e"/><rect x="1364" y="727" width="41" height="41" fill="#7e7e7e"/><rect x="484" y="767" width="41" height="41" fill="#ececec"/><rect x="524" y="767" width="41" height="41" fill="#ececec"/><rect x="564" y="767" width="41" height="41" fill="#ececec"/><rect x="604" y="767" width="41" height="41" fill="#b4b4b4"/><rect x="644" y="767" width="41" height="41" fill="#b4b4b4"/><rect x="684" y="767" width="41" height="41" fill="#ececec"/><rect x="724" y="767" width="41" height="41" fill="#ececec"/><rect x="764" y="767" width="41" height="41" fill="#b4b4b4"/><rect x="804" y="767" width="41" height="41" fill="#a3a3a3"/><rect x="844" y="767" width="41" height="41" fill="#7e7e7e"/><rect x="884" y="767" width="41" height="41" fill="#8b8b8b"/><rect x="924" y="767" width="41" height="41" fill="#8b8b8b"/><rect x="964" y="767" width="41" height="41" fill="#8b8b8b"/><rect x="1004" y="767" width="41" height="41" fill="#8b8b8b"/><rect x="1044" y="767" width="41" height="41" fill="#727272"/><rect x="1084" y="767" width="41" height="41" fill="#7e7e7e"/><rect x="1124" y="767" width="41" height="41" fill="#8b8b8b"/><rect x="1164" y="767" width="41" height="41" fill="#7e7e7e"/><rect x="1204" y="767" width="41" height="41" fill="#7e7e7e"/><rect x="1244" y="767" width="41" height="41" fill="#727272"/><rect x="1284" y="767" width="41" height="41" fill="#656565"/><rect x="1324" y="767" width="41" height="41" fill="#7e7e7e"/><rect x="1364" y="767" width="41" height="41" fill="#7e7e7e"/><rect x="484" y="807" width="41" height="41" fill="#ececec"/><rect x="524" y="807" width="41" height="41" fill="#ececec"/><rect x="564" y="807" width="41" height="41" fill="#ececec"/><rect x="604" y="807" width="41" height="41" fill="#ececec"/><rect x="644" y="807" width="41" height="41" fill="#b4b4b4"/><rect x="684" y="807" width="41" height="41" fill="#b4b4b4"/><rect x="724" y="807" width="41" height="41" fill="#ececec"/><rect x="764" y="807" width="41" height="41" fill="#b4b4b4"/><rect x="804" y="807" width="41" height="41" fill="#8b8b8b"/><rect x="844" y="807" width="41" height="41" fill="#7e7e7e"/><rect x="884" y="807" width="41" height="41" fill="#8b8b8b"/><rect x="924" y="807" width="41" height="41" fill="#8b8b8b"/><rect x="964" y="807" width="41" height="41" fill="#7e7e7e"/><rect x="1004" y="807" width="41" height="41" fill="#7e7e7e"/><rect x="1044" y="807" width="41" height="41" fill="#656565"/><rect x="1084" y="807" width="41" height="41" fill="#7e7e7e"/><rect x="1124" y="807" width="41" height="41" fill="#8b8b8b"/><rect x="1164" y="807" width="41" height="41" fill="#7e7e7e"/><rect x="1204" y="807" width="41" height="41" fill="#7e7e7e"/><rect x="1244" y="807" width="41" height="41" fill="#727272"/><rect x="1284" y="807" width="41" height="41" fill="#656565"/><rect x="1324" y="807" width="41" height="41" fill="#727272"/><rect x="1364" y="807" width="41" height="41" fill="#727272"/><rect x="484" y="847" width="41" height="41" fill="#7e7e7e"/><rect x="524" y="847" width="41" height="41" fill="#7e7e7e"/><rect x="564" y="847" width="41" height="41" fill="#8b8b8b"/><rect x="604" y="847" width="41" height="41" fill="#8b8b8b"/><rect x="644" y="847" width="41" height="41" fill="#7e7e7e"/><rect x="684" y="847" width="41" height="41" fill="#7e7e7e"/><rect x="724" y="847" width="41" height="41" fill="#727272"/><rect x="764" y="847" width="41" height="41" fill="#7e7e7e"/><rect x="804" y="847" width="41" height="41" fill="#7e7e7e"/><rect x="844" y="847" width="41" height="41" fill="#7e7e7e"/><rect x="884" y="847" width="41" height="41" fill="#7e7e7e"/><rect x="924" y="847" width="41" height="41" fill="#727272"/><rect x="964" y="847" width="41" height="41" fill="#727272"/><rect x="1004" y="847" width="41" height="41" fill="#7e7e7e"/><rect x="1044" y="847" width="41" height="41" fill="#727272"/><rect x="1084" y="847" width="41" height="41" fill="#727272"/><rect x="1124" y="847" width="41" height="41" fill="#727272"/><rect x="1164" y="847" width="41" height="41" fill="#727272"/><rect x="1204" y="847" width="41" height="41" fill="#7e7e7e"/><rect x="1244" y="847" width="41" height="41" fill="#8b8b8b"/><rect x="1284" y="847" width="41" height="41" fill="#7e7e7e"/><rect x="1324" y="847" width="41" height="41" fill="#656565"/><rect x="1364" y="847" width="41" height="41" fill="#656565"/><rect x="484" y="887" width="41" height="41" fill="#444444"/><rect x="524" y="887" width="41" height="41" fill="#444444"/><rect x="564" y="887" width="41" height="41" fill="#656565"/><rect x="604" y="887" width="41" height="41" fill="#727272"/><rect x="644" y="887" width="41" height="41" fill="#656565"/><rect x="684" y="887" width="41" height="41" fill="#727272"/><rect x="724" y="887" width="41" height="41" fill="#727272"/><rect x="764" y="887" width="41" height="41" fill="#727272"/><rect x="804" y="887" width="41" height="41" fill="#727272"/><rect x="844" y="887" width="41" height="41" fill="#727272"/><rect x="884" y="887" width="41" height="41" fill="#7e7e7e"/><rect x="924" y="887" width="41" height="41" fill="#727272"/><rect x="964" y="887" width="41" height="41" fill="#727272"/><rect x="1004" y="887" width="41" height="41" fill="#727272"/><rect x="1044" y="887" width="41" height="41" fill="#727272"/><rect x="1084" y="887" width="41" height="41" fill="#727272"/><rect x="1124" y="887" width="41" height="41" fill="#7e7e7e"/><rect x="1164" y="887" width="41" height="41" fill="#727272"/><rect x="1204" y="887" width="41" height="41" fill="#727272"/><rect x="1244" y="887" width="41" height="41" fill="#7e7e7e"/><rect x="1284" y="887" width="41" height="41" fill="#8b8b8b"/><rect x="1324" y="887" width="41" height="41" fill="#656565"/><rect x="1364" y="887" width="41" height="41" fill="#656565"/><rect x="484" y="927" width="41" height="41" fill="#7e7e7e"/><rect x="524" y="927" width="41" height="41" fill="#7e7e7e"/><rect x="564" y="927" width="41" height="41" fill="#727272"/><rect x="604" y="927" width="41" height="41" fill="#595959"/><rect x="644" y="927" width="41" height="41" fill="#656565"/><rect x="684" y="927" width="41" height="41" fill="#656565"/><rect x="724" y="927" width="41" height="41" fill="#727272"/><rect x="764" y="927" width="41" height="41" fill="#656565"/><rect x="804" y="927" width="41" height="41" fill="#656565"/><rect x="844" y="927" width="41" height="41" fill="#727272"/><rect x="884" y="927" width="41" height="41" fill="#7e7e7e"/><rect x="924" y="927" width="41" height="41" fill="#656565"/><rect x="964" y="927" width="41" height="41" fill="#727272"/><rect x="1004" y="927" width="41" height="41" fill="#7e7e7e"/><rect x="1044" y="927" width="41" height="41" fill="#727272"/><rect x="1084" y="927" width="41" height="41" fill="#727272"/><rect x="1124" y="927" width="41" height="41" fill="#8b8b8b"/><rect x="1164" y="927" width="41" height="41" fill="#7e7e7e"/><rect x="1204" y="927" width="41" height="41" fill="#727272"/><rect x="1244" y="927" width="41" height="41" fill="#727272"/><rect x="1284" y="927" width="41" height="41" fill="#8b8b8b"/><rect x="1324" y="927" width="41" height="41" fill="#656565"/><rect x="1364" y="927" width="41" height="41" fill="#656565"/><rect x="484" y="967" width="41" height="41" fill="#727272"/><rect x="524" y="967" width="41" height="41" fill="#727272"/><rect x="564" y="967" width="41" height="41" fill="#656565"/><rect x="604" y="967" width="41" height="41" fill="#595959"/><rect x="644" y="967" width="41" height="41" fill="#656565"/><rect x="684" y="967" width="41" height="41" fill="#656565"/><rect x="724" y="967" width="41" height="41" fill="#727272"/><rect x="764" y="967" width="41" height="41" fill="#656565"/><rect x="804" y="967" width="41" height="41" fill="#656565"/><rect x="844" y="967" width="41" height="41" fill="#656565"/><rect x="884" y="967" width="41" height="41" fill="#7e7e7e"/><rect x="924" y="967" width="41" height="41" fill="#656565"/><rect x="964" y="967" width="41" height="41" fill="#727272"/><rect x="1004" y="967" width="41" height="41" fill="#727272"/><rect x="1044" y="967" width="41" height="41" fill="#656565"/><rect x="1084" y="967" width="41" height="41" fill="#656565"/><rect x="1124" y="967" width="41" height="41" fill="#727272"/><rect x="1164" y="967" width="41" height="41" fill="#727272"/><rect x="1204" y="967" width="41" height="41" fill="#727272"/><rect x="1244" y="967" width="41" height="41" fill="#727272"/><rect x="1284" y="967" width="41" height="41" fill="#8b8b8b"/><rect x="1324" y="967" width="41" height="41" fill="#656565"/><rect x="1364" y="967" width="41" height="41" fill="#656565"/><rect x="484" y="1007" width="41" height="41" fill="#727272"/><rect x="524" y="1007" width="41" height="41" fill="#727272"/><rect x="564" y="1007" width="41" height="41" fill="#656565"/><rect x="604" y="1007" width="41" height="41" fill="#595959"/><rect x="644" y="1007" width="41" height="41" fill="#656565"/><rect x="684" y="1007" width="41" height="41" fill="#656565"/><rect x="724" y="1007" width="41" height="41" fill="#727272"/><rect x="764" y="1007" width="41" height="41" fill="#656565"/><rect x="804" y="1007" width="41" height="41" fill="#656565"/><rect x="844" y="1007" width="41" height="41" fill="#656565"/><rect x="884" y="1007" width="41" height="41" fill="#7e7e7e"/><rect x="924" y="1007" width="41" height="41" fill="#656565"/><rect x="964" y="1007" width="41" height="41" fill="#727272"/><rect x="1004" y="1007" width="41" height="41" fill="#727272"/><rect x="1044" y="1007" width="41" height="41" fill="#656565"/><rect x="1084" y="1007" width="41" height="41" fill="#656565"/><rect x="1124" y="1007" width="41" height="41" fill="#727272"/><rect x="1164" y="1007" width="41" height="41" fill="#727272"/><rect x="1204" y="1007" width="41" height="41" fill="#727272"/><rect x="1244" y="1007" width="41" height="41" fill="#727272"/><rect x="1284" y="1007" width="41" height="41" fill="#8b8b8b"/><rect x="1324" y="1007" width="41" height="41" fill="#656565"/><rect x="1364" y="1007" width="41" height="41" fill="#656565"/></g><g filter="url(#mb2)"><polygon points="500,190 716,190 730,215 760,240 790,268 806,290 816,314 800,338 775,352 755,362 748,382 728,389 697,391 677,402 650,398 626,394 600,388 575,384 550,379 500,374" fill="#060606"/><polygon points="626,222 640,216 667,217 668,240 655,243 651,256 640,254 636,240 628,236" fill="#b9b9b9"/><polygon points="601,241 612,237 619,246 616,262 606,267 600,258" fill="#b9b9b9"/><polygon points="534,268 548,264 562,267 570,278 569,295 556,296 540,294 534,284" fill="#b9b9b9"/><polygon points="575,301 584,303 587,316 577,316" fill="#b9b9b9"/><polygon points="586,318 598,310 610,313 611,330 608,346 596,347 588,340" fill="#b9b9b9"/><polygon points="561,337 575,339 581,344 570,347" fill="#b9b9b9"/><polygon points="669,326 688,324 690,333 672,335" fill="#b9b9b9"/><polygon points="697,327 720,330 743,334 737,356 730,380 720,378 712,375 705,352" fill="#f9f9f9"/><polygon points="644,372 655,370 660,380 650,388 644,383" fill="#b9b9b9"/><polygon points="662,366 668,370 664,378" fill="#b9b9b9"/><polyline points="622,258 650,285 680,297 700,328" fill="none" stroke="#bfbfbf" stroke-width="1.6"/><polyline points="716,207 760,240 790,268 806,290" fill="none" stroke="#b2b2b2" stroke-width="2"/><polygon points="743,334 752,328 762,330 750,360 738,382 730,380 737,356" fill="#060606"/><polygon points="500,378 550,381 575,385 600,390 626,396 650,400 677,404 697,393 728,391 748,390 760,396 775,410 790,425 800,440 780,445 750,438 730,425 728,412 700,412 690,424 680,412 650,411 626,408 600,410 575,408 550,400 500,392" fill="#f9f9f9"/><polygon points="781,503 765,515 758,532 735,533 720,532 708,550 708,566 715,588 727,612 741,635 765,651 775,640 770,615 766,590 770,560 780,535 792,515" fill="#f9f9f9"/><polygon points="800,530 830,522 856,535 870,560 866,590 845,612 815,625 790,615 780,590 782,555" fill="#666666"/><polygon points="824,552 850,550 860,575 845,594 826,590" fill="#060606"/><polygon points="837,440 860,430 890,432 898,444 880,453 855,455" fill="#060606"/><polygon points="900,447 925,436 955,438 968,450 955,470 935,482 912,484 900,470" fill="#5c5c5c"/><polygon points="809,455 840,452 863,462 858,480 830,484 810,478" fill="#606060"/><polyline points="800,440 830,428 870,424 920,428 970,436 1000,455 1012,480 1016,510" fill="none" stroke="#d9d9d9" stroke-width="6"/><polygon points="960,600 1000,610 1040,572 1062,568 1072,590 1082,620 1104,650 1118,680 1100,700 1040,690 990,700 940,690 900,700 880,680 900,640 930,615" fill="#c6c6c6"/><polygon points="768,652 800,640 830,650 860,660 880,690 860,720 830,735 800,760 775,770 755,775 760,745 770,726 756,719 733,707 730,693 753,690 756,672 769,667" fill="#d2d2d2"/><polygon points="682,792 708,799 732,790 748,786 760,805 773,829 790,850 780,868 740,872 700,868 660,872 640,866 648,846 660,835 670,825 675,808" fill="#dfdfdf"/><polygon points="764,680 780,679 795,688 790,702 780,714 766,712 760,698" fill="#797979"/><polygon points="700,832 712,826 740,856 730,864" fill="#060606"/><polygon points="690,850 706,846 722,870 700,872" fill="#060606"/><polygon points="500,826 545,821 561,819 580,827 590,840 602,862 631,868 636,876 600,884 570,876 545,868 524,864 500,866" fill="#f9f9f9"/><polygon points="500,948 540,944 570,950 586,964 588,986 566,981 545,972 524,960 500,950" fill="#dfdfdf"/><polygon points="500,870 550,872 566,890 560,930 540,940 500,940" fill="#060606"/><polygon points="1040,247 1062,243 1082,248 1082,300 1070,311 1048,309 1038,290" fill="#060606"/><polygon points="957,312 985,309 998,325 996,350 975,355 960,345" fill="#060606"/><polygon points="880,362 891,362 892,380 898,384 898,408 884,408 884,386 870,384 870,376 880,374" fill="#060606"/><polygon points="1130,352 1160,350 1181,362 1178,395 1150,401 1132,390" fill="#060606"/><polygon points="949,347 970,345 976,365 962,378 950,370" fill="#f9f9f9"/><polygon points="865,352 880,350 880,372 866,372" fill="#f9f9f9"/><polygon points="892,362 906,362 906,372 892,372" fill="#f9f9f9"/><polygon points="1257,430 1296,429 1296,452 1258,453" fill="#060606"/><polygon points="1163,565 1205,562 1210,578 1170,583" fill="#060606"/><polygon points="1231,607 1262,606 1263,622 1232,623" fill="#060606"/><polygon points="1290,190 1400,190 1400,470 1345,470 1338,430 1336,380 1330,330 1316,290 1296,250" fill="#2d2d2d"/><polygon points="1326,518 1400,518 1400,588 1330,588" fill="#060606"/><polygon points="1345,600 1400,600 1400,690 1350,690" fill="#464646"/><polygon points="1248,232 1268,230 1273,262 1258,273 1247,255" fill="#bfbfbf"/><polygon points="1306,217 1334,215 1334,243 1310,245" fill="#cccccc"/><polygon points="1273,296 1285,294 1311,318 1308,330 1295,328" fill="#f9f9f9"/><polygon points="1294,330 1310,330 1311,400 1296,400" fill="#b9b9b9"/><polygon points="1318,385 1332,392 1334,424 1322,420" fill="#bfbfbf"/><polygon points="1227,306 1250,310 1255,326 1232,327" fill="#bfbfbf"/><polygon points="1207,388 1226,386 1227,418 1210,418" fill="#bfbfbf"/><polygon points="1336,690 1400,690 1400,713 1338,713" fill="#cccccc"/><polyline points="1225,207 1226,420 1228,640" fill="none" stroke="#b2b2b2" stroke-width="5"/><polyline points="1142,689 1175,726 1215,771 1224,826 1242,871 1291,893 1306,938 1315,990" fill="none" stroke="#e6e6e6" stroke-width="15" stroke-linejoin="round"/><polygon points="1218,741 1248,741 1248,771 1220,771" fill="#cccccc"/><polygon points="1281,847 1309,847 1309,868 1283,868" fill="#cccccc"/><polygon points="1151,947 1184,947 1184,963 1151,963" fill="#f9f9f9"/><polygon points="1130,917 1175,917 1175,932 1130,932" fill="#bfbfbf"/><polygon points="1178,938 1218,938 1218,960 1178,960" fill="#060606"/><polygon points="1084,830 1130,826 1133,895 1090,899" fill="#4f4f4f"/><polyline points="1147,674 1185,730 1224,794 1260,850" fill="none" stroke="#bfbfbf" stroke-width="7"/><polyline points="1020,700 1040,800 1060,900 1072,990" fill="none" stroke="#bfbfbf" stroke-width="5"/><polyline points="930,740 915,840 890,940 870,990" fill="none" stroke="#b9b9b9" stroke-width="4"/></g></g><g shape-rendering="crispEdges"><polygon points="524,386 540,392 560,400 575,406 600,408 626,406 650,409 677,408 680,410 681,419 686,422 694,421 697,412 702,410 728,410 733,418 736,423 745,430 755,435 768,439 781,440 781,443 774,450 767,456 764,463 763,470 770,474 783,478 785,480 785,501 781,503 773,508 765,515 760,525 758,532 755,538 745,537 735,533 724,530 720,533 722,540 712,546 708,550 709,553 730,553 731,562 712,563 708,566 710,578 715,588 720,600 727,612 733,622 739,632 735,640 740,642 754,643 759,639 769,638 767,645 762,650 772,652 779,650 787,651 789,657 801,657 811,653 817,650 822,651 832,656 841,662 849,669 861,674 873,672 876,666 880,657 884,641 891,630 904,619 918,612 921,616 908,623 896,633 890,643 886,658 881,670 873,680 866,685 858,683 846,686 829,686 820,690 815,688 801,688 795,685 787,681 775,677 765,676 763,685 757,692 748,694 740,692 729,693 730,700 732,707 745,714 755,719 767,726 764,730 760,738 757,745 748,746 741,747 734,755 728,762 716,768 707,774 695,778 682,781 668,773 654,766 638,763 621,761 621,763 638,766 654,770 668,777 683,784 698,788 713,787 728,784 745,779 757,775 766,781 776,773 782,780 769,786 779,789 789,801 786,809 794,818 806,824 810,828 800,824 794,821 783,824 778,830 775,824 773,831 772,822 765,810 757,800 748,789 742,788 725,792 711,796 710,799 700,795 692,792 685,789 679,787 683,799 676,812 669,824 658,836 647,846 639,859 633,868 615,865 602,862 596,850 590,840 585,832 580,827 570,822 561,819 545,821 530,824 524,826" fill="#0000ff"/><polygon points="713,784 728,774 735,764 745,762 751,770 742,778 725,784" fill="#00aa00"/><polygon points="690,781 700,784 712,785 700,787" fill="#00aa00"/><polygon points="741,747 757,745 764,730 772,740 768,760 757,775 751,770 745,762 735,764" fill="#aa5500"/><polygon points="631,774 636,772 641,778 642,789 647,799 658,800 666,802 667,795 670,792 676,799 679,787 683,799 676,805 669,809 658,812 654,806 639,808 629,789" fill="#aa5500"/><polygon points="716,737 719,741 723,749 721,755 715,756 710,750 711,743" fill="#aa5500"/><polygon points="770,787 776,795 782,809 775,821 772,808" fill="#00aa00"/><polygon points="764,792 770,792 770,803 765,802" fill="#aa5500"/><polygon points="806,770 811,771 798,790 794,789" fill="#0000ff"/><path d="M621 762 L640 768 L654 773 M654 766 L668 772 L681 778" stroke="#aa5500" stroke-width="1.5" fill="none"/><polygon points="524,715 540,713 556,722 570,730 577,738 566,744 548,738 532,735 524,737" fill="#aa5500"/><polygon points="540,722 556,730 566,738 552,734" fill="#00aa00"/><polygon points="646,530 649,529 660,551 657,553" fill="#aa5500"/><rect x="536" y="398" width="8" height="3" fill="#aa5500"/><rect x="556" y="404" width="6" height="2" fill="#aa5500"/><rect x="582" y="410" width="7" height="2" fill="#aa5500"/><rect x="612" y="410" width="5" height="2" fill="#aa5500"/><rect x="654" y="414" width="10" height="4" fill="#aa5500"/><rect x="662" y="420" width="6" height="3" fill="#aa5500"/><rect x="528" y="392" width="5" height="2" fill="#aa5500"/><rect x="596" y="664" width="3" height="2" fill="#aa5500"/><rect x="563" y="776" width="10" height="3" fill="#aa5500"/><rect x="567" y="786" width="4" height="2" fill="#aa5500"/><rect x="660" y="543" width="4" height="2" fill="#aa5500"/><rect x="620" y="540" width="3" height="2" fill="#aa5500"/><rect x="742" y="498" width="3" height="2" fill="#aa5500"/><rect x="724" y="499" width="2" height="2" fill="#aa5500"/><rect x="672" y="518" width="3" height="1" fill="#aa5500"/><rect x="592" y="521" width="2" height="3" fill="#aa5500"/><rect x="558" y="561" width="8" height="2" fill="#aa5500"/><rect x="571" y="568" width="5" height="2" fill="#aa5500"/><rect x="565" y="556" width="3" height="1" fill="#aa5500"/><polygon points="783,441 790,433 800,430 799,436 790,441" fill="#0000ff"/><polygon points="797,442 806,437 814,437 812,442 802,444" fill="#0000ff"/><polygon points="789,479 800,478 815,481 823,486 822,496 824,503 810,503 800,500 789,501" fill="#0000ff"/><polygon points="794,485 797,485 797,493 794,493" fill="#aa5500"/></g><path d="M824 505 L837 512 L852 517" fill="none" stroke="#0000ff" stroke-width="6" stroke-linejoin="round" stroke-linecap="round"/><path d="M852 517 L865 521 L880 530 L891 543" fill="none" stroke="#0000ff" stroke-width="3" stroke-linejoin="round" stroke-linecap="round"/><path d="M896 547 L905 552 L914 555" fill="none" stroke="#0000ff" stroke-width="9" stroke-linejoin="round" stroke-linecap="round"/><path d="M919 560 L933 568 L947 571 L955 570" fill="none" stroke="#0000ff" stroke-width="2" stroke-linejoin="round" stroke-linecap="round" stroke-dasharray="3 3"/><g shape-rendering="crispEdges"><polygon points="954,568 993,555 998,568 967,589 959,589" fill="#0000ff"/><polygon points="1000,554 1023,541 1040,547 1038,557 1005,567 1001,566" fill="#0000ff"/><polygon points="1043,548 1072,550 1092,543 1107,531 1125,530 1145,541 1148,553 1144,563 1140,550 1128,539 1110,538 1094,550 1072,558 1043,557" fill="#0000ff"/><polygon points="1135,594 1142,595 1133,629 1130,655 1120,655 1119,634 1128,612" fill="#0000ff"/><polygon points="1124,660 1132,659 1140,668 1148,680 1154,690 1150,695 1143,692 1135,680 1128,670" fill="#0000ff"/><polygon points="964,439 978,438 980,444 966,445" fill="#0000ff"/><polygon points="804,436 814,437 813,441 804,441" fill="#0000ff"/></g><path d="M1145 563 L1142 578 L1138 590" fill="none" stroke="#0000ff" stroke-width="2.5" stroke-linejoin="round" stroke-linecap="round" stroke-dasharray="3 2"/><path d="M1005 464 L1012 480 L1015 507 L1018 525 L1023 541" fill="none" stroke="#0000ff" stroke-width="2" stroke-linejoin="round" stroke-linecap="round" stroke-dasharray="5 3"/><path d="M1158 704 L1166 716" fill="none" stroke="#0000ff" stroke-width="2" stroke-linejoin="round" stroke-linecap="round" stroke-dasharray="2 3"/><path d="M1196 748 L1210 768" fill="none" stroke="#0000ff" stroke-width="3" stroke-linejoin="round" stroke-linecap="round" stroke-dasharray="2 2"/><path d="M959 589 L952 596" fill="none" stroke="#0000ff" stroke-width="5" stroke-linejoin="round" stroke-linecap="round"/><path d="M935 606 L926 613" fill="none" stroke="#0000ff" stroke-width="8" stroke-linejoin="round" stroke-linecap="round"/><path d="M921 613 L912 617" fill="none" stroke="#0000ff" stroke-width="6" stroke-linejoin="round" stroke-linecap="round"/><g shape-rendering="crispEdges"><polygon points="779,658 786,657.6 789.4,661.8 799,660.6 810.6,665 810.6,670 801,669 793,665 784.7,662 779,660.6" fill="#aa5500"/><polygon points="810.6,671 822,670 829.4,667 832,670 824.7,674.7 810.6,675" fill="#aa5500"/><polygon points="755,668 768,667 775,670 775,677 765,676 757,673" fill="#aa5500"/><polygon points="795,686.5 803.5,687.6 801,694.7 792,707.6 787,713.5 783.5,710 790.6,699.4" fill="#0000ff"/><polygon points="813,690 817.6,694.7 832,695 830.6,698 815,699.4 806,709 804.7,704 810,696" fill="#0000ff"/></g><path d="M770 627 L787 633 L803 634 L811 632" fill="none" stroke="#0000ff" stroke-width="3.5" stroke-linejoin="round" stroke-linecap="round"/><path d="M811 633 L806 640 L809 645 L806 650" fill="none" stroke="#0000ff" stroke-width="3.5" stroke-linejoin="round" stroke-linecap="round"/></svg></div>
<div class="a" style="left:523px;top:171px;width:843px;height:36px;background:#d9534f;border:1px solid #ac3e3b"></div>
<svg class="a" style="left:534px;top:178px" width="24" height="24" viewBox="0 0 24 24"><circle cx="12" cy="12" r="10" fill="#fff" stroke="#333" stroke-width="1.4"/><path d="M5.5 18.5L18.5 5.5" stroke="#333" stroke-width="1.8"/></svg>
<div class="t " style="left:569px;top:182.5px;font-size:13px;color:#fff;font-weight:bold;letter-spacing:-0.353px;">Error:</div>
<div class="t " style="left:608px;top:182.5px;font-size:13px;color:#fff;letter-spacing:-0.118px;">Process failed</div>
<div class="t " style="left:1259px;top:182.5px;font-size:13px;color:#fff;font-style:italic;letter-spacing:0.091px;">1 more</div>
<svg class="a" style="left:1320px;top:178px" width="36" height="24" viewBox="0 0 36 24"><circle cx="11.5" cy="11.5" r="9.5" fill="#241010"/><path d="M7.5 7.5l8 8M15.5 7.5l-8 8" stroke="#fff" stroke-width="2.4"/><path d="M23 9.5h9l-4.5 4.5z" fill="#4a1f1f"/></svg>
<div class="a" style="left:520px;top:573px;width:1px;height:17px;background-image:linear-gradient(#999 1px,transparent 1px);background-size:1px 3px"></div>
<div class="a" style="left:1370px;top:573px;width:1px;height:17px;background-image:linear-gradient(#999 1px,transparent 1px);background-size:1px 3px"></div>
<div class="t " style="left:1377px;top:173.5px;font-size:15px;">Инструменты анализа</div>
<svg class="a" style="left:1893px;top:175px" width="26" height="12" viewBox="0 0 26 12"><rect x="0.5" y="0.5" width="10" height="10" rx="2" fill="#e8e8e8" stroke="#555"/><rect x="2.5" y="4.5" width="4.5" height="4" fill="none" stroke="#555" stroke-width="0.9"/><path d="M4.5 4.5v-2h4v4h-1.5" fill="none" stroke="#555" stroke-width="0.9"/><rect x="14.5" y="0.5" width="10" height="10" rx="2" fill="#e8e8e8" stroke="#555"/><path d="M17 3l5 5M22 3l-5 5" stroke="#333" stroke-width="1.7"/></svg>
<div class="a" style="left:1381.0px;top:197.0px;width:16px;height:16px"><svg width="16" height="16" viewBox="0 0 16 16"><path d="M4.45 2.25L4.40 0.24L5.60 0.24L5.55 2.25L6.56 2.67L7.94 1.21L8.79 2.06L7.33 3.44L7.75 4.45L9.76 4.40L9.76 5.60L7.75 5.55L7.33 6.56L8.79 7.94L7.94 8.79L6.56 7.33L5.55 7.75L5.60 9.76L4.40 9.76L4.45 7.75L3.44 7.33L2.06 8.79L1.21 7.94L2.67 6.56L2.25 5.55L0.24 5.60L0.24 4.40L2.25 4.45L2.67 3.44L1.21 2.06L2.06 1.21L3.44 2.67z" fill="#d01818"/><circle cx="5" cy="5" r="1.12" fill="#f0f0f0"/><path d="M10.11 6.54L10.06 5.03L10.94 5.03L10.89 6.54L11.61 6.84L12.65 5.73L13.27 6.35L12.16 7.39L12.46 8.11L13.97 8.06L13.97 8.94L12.46 8.89L12.16 9.61L13.27 10.65L12.65 11.27L11.61 10.16L10.89 10.46L10.94 11.97L10.06 11.97L10.11 10.46L9.39 10.16L8.35 11.27L7.73 10.65L8.84 9.61L8.54 8.89L7.03 8.94L7.03 8.06L8.54 8.11L8.84 7.39L7.73 6.35L8.35 5.73L9.39 6.84z" fill="#555"/><circle cx="10.5" cy="8.5" r="0.80" fill="#f0f0f0"/><path d="M6.19 10.43L6.15 9.22L6.85 9.22L6.81 10.43L7.39 10.67L8.22 9.79L8.71 10.28L7.83 11.11L8.07 11.69L9.28 11.65L9.28 12.35L8.07 12.31L7.83 12.89L8.71 13.72L8.22 14.21L7.39 13.33L6.81 13.57L6.85 14.78L6.15 14.78L6.19 13.57L5.61 13.33L4.78 14.21L4.29 13.72L5.17 12.89L4.93 12.31L3.72 12.35L3.72 11.65L4.93 11.69L5.17 11.11L4.29 10.28L4.78 9.79L5.61 10.67z" fill="#88a8e0"/><circle cx="6.5" cy="12" r="0.64" fill="#f0f0f0"/><path d="M9 11.500h7l-3.500 4z" fill="#3a3a3a"/></svg></div>
<div class="a" style="left:1406.0px;top:197.0px;width:16px;height:16px"><svg width="16" height="16" viewBox="0 0 16 16"><path d="M7.500 1c-2.700 0-3 1.200-3 2.200V5h3.300v.700H3c-1.300 0-2 1-2 2.700s.700 2.700 2 2.700h1.500v-2c0-1.300 1-2.100 2.300-2.100h3c1 0 1.700-.700 1.700-1.700V3.200C11.500 1.800 10.200 1 7.500 1z" fill="#3d78ae"/><path d="M8.500 15c2.700 0 3-1.200 3-2.200V11H8.200v-.700H13c1.300 0 2-1 2-2.700s-.700-2.700-2-2.700h-1.500v2c0 1.300-1 2.100-2.300 2.100h-3c-1 0-1.700.700-1.700 1.700v2.100c0 1.400 1.300 2.200 4 2.200z" fill="#fbd343"/><path d="M9 11.500h7l-3.500 4z" fill="#3a3a3a"/></svg></div>
<div class="a" style="left:1431.0px;top:197.0px;width:16px;height:16px"><svg width="16" height="16" viewBox="0 0 16 16"><circle cx="8" cy="8" r="7" fill="#fafafa" stroke="#8a8a8a" stroke-width="1"/><path d="M8 3.500V8l3 2" fill="none" stroke="#8a8a8a" stroke-width="1"/></svg></div>
<div class="a" style="left:1456.0px;top:197.0px;width:16px;height:16px"><svg width="16" height="16" viewBox="0 0 16 16"><path d="M2.500 1h7.500l3.500 3.500V15h-11z" fill="#f4f4f4" stroke="#b4b4b4" stroke-width="0.900"/><path d="M4.500 6h7M4.500 8.500h7M4.500 11h7M4.500 13h4" stroke="#b8b8b8" stroke-width="1"/></svg></div>
<div class="a" style="left:1489.0px;top:197.0px;width:16px;height:16px"><svg width="16" height="16" viewBox="0 0 16 16"><rect x="1" y="1.500" width="9.500" height="8" rx="1" fill="#e0ded6"/><path d="M5 10l6.500-1.500L8 15z" fill="#e0ded6"/><path d="M14.500 3l-5 10" stroke="#dcd8cc" stroke-width="2"/></svg></div>
<div class="a" style="left:1521.0px;top:197.0px;width:16px;height:16px"><svg width="16" height="16" viewBox="0 0 16 16"><path d="M7 6.500l7.500 8" stroke="#8a7a4a" stroke-width="3" stroke-linecap="round"/><path d="M8 7.500l6 6.500" stroke="#f0d060" stroke-width="1.600" stroke-linecap="round"/><path d="M2 2.500a3.200 3.200 0 0 0 5.500 3.500l-1.800-.300-1-1.700 1-1.800A3.200 3.200 0 0 0 2 2.500z" fill="#b8bcc2" stroke="#60656c" stroke-width="0.800"/><path d="M3 1.500a3.200 3.200 0 0 1 4.500 4.500" fill="none" stroke="#60656c" stroke-width="1.600"/></svg></div>
<div class="vsep" style="left:1480px;top:199px;height:12px"></div><div class="vsep" style="left:1513px;top:199px;height:12px"></div>
<div class="fld" style="left:1373px;top:221px;width:547px;height:26px;border-radius:3px;border-color:#b0b0b0"></div>
<div class="a" style="left:1382.5px;top:226.5px;width:15px;height:15px"><svg width="15" height="15" viewBox="0 0 16 16"><circle cx="6.500" cy="6.500" r="5" fill="none" stroke="#7a7a7a" stroke-width="1.400"/><path d="M10.200 10.200l4.800 4.800" stroke="#7a7a7a" stroke-width="1.600" stroke-linecap="round"/></svg></div>
<div class="t " style="left:1407px;top:227.5px;font-size:13px;color:#8a8a8a;letter-spacing:-0.232px;">Поиск...</div>
<div class="box" style="left:1373px;top:247px;width:547px;height:741px;border-color:#a8a8a8"></div>
<div class="rt" style="left:1384px;top:254.1px"></div>
<div class="a" style="left:1402.0px;top:248.8px;width:20px;height:20px"><svg width="20" height="20" viewBox="0 0 20 20"><circle cx="10" cy="10" r="8.800" fill="#fafafa" stroke="#7a7a7a" stroke-width="1"/><path d="M10 4.500V10l3.500 2.500" fill="none" stroke="#7a7a7a" stroke-width="1.100"/></svg></div>
<div class="t " style="left:1428px;top:251.5px;font-size:15px;">Недавно использованные</div>
<div class="rt" style="left:1384px;top:276.1px"></div>
<div class="a" style="left:1402.0px;top:270.8px;width:20px;height:20px"><svg width="20" height="20" viewBox="0 0 20 20"><defs><linearGradient id="qg1" x1="0" y1="0" x2="0" y2="1"><stop offset="0" stop-color="#93b023"/><stop offset="1" stop-color="#4e8a38"/></linearGradient></defs><circle cx="10" cy="10" r="7.300" fill="none" stroke="url(#qg1)" stroke-width="3.100"/><path d="M12 12L19.500 19.500" stroke="#fff" stroke-width="5.600"/><path d="M8.600 8L12 9.400 10 11.400z" fill="#ee7913"/><path d="M12 9.400L13.300 10.700 11.300 12.700 10 11.400z" fill="#f0e64a"/><path d="M13.300 10.700L18.600 16a1.400 1.400 0 0 1-2 2L11.300 12.700z" fill="#589632"/><path d="M12.600 11.400L17.800 16.600" stroke="#7fb048" stroke-width="0.700"/></svg></div>
<div class="t " style="left:1428px;top:273.5px;font-size:15px;">Анализ растров</div>
<div class="rt" style="left:1384px;top:298.1px"></div>
<div class="a" style="left:1402.0px;top:292.8px;width:20px;height:20px"><svg width="20" height="20" viewBox="0 0 20 20"><defs><linearGradient id="qg1" x1="0" y1="0" x2="0" y2="1"><stop offset="0" stop-color="#93b023"/><stop offset="1" stop-color="#4e8a38"/></linearGradient></defs><circle cx="10" cy="10" r="7.300" fill="none" stroke="url(#qg1)" stroke-width="3.100"/><path d="M12 12L19.500 19.500" stroke="#fff" stroke-width="5.600"/><path d="M8.600 8L12 9.400 10 11.400z" fill="#ee7913"/><path d="M12 9.400L13.300 10.700 11.300 12.700 10 11.400z" fill="#f0e64a"/><path d="M13.300 10.700L18.600 16a1.400 1.400 0 0 1-2 2L11.300 12.700z" fill="#589632"/><path d="M12.600 11.400L17.800 16.600" stroke="#7fb048" stroke-width="0.700"/></svg></div>
<div class="t " style="left:1428px;top:295.5px;font-size:15px;">Вектор - Анализ</div>
<div class="rt" style="left:1384px;top:320.1px"></div>
<div class="a" style="left:1402.0px;top:314.8px;width:20px;height:20px"><svg width="20" height="20" viewBox="0 0 20 20"><defs><linearGradient id="qg1" x1="0" y1="0" x2="0" y2="1"><stop offset="0" stop-color="#93b023"/><stop offset="1" stop-color="#4e8a38"/></linearGradient></defs><circle cx="10" cy="10" r="7.300" fill="none" stroke="url(#qg1)" stroke-width="3.100"/><path d="M12 12L19.500 19.500" stroke="#fff" stroke-width="5.600"/><path d="M8.600 8L12 9.400 10 11.400z" fill="#ee7913"/><path d="M12 9.400L13.300 10.700 11.300 12.700 10 11.400z" fill="#f0e64a"/><path d="M13.300 10.700L18.600 16a1.400 1.400 0 0 1-2 2L11.300 12.700z" fill="#589632"/><path d="M12.600 11.400L17.800 16.600" stroke="#7fb048" stroke-width="0.700"/></svg></div>
<div class="t " style="left:1428px;top:317.5px;font-size:15px;">Вектор - Выборка</div>
<div class="rt" style="left:1384px;top:342.1px"></div>
<div class="a" style="left:1402.0px;top:336.8px;width:20px;height:20px"><svg width="20" height="20" viewBox="0 0 20 20"><defs><linearGradient id="qg1" x1="0" y1="0" x2="0" y2="1"><stop offset="0" stop-color="#93b023"/><stop offset="1" stop-color="#4e8a38"/></linearGradient></defs><circle cx="10" cy="10" r="7.300" fill="none" stroke="url(#qg1)" stroke-width="3.100"/><path d="M12 12L19.500 19.500" stroke="#fff" stroke-width="5.600"/><path d="M8.600 8L12 9.400 10 11.400z" fill="#ee7913"/><path d="M12 9.400L13.300 10.700 11.300 12.700 10 11.400z" fill="#f0e64a"/><path d="M13.300 10.700L18.600 16a1.400 1.400 0 0 1-2 2L11.300 12.700z" fill="#589632"/><path d="M12.600 11.400L17.800 16.600" stroke="#7fb048" stroke-width="0.700"/></svg></div>
<div class="t " style="left:1428px;top:339.5px;font-size:15px;">Вектор - Геометрия</div>
<div class="rt" style="left:1384px;top:364.1px"></div>
<div class="a" style="left:1402.0px;top:358.8px;width:20px;height:20px"><svg width="20" height="20" viewBox="0 0 20 20"><defs><linearGradient id="qg1" x1="0" y1="0" x2="0" y2="1"><stop offset="0" stop-color="#93b023"/><stop offset="1" stop-color="#4e8a38"/></linearGradient></defs><circle cx="10" cy="10" r="7.300" fill="none" stroke="url(#qg1)" stroke-width="3.100"/><path d="M12 12L19.500 19.500" stroke="#fff" stroke-width="5.600"/><path d="M8.600 8L12 9.400 10 11.400z" fill="#ee7913"/><path d="M12 9.400L13.300 10.700 11.300 12.700 10 11.400z" fill="#f0e64a"/><path d="M13.300 10.700L18.600 16a1.400 1.400 0 0 1-2 2L11.300 12.700z" fill="#589632"/><path d="M12.600 11.400L17.800 16.600" stroke="#7fb048" stroke-width="0.700"/></svg></div>
<div class="t " style="left:1428px;top:361.5px;font-size:15px;">Вектор - общие инструменты</div>
<div class="rt" style="left:1384px;top:386.1px"></div>
<div class="a" style="left:1402.0px;top:380.8px;width:20px;height:20px"><svg width="20" height="20" viewBox="0 0 20 20"><defs><linearGradient id="qg1" x1="0" y1="0" x2="0" y2="1"><stop offset="0" stop-color="#93b023"/><stop offset="1" stop-color="#4e8a38"/></linearGradient></defs><circle cx="10" cy="10" r="7.300" fill="none" stroke="url(#qg1)" stroke-width="3.100"/><path d="M12 12L19.500 19.500" stroke="#fff" stroke-width="5.600"/><path d="M8.600 8L12 9.400 10 11.400z" fill="#ee7913"/><path d="M12 9.400L13.300 10.700 11.300 12.700 10 11.400z" fill="#f0e64a"/><path d="M13.300 10.700L18.600 16a1.400 1.400 0 0 1-2 2L11.300 12.700z" fill="#589632"/><path d="M12.600 11.400L17.800 16.600" stroke="#7fb048" stroke-width="0.700"/></svg></div>
<div class="t " style="left:1428px;top:383.5px;font-size:15px;">Вектор - Создание</div>
<div class="rt" style="left:1384px;top:408.1px"></div>
<div class="a" style="left:1402.0px;top:402.8px;width:20px;height:20px"><svg width="20" height="20" viewBox="0 0 20 20"><defs><linearGradient id="qg1" x1="0" y1="0" x2="0" y2="1"><stop offset="0" stop-color="#93b023"/><stop offset="1" stop-color="#4e8a38"/></linearGradient></defs><circle cx="10" cy="10" r="7.300" fill="none" stroke="url(#qg1)" stroke-width="3.100"/><path d="M12 12L19.500 19.500" stroke="#fff" stroke-width="5.600"/><path d="M8.600 8L12 9.400 10 11.400z" fill="#ee7913"/><path d="M12 9.400L13.300 10.700 11.300 12.700 10 11.400z" fill="#f0e64a"/><path d="M13.300 10.700L18.600 16a1.400 1.400 0 0 1-2 2L11.300 12.700z" fill="#589632"/><path d="M12.600 11.400L17.800 16.600" stroke="#7fb048" stroke-width="0.700"/></svg></div>
<div class="t " style="left:1428px;top:405.5px;font-size:15px;">Вектор - Таблица атрибутов</div>
<div class="rt" style="left:1384px;top:430.1px"></div>
<div class="a" style="left:1402.0px;top:424.8px;width:20px;height:20px"><svg width="20" height="20" viewBox="0 0 20 20"><defs><linearGradient id="qg1" x1="0" y1="0" x2="0" y2="1"><stop offset="0" stop-color="#93b023"/><stop offset="1" stop-color="#4e8a38"/></linearGradient></defs><circle cx="10" cy="10" r="7.300" fill="none" stroke="url(#qg1)" stroke-width="3.100"/><path d="M12 12L19.500 19.500" stroke="#fff" stroke-width="5.600"/><path d="M8.600 8L12 9.400 10 11.400z" fill="#ee7913"/><path d="M12 9.400L13.300 10.700 11.300 12.700 10 11.400z" fill="#f0e64a"/><path d="M13.300 10.700L18.600 16a1.400 1.400 0 0 1-2 2L11.300 12.700z" fill="#589632"/><path d="M12.600 11.400L17.800 16.600" stroke="#7fb048" stroke-width="0.700"/></svg></div>
<div class="t " style="left:1428px;top:427.5px;font-size:15px;">Векторные тайлы</div>
<div class="rt" style="left:1384px;top:452.1px"></div>
<div class="a" style="left:1402.0px;top:446.8px;width:20px;height:20px"><svg width="20" height="20" viewBox="0 0 20 20"><defs><linearGradient id="qg1" x1="0" y1="0" x2="0" y2="1"><stop offset="0" stop-color="#93b023"/><stop offset="1" stop-color="#4e8a38"/></linearGradient></defs><circle cx="10" cy="10" r="7.300" fill="none" stroke="url(#qg1)" stroke-width="3.100"/><path d="M12 12L19.500 19.500" stroke="#fff" stroke-width="5.600"/><path d="M8.600 8L12 9.400 10 11.400z" fill="#ee7913"/><path d="M12 9.400L13.300 10.700 11.300 12.700 10 11.400z" fill="#f0e64a"/><path d="M13.300 10.700L18.600 16a1.400 1.400 0 0 1-2 2L11.300 12.700z" fill="#589632"/><path d="M12.600 11.400L17.800 16.600" stroke="#7fb048" stroke-width="0.700"/></svg></div>
<div class="t " style="left:1428px;top:449.5px;font-size:15px;">Графики и диаграммы</div>
<div class="rt" style="left:1384px;top:474.1px"></div>
<div class="a" style="left:1402.0px;top:468.8px;width:20px;height:20px"><svg width="20" height="20" viewBox="0 0 20 20"><defs><linearGradient id="qg1" x1="0" y1="0" x2="0" y2="1"><stop offset="0" stop-color="#93b023"/><stop offset="1" stop-color="#4e8a38"/></linearGradient></defs><circle cx="10" cy="10" r="7.300" fill="none" stroke="url(#qg1)" stroke-width="3.100"/><path d="M12 12L19.500 19.500" stroke="#fff" stroke-width="5.600"/><path d="M8.600 8L12 9.400 10 11.400z" fill="#ee7913"/><path d="M12 9.400L13.300 10.700 11.300 12.700 10 11.400z" fill="#f0e64a"/><path d="M13.300 10.700L18.600 16a1.400 1.400 0 0 1-2 2L11.300 12.700z" fill="#589632"/><path d="M12.600 11.400L17.800 16.600" stroke="#7fb048" stroke-width="0.700"/></svg></div>
<div class="t " style="left:1428px;top:471.5px;font-size:15px;">Инструменты пространственных операций</div>
<div class="rt" style="left:1384px;top:496.1px"></div>
<div class="a" style="left:1402.0px;top:490.8px;width:20px;height:20px"><svg width="20" height="20" viewBox="0 0 20 20"><defs><linearGradient id="qg1" x1="0" y1="0" x2="0" y2="1"><stop offset="0" stop-color="#93b023"/><stop offset="1" stop-color="#4e8a38"/></linearGradient></defs><circle cx="10" cy="10" r="7.300" fill="none" stroke="url(#qg1)" stroke-width="3.100"/><path d="M12 12L19.500 19.500" stroke="#fff" stroke-width="5.600"/><path d="M8.600 8L12 9.400 10 11.400z" fill="#ee7913"/><path d="M12 9.400L13.300 10.700 11.300 12.700 10 11.400z" fill="#f0e64a"/><path d="M13.300 10.700L18.600 16a1.400 1.400 0 0 1-2 2L11.300 12.700z" fill="#589632"/><path d="M12.600 11.400L17.800 16.600" stroke="#7fb048" stroke-width="0.700"/></svg></div>
<div class="t " style="left:1428px;top:493.5px;font-size:15px;">Интерполяция</div>
<div class="rt" style="left:1384px;top:518.1px"></div>
<div class="a" style="left:1402.0px;top:512.8px;width:20px;height:20px"><svg width="20" height="20" viewBox="0 0 20 20"><defs><linearGradient id="qg1" x1="0" y1="0" x2="0" y2="1"><stop offset="0" stop-color="#93b023"/><stop offset="1" stop-color="#4e8a38"/></linearGradient></defs><circle cx="10" cy="10" r="7.300" fill="none" stroke="url(#qg1)" stroke-width="3.100"/><path d="M12 12L19.500 19.500" stroke="#fff" stroke-width="5.600"/><path d="M8.600 8L12 9.400 10 11.400z" fill="#ee7913"/><path d="M12 9.400L13.300 10.700 11.300 12.700 10 11.400z" fill="#f0e64a"/><path d="M13.300 10.700L18.600 16a1.400 1.400 0 0 1-2 2L11.300 12.700z" fill="#589632"/><path d="M12.600 11.400L17.800 16.600" stroke="#7fb048" stroke-width="0.700"/></svg></div>
<div class="t " style="left:1428px;top:515.5px;font-size:15px;">Картография</div>
<div class="rt" style="left:1384px;top:540.1px"></div>
<div class="a" style="left:1402.0px;top:534.8px;width:20px;height:20px"><svg width="20" height="20" viewBox="0 0 20 20"><defs><linearGradient id="qg1" x1="0" y1="0" x2="0" y2="1"><stop offset="0" stop-color="#93b023"/><stop offset="1" stop-color="#4e8a38"/></linearGradient></defs><circle cx="10" cy="10" r="7.300" fill="none" stroke="url(#qg1)" stroke-width="3.100"/><path d="M12 12L19.500 19.500" stroke="#fff" stroke-width="5.600"/><path d="M8.600 8L12 9.400 10 11.400z" fill="#ee7913"/><path d="M12 9.400L13.300 10.700 11.300 12.700 10 11.400z" fill="#f0e64a"/><path d="M13.300 10.700L18.600 16a1.400 1.400 0 0 1-2 2L11.300 12.700z" fill="#589632"/><path d="M12.600 11.400L17.800 16.600" stroke="#7fb048" stroke-width="0.700"/></svg></div>
<div class="t " style="left:1428px;top:537.5px;font-size:15px;">Меш</div>
<div class="rt" style="left:1384px;top:562.1px"></div>
<div class="a" style="left:1402.0px;top:556.8px;width:20px;height:20px"><svg width="20" height="20" viewBox="0 0 20 20"><defs><linearGradient id="qg1" x1="0" y1="0" x2="0" y2="1"><stop offset="0" stop-color="#93b023"/><stop offset="1" stop-color="#4e8a38"/></linearGradient></defs><circle cx="10" cy="10" r="7.300" fill="none" stroke="url(#qg1)" stroke-width="3.100"/><path d="M12 12L19.500 19.500" stroke="#fff" stroke-width="5.600"/><path d="M8.600 8L12 9.400 10 11.400z" fill="#ee7913"/><path d="M12 9.400L13.300 10.700 11.300 12.700 10 11.400z" fill="#f0e64a"/><path d="M13.300 10.700L18.600 16a1.400 1.400 0 0 1-2 2L11.300 12.700z" fill="#589632"/><path d="M12.600 11.400L17.800 16.600" stroke="#7fb048" stroke-width="0.700"/></svg></div>
<div class="t " style="left:1428px;top:559.5px;font-size:15px;">Растр</div>
<div class="rt" style="left:1384px;top:584.1px"></div>
<div class="a" style="left:1402.0px;top:578.8px;width:20px;height:20px"><svg width="20" height="20" viewBox="0 0 20 20"><defs><linearGradient id="qg1" x1="0" y1="0" x2="0" y2="1"><stop offset="0" stop-color="#93b023"/><stop offset="1" stop-color="#4e8a38"/></linearGradient></defs><circle cx="10" cy="10" r="7.300" fill="none" stroke="url(#qg1)" stroke-width="3.100"/><path d="M12 12L19.500 19.500" stroke="#fff" stroke-width="5.600"/><path d="M8.600 8L12 9.400 10 11.400z" fill="#ee7913"/><path d="M12 9.400L13.300 10.700 11.300 12.700 10 11.400z" fill="#f0e64a"/><path d="M13.300 10.700L18.600 16a1.400 1.400 0 0 1-2 2L11.300 12.700z" fill="#589632"/><path d="M12.600 11.400L17.800 16.600" stroke="#7fb048" stroke-width="0.700"/></svg></div>
<div class="t " style="left:1428px;top:581.5px;font-size:15px;">Растр - Анализ рельефа</div>
<div class="rt" style="left:1384px;top:606.1px"></div>
<div class="a" style="left:1402.0px;top:600.8px;width:20px;height:20px"><svg width="20" height="20" viewBox="0 0 20 20"><defs><linearGradient id="qg1" x1="0" y1="0" x2="0" y2="1"><stop offset="0" stop-color="#93b023"/><stop offset="1" stop-color="#4e8a38"/></linearGradient></defs><circle cx="10" cy="10" r="7.300" fill="none" stroke="url(#qg1)" stroke-width="3.100"/><path d="M12 12L19.500 19.500" stroke="#fff" stroke-width="5.600"/><path d="M8.600 8L12 9.400 10 11.400z" fill="#ee7913"/><path d="M12 9.400L13.300 10.700 11.300 12.700 10 11.400z" fill="#f0e64a"/><path d="M13.300 10.700L18.600 16a1.400 1.400 0 0 1-2 2L11.300 12.700z" fill="#589632"/><path d="M12.600 11.400L17.800 16.600" stroke="#7fb048" stroke-width="0.700"/></svg></div>
<div class="t " style="left:1428px;top:603.5px;font-size:15px;">Растр - Создание</div>
<div class="rt" style="left:1384px;top:628.1px"></div>
<div class="a" style="left:1402.0px;top:622.8px;width:20px;height:20px"><svg width="20" height="20" viewBox="0 0 20 20"><defs><linearGradient id="qg1" x1="0" y1="0" x2="0" y2="1"><stop offset="0" stop-color="#93b023"/><stop offset="1" stop-color="#4e8a38"/></linearGradient></defs><circle cx="10" cy="10" r="7.300" fill="none" stroke="url(#qg1)" stroke-width="3.100"/><path d="M12 12L19.500 19.500" stroke="#fff" stroke-width="5.600"/><path d="M8.600 8L12 9.400 10 11.400z" fill="#ee7913"/><path d="M12 9.400L13.300 10.700 11.300 12.700 10 11.400z" fill="#f0e64a"/><path d="M13.300 10.700L18.600 16a1.400 1.400 0 0 1-2 2L11.300 12.700z" fill="#589632"/><path d="M12.600 11.400L17.800 16.600" stroke="#7fb048" stroke-width="0.700"/></svg></div>
<div class="t " style="left:1428px;top:625.5px;font-size:15px;">Сетевой анализ</div>
<div class="rt" style="left:1384px;top:650.1px"></div>
<div class="a" style="left:1402.0px;top:644.8px;width:20px;height:20px"><svg width="20" height="20" viewBox="0 0 20 20"><defs><linearGradient id="qg1" x1="0" y1="0" x2="0" y2="1"><stop offset="0" stop-color="#93b023"/><stop offset="1" stop-color="#4e8a38"/></linearGradient></defs><circle cx="10" cy="10" r="7.300" fill="none" stroke="url(#qg1)" stroke-width="3.100"/><path d="M12 12L19.500 19.500" stroke="#fff" stroke-width="5.600"/><path d="M8.600 8L12 9.400 10 11.400z" fill="#ee7913"/><path d="M12 9.400L13.300 10.700 11.300 12.700 10 11.400z" fill="#f0e64a"/><path d="M13.300 10.700L18.600 16a1.400 1.400 0 0 1-2 2L11.300 12.700z" fill="#589632"/><path d="M12.600 11.400L17.800 16.600" stroke="#7fb048" stroke-width="0.700"/></svg></div>
<div class="t " style="left:1428px;top:647.5px;font-size:15px;">Слои</div>
<div class="rt" style="left:1384px;top:672.1px"></div>
<div class="a" style="left:1402.0px;top:666.8px;width:20px;height:20px"><svg width="20" height="20" viewBox="0 0 20 20"><defs><linearGradient id="qg1" x1="0" y1="0" x2="0" y2="1"><stop offset="0" stop-color="#93b023"/><stop offset="1" stop-color="#4e8a38"/></linearGradient></defs><circle cx="10" cy="10" r="7.300" fill="none" stroke="url(#qg1)" stroke-width="3.100"/><path d="M12 12L19.500 19.500" stroke="#fff" stroke-width="5.600"/><path d="M8.600 8L12 9.400 10 11.400z" fill="#ee7913"/><path d="M12 9.400L13.300 10.700 11.300 12.700 10 11.400z" fill="#f0e64a"/><path d="M13.300 10.700L18.600 16a1.400 1.400 0 0 1-2 2L11.300 12.700z" fill="#589632"/><path d="M12.600 11.400L17.800 16.600" stroke="#7fb048" stroke-width="0.700"/></svg></div>
<div class="t " style="left:1428px;top:669.5px;font-size:15px;">Файлы</div>
<div class="rt" style="left:1384px;top:694.1px"></div>
<div class="a" style="left:1402.0px;top:688.8px;width:20px;height:20px"><svg width="20" height="20" viewBox="0 0 20 20"><defs><linearGradient id="qg1" x1="0" y1="0" x2="0" y2="1"><stop offset="0" stop-color="#93b023"/><stop offset="1" stop-color="#4e8a38"/></linearGradient></defs><circle cx="10" cy="10" r="7.300" fill="none" stroke="url(#qg1)" stroke-width="3.100"/><path d="M12 12L19.500 19.500" stroke="#fff" stroke-width="5.600"/><path d="M8.600 8L12 9.400 10 11.400z" fill="#ee7913"/><path d="M12 9.400L13.300 10.700 11.300 12.700 10 11.400z" fill="#f0e64a"/><path d="M13.300 10.700L18.600 16a1.400 1.400 0 0 1-2 2L11.300 12.700z" fill="#589632"/><path d="M12.600 11.400L17.800 16.600" stroke="#7fb048" stroke-width="0.700"/></svg></div>
<div class="t " style="left:1428px;top:691.5px;font-size:15px;">Database</div>
<div class="rt" style="left:1384px;top:716.1px"></div>
<div class="a" style="left:1402.0px;top:710.8px;width:20px;height:20px"><svg width="20" height="20" viewBox="0 0 20 20"><defs><linearGradient id="qg1" x1="0" y1="0" x2="0" y2="1"><stop offset="0" stop-color="#93b023"/><stop offset="1" stop-color="#4e8a38"/></linearGradient></defs><circle cx="10" cy="10" r="7.300" fill="none" stroke="url(#qg1)" stroke-width="3.100"/><path d="M12 12L19.500 19.500" stroke="#fff" stroke-width="5.600"/><path d="M8.600 8L12 9.400 10 11.400z" fill="#ee7913"/><path d="M12 9.400L13.300 10.700 11.300 12.700 10 11.400z" fill="#f0e64a"/><path d="M13.300 10.700L18.600 16a1.400 1.400 0 0 1-2 2L11.300 12.700z" fill="#589632"/><path d="M12.600 11.400L17.800 16.600" stroke="#7fb048" stroke-width="0.700"/></svg></div>
<div class="t " style="left:1428px;top:713.5px;font-size:15px;">GPS</div>
<div class="rt" style="left:1384px;top:738.1px"></div>
<div class="a" style="left:1402.0px;top:732.8px;width:20px;height:20px"><svg width="20" height="20" viewBox="0 0 20 20"><path d="M12.500 12.500l6 6" stroke="#000" stroke-width="3" stroke-linecap="round"/><circle cx="8" cy="8" r="6.500" fill="#1f9a3a" stroke="#000" stroke-width="1.800"/><path d="M10.500 3.500c-1.700 1.200-2.500 2.500-3.700 4.200s-1.700 3.300-1.300 5" fill="none" stroke="#18c8e8" stroke-width="1.500"/></svg></div>
<div class="t " style="left:1428px;top:735.5px;font-size:15px;">dzetsaka</div>
<div class="rt" style="left:1384px;top:760.1px"></div>
<div class="a" style="left:1402.0px;top:754.8px;width:20px;height:20px"><svg width="20" height="20" viewBox="0 0 20 20"><circle cx="12" cy="9" r="7.500" fill="#6ab0e0"/><path d="M8 4c2-1 4 0 5 2s-1 4-3 4-3-2-3-3.500zM14 8l3 1 1 3-3 2z" fill="#5a9a3a"/><path d="M3 1l6 8M1.500 3.500l5-3" stroke="#333" stroke-width="1.200"/><text x="0" y="19.500" style="font-family:'Liberation Sans',sans-serif;font-weight:bold;font-size:8.500px" fill="#000" textLength="19" lengthAdjust="spacingAndGlyphs">GDAL</text></svg></div>
<div class="t " style="left:1428px;top:757.5px;font-size:15px;">GDAL</div>
<div class="rt" style="left:1384px;top:782.1px"></div>
<div class="a" style="left:1402.0px;top:776.8px;width:20px;height:20px"><svg width="20" height="20" viewBox="0 0 20 20"><path d="M10 1l8 9-8 7-8-7z" fill="#f8f8f8" stroke="#8a8a8a" stroke-width="0.900"/><path d="M10 15V7M10 15c-1-3-3-5-5-6M10 15c1-3 3-5 5-6M10 13c-.500-2.500-2-5-3.500-6.500M10 13c.500-2.500 2-5 3.500-6.500" fill="none" stroke="#2a8a2a" stroke-width="1.100"/><path d="M2.500 14.500l7.500 4.500 7.500-4.500" fill="none" stroke="#333" stroke-width="1"/></svg></div>
<div class="t " style="left:1428px;top:779.5px;font-size:15px;">GRASS</div>
<div class="rt" style="left:1384px;top:804.1px"></div>
<div class="a" style="left:1402.0px;top:798.8px;width:20px;height:20px"><svg width="20" height="20" viewBox="0 0 20 20"><path d="M1 16c3-2 7-2 10-1s6 0 8-2v3c-3 2-6 2-9 1.500S4 17 1 18z" fill="#4a9a2a"/><path d="M14 12c2 0 5 0 5 1v2c-2-1-4-1-5-1z" fill="#38b8e8"/><circle cx="9" cy="8" r="2.800" fill="#6ab040"/><circle cx="13.500" cy="6" r="2.500" fill="#88c850"/><path d="M9 10v5M13.500 8v6" stroke="#5a3a1a" stroke-width="1"/></svg></div>
<div class="t " style="left:1428px;top:801.5px;font-size:15px;">ICEtool</div>
<div class="rt" style="left:1384px;top:826.1px"></div>
<div class="a" style="left:1402.0px;top:820.8px;width:20px;height:20px"><svg width="20" height="20" viewBox="0 0 20 20"><path d="M11 2h5c2 0 2.500 1 2.500 2.500v2c0 1.500-1 2.500-2.500 2.500h-2c2 0 4.500.500 4.500 3v3c0 2-1 3-3 3h-4.500" fill="none" stroke="#000" stroke-width="2.200"/><text transform="translate(7.500 19.500) rotate(-90)" style="font-family:'Liberation Sans',sans-serif;font-weight:bold;font-size:7.500px" fill="#000" textLength="18.500" lengthAdjust="spacingAndGlyphs">QNEAT</text><circle cx="11" cy="2.500" r="1.500" fill="#fff" stroke="#000" stroke-width="0.800"/><circle cx="11" cy="18" r="1.500" fill="#fff" stroke="#000" stroke-width="0.800"/></svg></div>
<div class="t " style="left:1428px;top:823.5px;font-size:15px;">QNEAT3 - Qgis Network Analysis Toolbox</div>
<div class="rt" style="left:1384px;top:848.1px"></div>
<div class="a" style="left:1402.0px;top:842.8px;width:20px;height:20px"><svg width="20" height="20" viewBox="0 0 20 20"><rect width="20" height="20" fill="#7ab864"/><path d="M0 0h20L0 20z" fill="#8cc878"/><path d="M8 12L3 17.500" stroke="#fff" stroke-width="2.400" stroke-linecap="round"/><circle cx="11.500" cy="8" r="5.500" fill="#a8d898" fill-opacity="0.600" stroke="#fff" stroke-width="2"/></svg></div>
<div class="t " style="left:1428px;top:845.5px;font-size:15px;">QuickOSM</div>
<div class="rt" style="left:1384px;top:870.1px"></div>
<div class="a" style="left:1402.0px;top:864.8px;width:20px;height:20px"><svg width="20" height="20" viewBox="0 0 20 20"><circle cx="10" cy="10" r="8.500" fill="#fff" stroke="#1a5ab0" stroke-width="1.800"/><path d="M2 9.500h16M6 5l11 8M6 15l8-9" stroke="#1a5ab0" stroke-width="1.800" fill="none"/><path d="M13 10l7-.500" stroke="#f0f0f0" stroke-width="2.500"/></svg></div>
<div class="t " style="left:1428px;top:867.5px;font-size:15px;">SAGA</div>
<div class="rt" style="left:1384px;top:892.1px"></div>
<div class="a" style="left:1402.0px;top:886.8px;width:20px;height:20px"><svg width="20" height="20" viewBox="0 0 24 24"><path d="M2 3l2-3h16l2 3z" fill="#3cc83c"/><rect x="0" y="3" width="24" height="21" fill="#f0a838"/><rect x="1.500" y="4.500" width="21" height="18" fill="none" stroke="#3ce0e8" stroke-width="1.400" stroke-dasharray="3 1.800"/><path d="M3.500 11.500h7M7 8v7" stroke="#fff" stroke-width="1.400"/><rect x="12" y="10" width="7" height="7" fill="#f4f4f4" stroke="#4a8a5a" stroke-width="0.800"/><rect x="14.500" y="12.500" width="6" height="6" fill="#f4f4f4" stroke="#888" stroke-width="0.600"/><g fill="#d01010"><rect x="15" y="14" width="4" height="4"/><rect x="20" y="14" width="3.500" height="4"/><rect x="15" y="19" width="4" height="3.500"/><rect x="20" y="19" width="3.500" height="3.500"/></g></svg></div>
<div class="t " style="left:1428px;top:889.5px;font-size:15px;">Semi-Automatic Classification Plugin</div>
</body></html>
